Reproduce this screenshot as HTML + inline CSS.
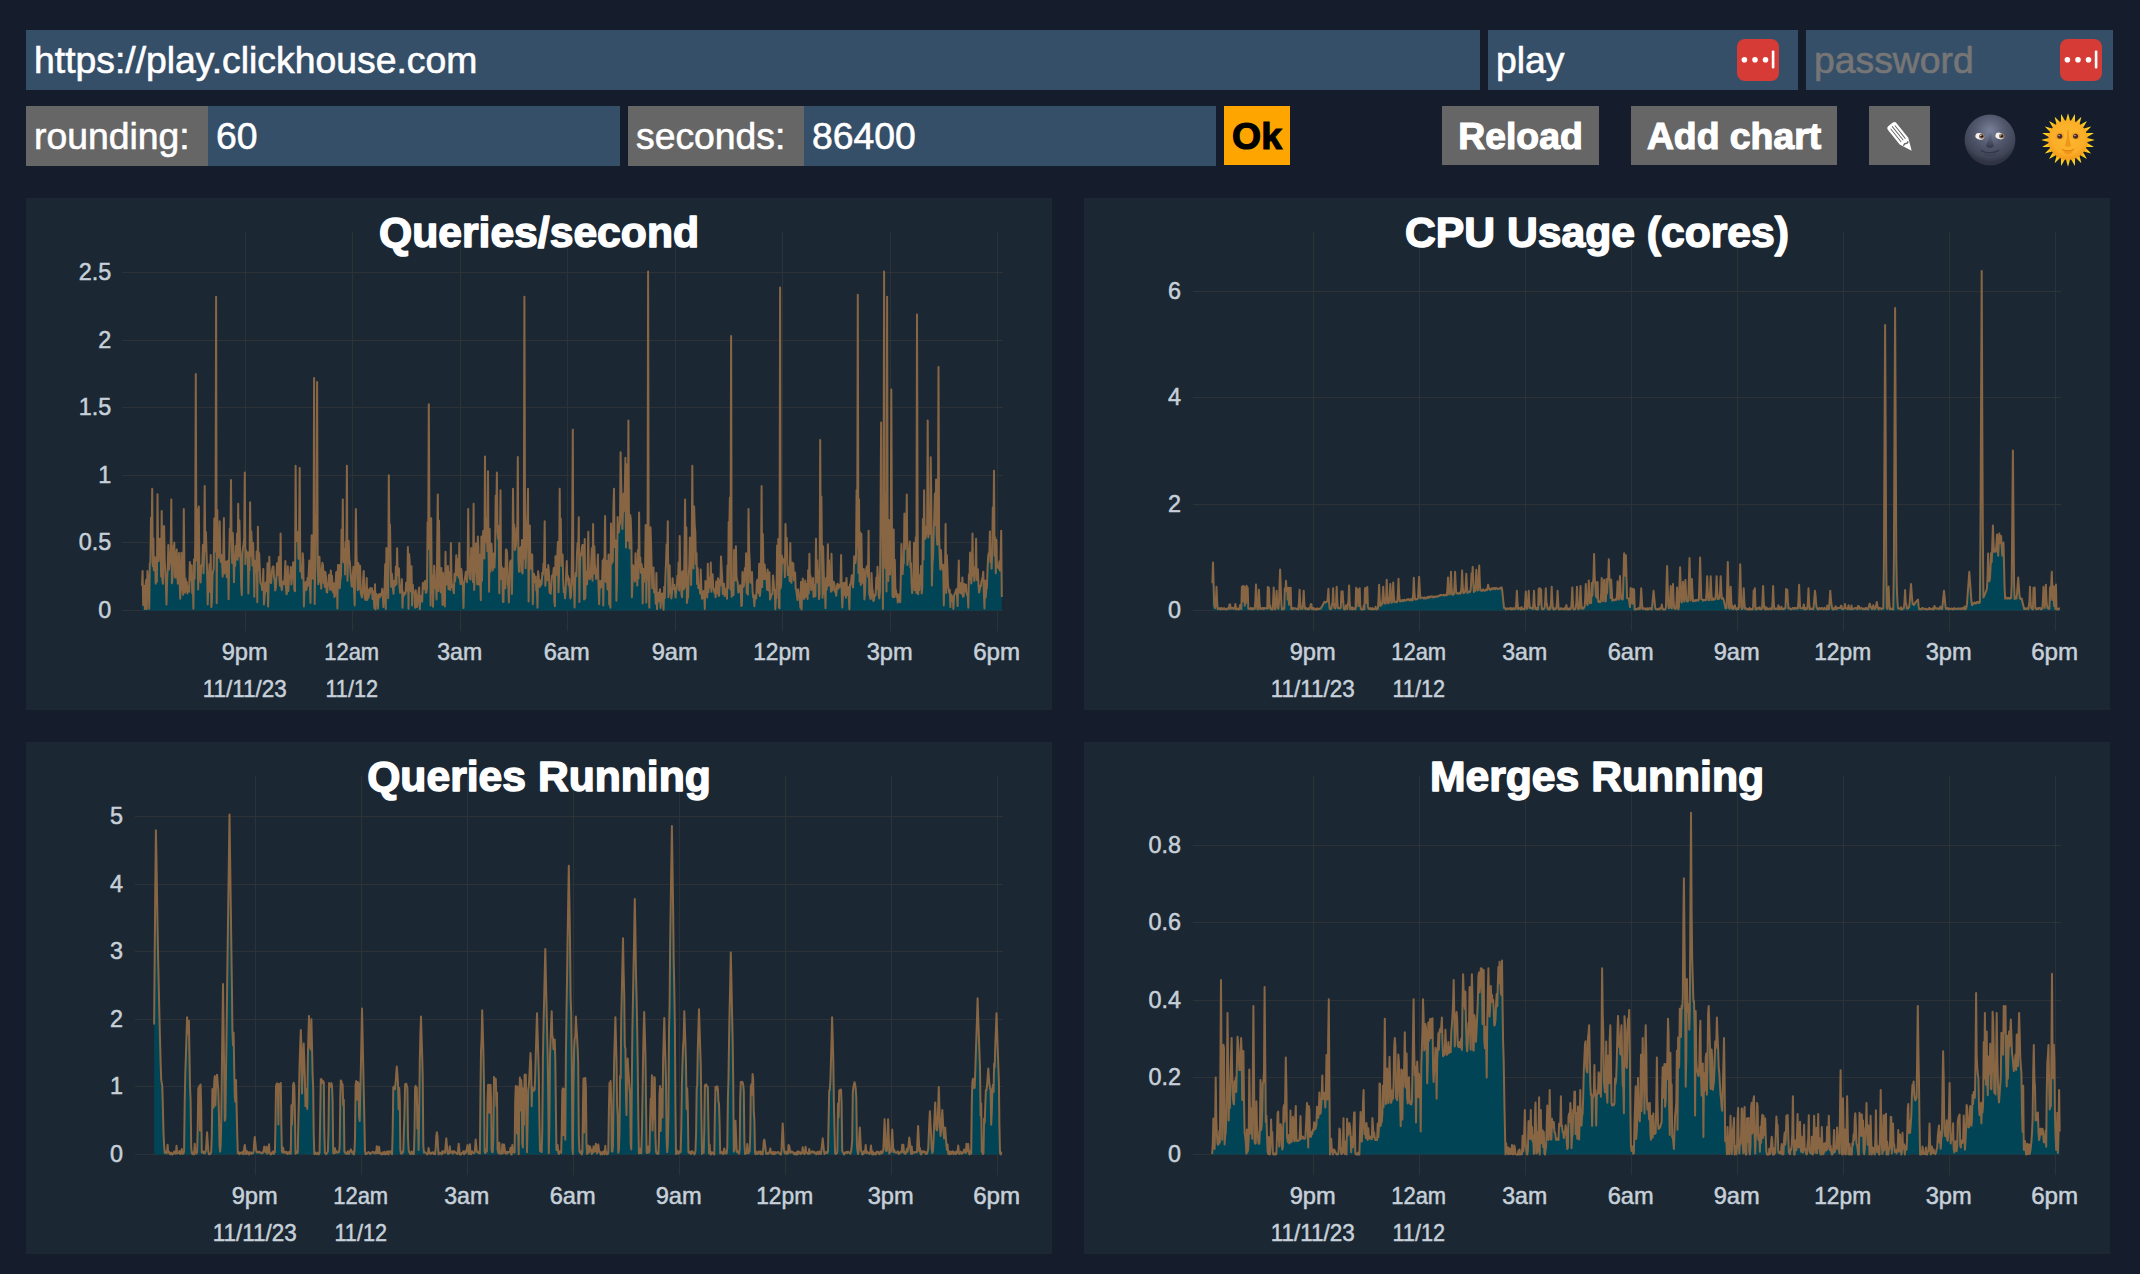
<!DOCTYPE html>
<html lang="en"><head><meta charset="utf-8"><title>ClickHouse Dashboard</title>
<style>
html,body{margin:0;padding:0;}
body{width:2140px;height:1274px;overflow:hidden;background:#151C2C;font-family:"Liberation Sans",sans-serif;color:#fff;position:relative;}
.b{position:absolute;box-sizing:border-box;height:60px;line-height:60px;font-size:37.33px;white-space:nowrap;padding-left:8px;color:#fff;-webkit-text-stroke:0.6px;}
.in{background:#364f69;}
.lb{background:#666666;}
.bt{background:#666666;font-weight:bold;text-align:center;padding:0;height:59px;line-height:61px;-webkit-text-stroke:1.2px;overflow:hidden;}
.ph{color:#767676;}
.ic{position:absolute;}
.panel{position:absolute;width:1026px;height:512px;background:#1b2834;overflow:hidden;}
.panel svg{position:absolute;left:0;top:0;}
.ttl{font:bold 42.67px "Liberation Sans",sans-serif;fill:#fff;text-anchor:middle;stroke:#fff;stroke-width:1.5px;stroke-linejoin:round;}
.ax{font:23.4px "Liberation Sans",sans-serif;fill:#c7d0d9;stroke:#c7d0d9;stroke-width:0.5px;}
.xl{text-anchor:middle;}
.yl{text-anchor:end;}
.g{stroke:#2c3235;stroke-width:1;shape-rendering:crispEdges;}
.f{fill:#004455;stroke:none;}
.s{fill:none;stroke:#886644;stroke-width:2;stroke-linejoin:round;}
</style></head>
<body>
<div class="b in" style="left:26px;top:30px;width:1454px">https://play.clickhouse.com</div>
<div class="b in" style="left:1488px;top:30px;width:310px">play</div>
<div class="b in ph" style="left:1806px;top:30px;width:307px">password</div>
<div class="b lb" style="left:26px;top:106px;width:182px">rounding:</div>
<div class="b in" style="left:208px;top:106px;width:412px">60</div>
<div class="b lb" style="left:628px;top:106px;width:176px">seconds:</div>
<div class="b in" style="left:804px;top:106px;width:412px">86400</div>
<div class="b bt" style="left:1224px;top:106px;width:66px;background:#FFA500;color:#000">Ok</div>
<div class="b bt" style="left:1442px;top:106px;width:157px">Reload</div>
<div class="b bt" style="left:1631px;top:106px;width:206px">Add chart</div>
<div class="b bt" style="left:1869px;top:106px;width:61px"></div>
<svg class="ic" style="left:1737px;top:39px" width="42" height="42" viewBox="0 0 42 42"><rect x="0" y="0" width="42" height="42" rx="8" ry="8" fill="#d73b36"/><circle cx="7.4" cy="20.7" r="2.8" fill="#fff"/><circle cx="18" cy="20.7" r="2.8" fill="#fff"/><circle cx="28.5" cy="20.7" r="2.8" fill="#fff"/><rect x="34.8" y="11.6" width="2.6" height="17.8" rx="1" fill="#fff"/></svg>
<svg class="ic" style="left:2060px;top:39px" width="42" height="42" viewBox="0 0 42 42"><rect x="0" y="0" width="42" height="42" rx="8" ry="8" fill="#d73b36"/><circle cx="7.4" cy="20.7" r="2.8" fill="#fff"/><circle cx="18" cy="20.7" r="2.8" fill="#fff"/><circle cx="28.5" cy="20.7" r="2.8" fill="#fff"/><rect x="34.8" y="11.6" width="2.6" height="17.8" rx="1" fill="#fff"/></svg>
<svg class="ic" style="left:1869px;top:106px" width="61" height="59" viewBox="0 0 61 59"><g transform="translate(22.1,19.1) rotate(51.3)"><path d="M2.2 -5.5H20.6L32.9 0L20.6 5.5H2.2Q-1 5.5 -1 2.6V-2.6Q-1 -5.5 2.2 -5.5Z" fill="#fff"/><path d="M2.6 -2.7H19.5M1.6 0H19.5M2.6 2.7H19.5" stroke="#666" stroke-width="0.95" fill="none"/><path d="M23.6 -2.6Q24.6 -1 23.6 0Q22.8 1.2 23.6 2.7" stroke="#666" stroke-width="1.5" fill="none" stroke-linecap="round"/></g></svg>
<svg class="ic" style="left:1959.5px;top:109.6px" width="60" height="60" viewBox="0 0 60 60"><defs><radialGradient id="mg" cx="0.5" cy="0.32" r="0.62"><stop offset="0" stop-color="#7a829a"/><stop offset="0.45" stop-color="#545a6f"/><stop offset="0.85" stop-color="#3f4456"/><stop offset="1" stop-color="#2f3343"/></radialGradient><linearGradient id="mn" x1="0" y1="0" x2="0" y2="1"><stop offset="0" stop-color="#6f778d" stop-opacity="0"/><stop offset="1" stop-color="#2e3242"/></linearGradient></defs><circle cx="30" cy="30" r="25.4" fill="url(#mg)"/><path d="M29.2 17Q28.6 30 26.4 34.6Q25 37.6 30 38Q35.2 37.6 33.6 34.6Q31.6 30 31 17Z" fill="url(#mn)" opacity="0.85"/><path d="M21.2 40.6Q30 45.4 38.8 40.4" stroke="#2e3242" stroke-width="1.3" fill="none" stroke-linecap="round" opacity="0.8"/><path d="M24.5 44.6Q30 46.6 35.5 44.6" stroke="#30344a" stroke-width="1" fill="none" stroke-linecap="round" opacity="0.5"/><ellipse cx="19.8" cy="26.3" rx="4.5" ry="3.2" fill="#f4f1ec" transform="rotate(14 19.8 26.3)"/><ellipse cx="39.8" cy="26" rx="4.5" ry="3.2" fill="#f4f1ec" transform="rotate(14 39.8 26)"/><circle cx="21.6" cy="26.2" r="2.5" fill="#86644f"/><circle cx="41.6" cy="25.9" r="2.5" fill="#86644f"/><circle cx="21.8" cy="26.2" r="1.25" fill="#1d1a1c"/><circle cx="41.8" cy="25.9" r="1.25" fill="#1d1a1c"/><circle cx="20.9" cy="25.3" r="0.6" fill="#fff"/><circle cx="40.9" cy="25" r="0.6" fill="#fff"/></svg>
<svg class="ic" style="left:2037.6px;top:109.5px" width="60" height="60" viewBox="0 0 60 60"><defs><radialGradient id="sg" cx="0.5" cy="0.42" r="0.6"><stop offset="0" stop-color="#fdb830"/><stop offset="0.7" stop-color="#fbae27"/><stop offset="1" stop-color="#f3971b"/></radialGradient><radialGradient id="sr" cx="0.5" cy="0.5" r="0.5"><stop offset="0.68" stop-color="#f59f1c"/><stop offset="0.86" stop-color="#fcd41c"/><stop offset="1" stop-color="#fde93a"/></radialGradient></defs><path d="M27.69 11.54L30.00 3.20L32.31 11.54ZM32.55 11.58L36.94 4.11L37.01 12.77ZM37.23 12.86L43.40 6.79L41.23 15.17ZM41.42 15.32L48.95 11.05L44.68 18.58ZM44.83 18.77L53.21 16.60L47.14 22.77ZM47.23 22.99L55.89 23.06L48.42 27.45ZM48.46 27.69L56.80 30.00L48.46 32.31ZM48.42 32.55L55.89 36.94L47.23 37.01ZM47.14 37.23L53.21 43.40L44.83 41.23ZM44.68 41.42L48.95 48.95L41.42 44.68ZM41.23 44.83L43.40 53.21L37.23 47.14ZM37.01 47.23L36.94 55.89L32.55 48.42ZM32.31 48.46L30.00 56.80L27.69 48.46ZM27.45 48.42L23.06 55.89L22.99 47.23ZM22.77 47.14L16.60 53.21L18.77 44.83ZM18.58 44.68L11.05 48.95L15.32 41.42ZM15.17 41.23L6.79 43.40L12.86 37.23ZM12.77 37.01L4.11 36.94L11.58 32.55ZM11.54 32.31L3.20 30.00L11.54 27.69ZM11.58 27.45L4.11 23.06L12.77 22.99ZM12.86 22.77L6.79 16.60L15.17 18.77ZM15.32 18.58L11.05 11.05L18.58 15.32ZM18.77 15.17L16.60 6.79L22.77 12.86ZM22.99 12.77L23.06 4.11L27.45 11.58Z" fill="url(#sr)"/><circle cx="30.0" cy="30.0" r="19.7" fill="url(#sg)"/><path d="M29.3 20Q28.8 31 27.2 34.4Q26.4 36.6 30 36.8Q33.6 36.6 32.8 34.4Q31.2 31 30.7 20Z" fill="#e98d14" opacity="0.75"/><ellipse cx="21.8" cy="26" rx="4.4" ry="3.6" fill="#f0951a" opacity="0.55"/><ellipse cx="37.6" cy="26" rx="4.4" ry="3.6" fill="#f0951a" opacity="0.55"/><circle cx="21.8" cy="26.3" r="2.5" fill="#4a2b2e"/><circle cx="37.6" cy="26.3" r="2.5" fill="#4a2b2e"/><circle cx="21.1" cy="25.5" r="0.7" fill="#d9c6c0"/><circle cx="36.9" cy="25.5" r="0.7" fill="#d9c6c0"/><path d="M24.6 39.6Q30 42 35.4 39.4Q33.6 44.2 30 44.4Q26.4 44.2 24.6 39.6Z" fill="#ee9016" opacity="0.8"/><path d="M24.2 39.6Q30 42.4 35.8 39.4" stroke="#dd7f10" stroke-width="0.9" fill="none" stroke-linecap="round"/></svg>
<div class="panel" style="left:26px;top:198px"><svg width="1026" height="512" viewBox="0 0 1026 512">
<path class="g" d="M219.5 34.4V432.5M326.5 34.4V432.5M434.5 34.4V432.5M541.5 34.4V432.5M649.5 34.4V432.5M756.5 34.4V432.5M864.5 34.4V432.5M971.5 34.4V432.5M96.2 412.5H976.8M96.2 344.5H976.8M96.2 277.5H976.8M96.2 209.5H976.8M96.2 142.5H976.8M96.2 74.5H976.8"/>
<path class="f" d="M116 412.5L116 387.8L116.6 372.9L117.2 406.9L117.8 387.8L118.4 390.1L119 411.1L119.6 386.9L120.2 381.7L120.8 411L121.4 373L122 392.2L122.6 378.4L123.2 410.7L123.8 365.4L124.4 364.7L125 319.8L125.6 343.1L126.2 290.8L126.8 368.3L127.4 340.3L127.9 372.3L128.5 366.5L129.1 359.3L129.7 385.7L130.3 381.1L130.9 383.7L131.5 296.2L132.1 351.6L132.7 362.9L133.3 340.9L133.9 351.7L134.5 340.6L135.1 378.4L135.7 313.1L136.3 381.5L136.9 385.7L137.5 330L138.1 327.9L138.7 362.8L139.3 374.5L139.9 386.8L140.5 406.6L141.1 382.5L141.7 370.6L142.3 346.9L142.9 371.6L143.5 365.6L144.1 364.9L144.7 350L145.3 301.6L145.9 385.3L146.5 380.1L147.1 348.1L147.7 354.6L148.3 344.5L148.9 378.8L149.5 379.6L150.1 359.4L150.7 351.5L151.3 376.1L151.8 385.8L152.4 381.8L153 355L153.6 380.5L154.2 400.8L154.8 392L155.4 354.8L156 391.7L156.6 379.6L157.2 396.8L157.8 311.1L158.4 368.5L159 394.4L159.6 380.5L160.2 393L160.8 383.9L161.4 395.5L162 388.6L162.6 392.5L163.2 393.6L163.8 364L164.4 374.9L165 382.2L165.6 367.2L166.2 395.2L166.8 382.2L167.4 410.7L168 361.2L168.6 380.8L169.2 344.4L169.8 175.9L170.4 362.3L171 310.9L171.6 352.8L172.2 391.4L172.8 308.4L173.4 372.5L174 378.5L174.6 384.4L175.2 367.8L175.7 366.7L176.3 367.4L176.9 347.1L177.5 375.3L178.1 357.2L178.7 288.1L179.3 353.3L179.9 334L180.5 354L181.1 372.9L181.7 406.5L182.3 387.1L182.9 378.8L183.5 366.3L184.1 394.1L184.7 357L185.3 409L185.9 404.3L186.5 376.8L187.1 373.1L187.7 370.7L188.3 320.6L188.9 339.9L189.5 353.4L190.1 98.8L190.7 405.2L191.3 311.9L191.9 359.9L192.5 350.9L193.1 358.5L193.7 323.3L194.3 359.8L194.9 364.1L195.5 356.9L196.1 364.6L196.7 378.6L197.3 355.5L197.9 319.9L198.5 375.4L199.1 370.2L199.6 370.5L200.2 363.6L200.8 379.2L201.4 372.8L202 362.8L202.6 401.3L203.2 359.4L203.8 330.5L204.4 340.5L205 282L205.6 346.1L206.2 365L206.8 334.9L207.4 355.4L208 384.2L208.6 357.5L209.2 367.8L209.8 347.8L210.4 361L211 335.6L211.6 361.8L212.2 305.7L212.8 357.9L213.4 322.4L214 349.7L214.6 362.3L215.2 388.1L215.8 397.1L216.4 355.8L217 350.1L217.6 346.3L218.2 339.8L218.8 274.6L219.4 366.3L220 352.1L220.6 358.7L221.2 358.3L221.8 354.3L222.4 395.5L223 367.8L223.5 372.3L224.1 304.3L224.7 357.8L225.3 333.2L225.9 346.8L226.5 367.6L227.1 345.1L227.7 363.8L228.3 398.8L228.9 370.2L229.5 362.7L230.1 374.6L230.7 353.4L231.3 404.2L231.9 328.7L232.5 372.1L233.1 355L233.7 368.6L234.3 384.5L234.9 386.1L235.5 386.4L236.1 392L236.7 386.6L237.3 370.9L237.9 406.4L238.5 399.6L239.1 393.7L239.7 384.4L240.3 393.3L240.9 388.8L241.5 365.3L242.1 408.6L242.7 385.3L243.3 358.8L243.9 383.1L244.5 383.9L245.1 385.2L245.7 375.8L246.3 370.8L246.9 368.4L247.4 368.4L248 379.2L248.6 381.9L249.2 392.4L249.8 390L250.4 380.3L251 365.3L251.6 365.4L252.2 376.8L252.8 359.1L253.4 380.5L254 387.7L254.6 335.4L255.2 388.1L255.8 392.2L256.4 387L257 383.5L257.6 385.1L258.2 386.1L258.8 376.7L259.4 363L260 389.5L260.6 396.3L261.2 393.3L261.8 368.3L262.4 393L263 380.7L263.6 377.8L264.2 378.8L264.8 368.9L265.4 386.4L266 380.5L266.6 377.3L267.2 364.3L267.8 373.6L268.4 392.2L269 393.2L269.6 267.8L270.2 338.1L270.8 343.2L271.3 339.9L271.9 333.9L272.5 360.8L273.1 336.9L273.7 269.9L274.3 373.6L274.9 367.2L275.5 369.4L276.1 380.2L276.7 355.3L277.3 363.4L277.9 408.4L278.5 388.6L279.1 388.5L279.7 384.1L280.3 392.2L280.9 388.5L281.5 380L282.1 387.5L282.7 374.7L283.3 362.6L283.9 387.4L284.5 404.9L285.1 371.7L285.7 337.2L286.3 380.4L286.9 380.6L287.5 366.9L288.1 180L288.7 406L289.3 362.7L289.9 318.1L290.5 336.6L291.1 184L291.7 368.5L292.3 386.3L292.9 358.7L293.5 358.9L294.1 383.7L294.7 380.5L295.2 390.6L295.8 371.4L296.4 364.8L297 367.5L297.6 385.3L298.2 373.5L298.8 388.9L299.4 374.1L300 379.2L300.6 394.1L301.2 394.6L301.8 386.8L302.4 384.9L303 376.7L303.6 385.6L304.2 391.8L304.8 372.4L305.4 391.4L306 377.7L306.6 392.7L307.2 394.5L307.8 385.3L308.4 398.9L309 398L309.6 385.7L310.2 374.4L310.8 373.7L311.4 410.4L312 367.1L312.6 389.5L313.2 367.1L313.8 390.3L314.4 381.3L315 377.5L315.6 331.4L316.2 361.5L316.8 301.6L317.4 364.2L318 361.3L318.6 351.1L319.1 376.5L319.7 343.7L320.3 361.6L320.9 267.8L321.5 382.7L322.1 356.7L322.7 342.7L323.3 361.7L323.9 364.3L324.5 374.6L325.1 382.1L325.7 388.4L326.3 388.6L326.9 375.1L327.5 368.8L328.1 394.1L328.7 407.4L329.3 363.3L329.9 311.1L330.5 356.3L331.1 373.3L331.7 392.2L332.3 365L332.9 390.9L333.5 367.5L334.1 367.9L334.7 394.3L335.3 396.9L335.9 399.4L336.5 395.4L337.1 382.1L337.7 372.9L338.3 391.9L338.9 400.5L339.5 402L340.1 393.3L340.7 380L341.3 401.9L341.9 391.3L342.5 399.8L343 396L343.6 396.5L344.2 390.1L344.8 393.7L345.4 391.6L346 390.2L346.6 401.1L347.2 393.6L347.8 400.6L348.4 410.2L349 386.2L349.6 411.4L350.2 395.7L350.8 399.1L351.4 397.8L352 410.5L352.6 396.2L353.2 398.8L353.8 399.5L354.4 395.7L355 395.8L355.6 397.5L356.2 390.8L356.8 397.9L357.4 409.1L358 399.7L358.6 390.4L359.2 366.2L359.8 411.1L360.4 349.9L361 352.2L361.6 385.5L362.2 400.2L362.8 277.3L363.4 340.6L364 326.5L364.6 364.6L365.2 388.8L365.8 375.4L366.4 381.9L366.9 390.1L367.5 395.8L368.1 383L368.7 385.4L369.3 387.5L369.9 368.4L370.5 386L371.1 350.3L371.7 377.2L372.3 371.5L372.9 370.3L373.5 388.4L374.1 394.8L374.7 390.5L375.3 390.6L375.9 381.2L376.5 409.7L377.1 394.1L377.7 398L378.3 396.2L378.9 394.8L379.5 395.6L380.1 384.7L380.7 390.6L381.3 392.8L381.9 349L382.5 410.7L383.1 356.1L383.7 364.3L384.3 391.6L384.9 393.4L385.5 368.3L386.1 407.4L386.7 386.4L387.3 393.7L387.9 393.9L388.5 394.5L389.1 409.8L389.7 392.2L390.3 400.5L390.8 409.1L391.4 407.3L392 398.7L392.6 393.2L393.2 389.5L393.8 411.1L394.4 398.3L395 400.1L395.6 397.5L396.2 403.6L396.8 384.9L397.4 388.2L398 391L398.6 383.7L399.2 382.8L399.8 394.8L400.4 394.5L401 390.2L401.6 324.3L402.2 351L402.8 206.3L403.4 326.3L404 335.8L404.6 407.4L405.2 320.3L405.8 394.7L406.4 377.3L407 408.7L407.6 387.5L408.2 367.8L408.8 381.8L409.4 390.1L410 387.5L410.6 401.4L411.2 347.7L411.8 296.6L412.4 393L413 322.8L413.6 374.6L414.2 384.5L414.7 394.3L415.3 369.9L415.9 380.8L416.5 407L417.1 375.1L417.7 405.9L418.3 389.3L418.9 408.6L419.5 353.8L420.1 385.4L420.7 386.5L421.3 383.8L421.9 368L422.5 391.3L423.1 374.3L423.7 376.6L424.3 391.9L424.9 344.9L425.5 381.5L426.1 389.4L426.7 386.9L427.3 392.2L427.9 395.3L428.5 375.7L429.1 383.1L429.7 374.4L430.3 357.3L430.9 377L431.5 361.4L432.1 375.8L432.7 379.6L433.3 344.9L433.9 380.5L434.5 386.1L435.1 370.8L435.7 373.7L436.3 385.5L436.9 387.2L437.5 410.1L438.1 385.3L438.6 382.4L439.2 378.6L439.8 373.8L440.4 375.4L441 384.3L441.6 371.5L442.2 311.1L442.8 358L443.4 374.4L444 380.9L444.6 381.5L445.2 349.9L445.8 357.2L446.4 352L447 384.3L447.6 305.7L448.2 391.9L448.8 370.8L449.4 374.6L450 345.3L450.6 362.7L451.2 386.3L451.8 338.6L452.4 349.5L453 386.7L453.6 356.8L454.2 380.2L454.8 402.2L455.4 338.5L456 382.8L456.6 347.4L457.2 332.9L457.8 348.5L458.4 360.5L459 258.4L459.6 334L460.2 344.2L460.8 320.4L461.4 353.2L462 273.2L462.5 345.1L463.1 393.7L463.7 331L464.3 373.8L464.9 363.8L465.5 345.7L466.1 357.5L466.7 372.4L467.3 358L467.9 355.4L468.5 369.6L469.1 352.9L469.7 297.4L470.3 315.3L470.9 274.6L471.5 334.1L472.1 340.7L472.7 328.1L473.3 395.2L473.9 353.8L474.5 292.2L475.1 380.7L475.7 368.8L476.3 371.6L476.9 403.8L477.5 404L478.1 370.6L478.7 387.5L479.3 390.2L479.9 351.4L480.5 351.6L481.1 355.1L481.7 385.8L482.3 388.6L482.9 404.4L483.5 379.3L484.1 364.3L484.7 362.5L485.3 362.7L485.9 396L486.4 366.6L487 290.8L487.6 333.1L488.2 326.6L488.8 352.1L489.4 350.3L490 346.9L490.6 330.1L491.2 341L491.8 259L492.4 361.9L493 373.8L493.6 350.2L494.2 362.1L494.8 348.9L495.4 373.7L496 342L496.6 375.6L497.2 348.2L497.8 360.4L498.4 98.8L499 312.4L499.6 370.3L500.2 352L500.8 335.3L501.4 318.4L502 290.8L502.6 403.6L503.2 354.5L503.8 327.6L504.4 366.2L505 370.8L505.6 356.5L506.2 356.5L506.8 406.3L507.4 387L508 375.7L508.6 384.3L509.2 384.3L509.8 378.6L510.3 392.5L510.9 391.5L511.5 409.8L512.1 373.3L512.7 378.3L513.3 386.6L513.9 389L514.5 382.6L515.1 387L515.7 385.2L516.3 374.7L516.9 376.7L517.5 365.6L518.1 367.1L518.7 323.3L519.3 387.8L519.9 381.2L520.5 371.3L521.1 380.3L521.7 382.1L522.3 367L522.9 373.8L523.5 394L524.1 395.1L524.7 395.8L525.3 386.5L525.9 377.8L526.5 377.1L527.1 378.8L527.7 370L528.3 403L528.9 408.2L529.5 358.2L530.1 368.1L530.7 376.7L531.3 357.6L531.9 343.9L532.5 394.2L533.1 374.8L533.7 290.8L534.2 350.4L534.8 320.5L535.4 367.7L536 362.8L536.6 356.4L537.2 382.9L537.8 394.2L538.4 389.9L539 400.3L539.6 394L540.2 374.5L540.8 363L541.4 382.6L542 378L542.6 387.2L543.2 380.8L543.8 391.7L544.4 400.5L545 398.1L545.6 387L546.2 328.9L546.8 231.7L547.4 383.4L548 388.3L548.6 409.4L549.2 381.3L549.8 374.7L550.4 378L551 355.3L551.6 345L552.2 353.6L552.8 319.2L553.4 404.1L554 362.2L554.6 355.6L555.2 357.4L555.8 350L556.4 346.9L557 346.9L557.6 371.7L558.1 401.4L558.7 340.9L559.3 400.4L559.9 373.4L560.5 378.7L561.1 386.2L561.7 367.6L562.3 333.7L562.9 376.5L563.5 381.2L564.1 380.9L564.7 376.9L565.3 362.4L565.9 350.1L566.5 382.7L567.1 326L567.7 375.8L568.3 347.9L568.9 367.7L569.5 371.2L570.1 380.9L570.7 378.6L571.3 377.2L571.9 356.5L572.5 388.5L573.1 406.2L573.7 385.7L574.3 382.9L574.9 389.5L575.5 383.9L576.1 383.5L576.7 362.4L577.3 407.5L577.9 360.7L578.5 360.9L579.1 317.9L579.7 383.5L580.3 384.3L580.9 362.9L581.5 391.4L582 383.7L582.6 356.4L583.2 406.6L583.8 387.4L584.4 409.7L585 325.5L585.6 365.7L586.2 339.3L586.8 363.8L587.4 311.9L588 290.8L588.6 349.1L589.2 346.3L589.8 342.5L590.4 402.7L591 382.5L591.6 318.9L592.2 333.9L592.8 334.5L593.4 326.6L594 325.9L594.6 254.3L595.2 285.7L595.8 308.1L596.4 331L597 312.1L597.6 295.8L598.2 312.7L598.8 291.8L599.4 259.7L600 349.6L600.6 266.5L601.2 305.4L601.8 342.7L602.4 222.4L603 325.4L603.6 350.6L604.2 316.9L604.8 321.3L605.4 342.6L605.9 399.2L606.5 385.1L607.1 367.2L607.7 375.3L608.3 376.6L608.9 383.5L609.5 355.2L610.1 380.6L610.7 367.4L611.3 387.6L611.9 351.9L612.5 380.5L613.1 314.5L613.7 369.4L614.3 359.4L614.9 374.8L615.5 366L616.1 370.5L616.7 405.6L617.3 370.9L617.9 384L618.5 371.1L619.1 369.7L619.7 327L620.3 404.4L620.9 370L621.5 381.4L622.1 73.6L622.7 369.5L623.3 409.7L623.9 364.1L624.5 329.2L625.1 347.4L625.7 372.1L626.3 390.2L626.9 372.3L627.5 369.4L628.1 394.6L628.7 392.3L629.3 396.3L629.8 405.7L630.4 374.9L631 411.1L631.6 398.5L632.2 394.8L632.8 403.3L633.4 398.5L634 391.3L634.6 410L635.2 396.1L635.8 397.4L636.4 395.4L637 403.6L637.6 411.7L638.2 388.8L638.8 400.3L639.4 378L640 365.6L640.6 346.2L641.2 361.5L641.8 323.3L642.4 399.3L643 394.1L643.6 367.3L644.2 391.5L644.8 390.7L645.4 400.4L646 394.7L646.6 380.3L647.2 387.8L647.8 391L648.4 387.1L649 392.6L649.6 399.6L650.2 392.1L650.8 390.2L651.4 377.8L652 386.2L652.6 364.4L653.2 392.6L653.7 338.1L654.3 378.8L654.9 374.3L655.5 396.6L656.1 399.2L656.7 373.3L657.3 379.4L657.9 391.2L658.5 354.2L659.1 301.6L659.7 388.9L660.3 329.6L660.9 404.9L661.5 400.4L662.1 399.2L662.7 378.5L663.3 367.3L663.9 339.6L664.5 342.1L665.1 387.1L665.7 351.6L666.3 267.8L666.9 348L667.5 370.5L668.1 308.4L668.7 327.5L669.3 333.8L669.9 366L670.5 355.1L671.1 386.1L671.7 370.1L672.3 390L672.9 388.2L673.5 387.2L674.1 395.5L674.7 371.4L675.3 389.6L675.9 400.8L676.5 400.4L677.1 395.7L677.6 393.1L678.2 394.3L678.8 411L679.4 382.9L680 393.2L680.6 386.4L681.2 399.5L681.8 365.7L682.4 394.2L683 379.5L683.6 384.7L684.2 389.4L684.8 364.5L685.4 393.7L686 383L686.6 376.2L687.2 388.9L687.8 391.3L688.4 394.8L689 391.5L689.6 399.3L690.2 383.6L690.8 395.1L691.4 386.9L692 380.2L692.6 397.8L693.2 397.8L693.8 382L694.4 387.4L695 358.4L695.6 369.9L696.2 379.7L696.8 396L697.4 388.8L698 385.8L698.6 398.1L699.2 393.6L699.8 395.8L700.4 390L701 400.7L701.5 367.4L702.1 390.1L702.7 323.9L703.3 332.9L703.9 299.6L704.5 391.6L705.1 138L705.7 398.7L706.3 392L706.9 395.8L707.5 397.2L708.1 351.9L708.7 367.2L709.3 382.6L709.9 348.3L710.5 378.6L711.1 382L711.7 384.5L712.3 394.5L712.9 394L713.5 390.8L714.1 387.3L714.7 387.9L715.3 408.1L715.9 407.6L716.5 373.9L717.1 385.7L717.7 388.7L718.3 384L718.9 370L719.5 381.4L720.1 355.2L720.7 395L721.3 371.3L721.9 396.7L722.5 311.1L723.1 351.9L723.7 362.7L724.3 384.6L724.9 375.1L725.4 384.8L726 374.1L726.6 393.4L727.2 399.4L727.8 399.7L728.4 408.2L729 397.2L729.6 398.8L730.2 400.5L730.8 383.5L731.4 381.7L732 390.1L732.6 395.2L733.2 365.7L733.8 398L734.4 393.8L735 369.2L735.6 288.1L736.2 389.1L736.8 336.1L737.4 366.2L738 381.1L738.6 366.4L739.2 373.9L739.8 381.1L740.4 377.2L741 391.8L741.6 371.6L742.2 392L742.8 392.5L743.4 374.2L744 401.6L744.6 400.2L745.2 397.6L745.8 396L746.4 395.9L747 377.4L747.6 383.4L748.2 391.8L748.8 391.5L749.3 411.3L749.9 398.9L750.5 400.1L751.1 347.4L751.7 385.7L752.3 341L752.9 409.4L753.5 410.3L754.1 89.4L754.7 390.2L755.3 383.6L755.9 357.7L756.5 364.7L757.1 363.5L757.7 361.9L758.3 360.8L758.9 379.1L759.5 326L760.1 356.9L760.7 339.8L761.3 364.3L761.9 377.1L762.5 374.9L763.1 369.1L763.7 382.9L764.3 344.9L764.9 380.3L765.5 384.8L766.1 364.4L766.7 364.9L767.3 365.4L767.9 382.1L768.5 381.7L769.1 374.5L769.7 390.8L770.3 392.1L770.9 397.2L771.5 402.1L772.1 391.3L772.7 395.5L773.2 397.7L773.8 400.4L774.4 409.7L775 384.1L775.6 411.5L776.2 388.7L776.8 380.5L777.4 393.9L778 400.9L778.6 399.8L779.2 382.6L779.8 393.3L780.4 398.7L781 385.8L781.6 401L782.2 372L782.8 395.6L783.4 355.7L784 384.5L784.6 378.1L785.2 392L785.8 388L786.4 384.3L787 380.1L787.6 399.1L788.2 396.1L788.8 387.1L789.4 398.2L790 340.8L790.6 384.6L791.2 362.3L791.8 381.3L792.4 372.3L793 401.1L793.6 395.9L794.2 242.1L794.8 350.9L795.4 298.4L796 361.6L796.6 399.8L797.1 348.5L797.7 371L798.3 395.9L798.9 392.2L799.5 410.2L800.1 380L800.7 391.5L801.3 374.6L801.9 346.3L802.5 387.7L803.1 362.4L803.7 386.8L804.3 371.9L804.9 393.8L805.5 355.7L806.1 382L806.7 392.5L807.3 383.8L807.9 384.2L808.5 387.4L809.1 394L809.7 394.4L810.3 397.7L810.9 388.1L811.5 385.7L812.1 390.8L812.7 386.7L813.3 389.5L813.9 388.4L814.5 388L815.1 357.1L815.7 393.3L816.3 409.4L816.9 396.9L817.5 385L818.1 396.8L818.7 391.6L819.3 384.5L819.9 399.8L820.5 380L821 394.4L821.6 397.1L822.2 389L822.8 399.1L823.4 411.2L824 386.3L824.6 386.9L825.2 382.7L825.8 377.2L826.4 381.6L827 389.4L827.6 381.3L828.2 358.2L828.8 359.5L829.4 365.1L830 359.5L830.6 292.1L831.2 348.2L831.8 96.7L832.4 375L833 301.3L833.6 383.5L834.2 334.2L834.8 387L835.4 335.9L836 374.9L836.6 383.3L837.2 385.4L837.8 371L838.4 401.4L839 395.6L839.6 376.6L840.2 371.3L840.8 368.6L841.4 367.7L842 378.7L842.6 332.7L843.2 395.5L843.8 397.9L844.4 400.8L844.9 400.9L845.5 375.1L846.1 389.5L846.7 393.1L847.3 403L847.9 402.6L848.5 396.7L849.1 397.8L849.7 396.1L850.3 379.4L850.9 390.8L851.5 368.7L852.1 382L852.7 397.3L853.3 400.5L853.9 393.1L854.5 330.9L855.1 224.6L855.7 334.6L856.3 306.6L856.9 411.1L857.5 325.6L858.1 73.6L858.7 338.7L859.3 369.9L859.9 296.1L860.5 393.4L861.1 98.8L861.7 341.5L862.3 383L862.9 321.9L863.5 349.1L864.1 376.6L864.7 350.5L865.3 191.6L865.9 324.7L866.5 398L867.1 399.3L867.7 331.4L868.3 399L868.8 361.7L869.4 392.4L870 392.1L870.6 399.1L871.2 396L871.8 404.6L872.4 401.6L873 398.8L873.6 395.9L874.2 404.2L874.8 379.7L875.4 346L876 363.9L876.6 376.1L877.2 366.9L877.8 364.7L878.4 315.4L879 351.1L879.6 335.3L880.2 340.8L880.8 296.6L881.4 367L882 361.7L882.6 357.9L883.2 351.6L883.8 343.4L884.4 369.5L885 365.3L885.6 386L886.2 395.1L886.8 384.9L887.4 387.4L888 344.7L888.6 392.2L889.2 385.3L889.8 339.2L890.4 395.1L891 116.4L891.6 319.7L892.2 396.2L892.7 385.2L893.3 392L893.9 377.2L894.5 378.9L895.1 367.9L895.7 395.4L896.3 389.5L896.9 320.9L897.5 361.6L898.1 292.2L898.7 334.3L899.3 340.8L899.9 338.1L900.5 328.4L901.1 335.6L901.7 222.4L902.3 339.4L902.9 327.4L903.5 335.9L904.1 321.5L904.7 259.2L905.3 303.9L905.9 387.4L906.5 365.1L907.1 359.2L907.7 333.5L908.3 318.6L908.9 295.6L909.5 326.9L910.1 281.4L910.7 337L911.3 346.7L911.9 335.1L912.5 169.1L913.1 337.2L913.7 358.4L914.3 371.4L914.9 352L915.5 364.4L916.1 367.4L916.6 371.9L917.2 367L917.8 407.4L918.4 376.8L919 374L919.6 326L920.2 395L920.8 357.1L921.4 370.5L922 387.3L922.6 390.7L923.2 394.7L923.8 391.9L924.4 409.3L925 396.4L925.6 397.2L926.2 403.1L926.8 399.1L927.4 410.9L928 397.8L928.6 396L929.2 395.1L929.8 392.8L930.4 391.1L931 397.4L931.6 408.1L932.2 385.7L932.8 362.5L933.4 394.5L934 387.4L934.6 395L935.2 385.1L935.8 395.9L936.4 379.4L937 398.7L937.6 398.4L938.2 385.9L938.8 393.2L939.4 390.7L940 386.4L940.5 394.8L941.1 396.9L941.7 396.2L942.3 409.8L942.9 376.4L943.5 381L944.1 354.5L944.7 376.6L945.3 385.5L945.9 373.9L946.5 335.4L947.1 377.6L947.7 369.6L948.3 382.9L948.9 368.9L949.5 369.9L950.1 340.8L950.7 381.9L951.3 376.4L951.9 371.2L952.5 387.3L953.1 394.6L953.7 391.9L954.3 387.6L954.9 388.3L955.5 382.9L956.1 381.4L956.7 378.4L957.3 373.7L957.9 395.7L958.5 410.5L959.1 382.5L959.7 399.5L960.3 390.9L960.9 390.3L961.5 372.6L962.1 359L962.7 355.3L963.3 357.4L963.9 333.4L964.4 363.9L965 351.2L965.6 370.6L966.2 354.7L966.8 309.6L967.4 331.6L968 272.7L968.6 357.8L969.2 339.3L969.8 375.2L970.4 342L971 369.1L971.6 369.3L972.2 368.2L972.8 370.8L973.4 363.4L974 372.6L974.6 360.3L975.2 332.7L975.8 399L975.8 412.5Z"/>
<path class="s" d="M116 387.8L116.6 372.9L117.2 406.9L117.8 387.8L118.4 390.1L119 411.1L119.6 386.9L120.2 381.7L120.8 411L121.4 373L122 392.2L122.6 378.4L123.2 410.7L123.8 365.4L124.4 364.7L125 319.8L125.6 343.1L126.2 290.8L126.8 368.3L127.4 340.3L127.9 372.3L128.5 366.5L129.1 359.3L129.7 385.7L130.3 381.1L130.9 383.7L131.5 296.2L132.1 351.6L132.7 362.9L133.3 340.9L133.9 351.7L134.5 340.6L135.1 378.4L135.7 313.1L136.3 381.5L136.9 385.7L137.5 330L138.1 327.9L138.7 362.8L139.3 374.5L139.9 386.8L140.5 406.6L141.1 382.5L141.7 370.6L142.3 346.9L142.9 371.6L143.5 365.6L144.1 364.9L144.7 350L145.3 301.6L145.9 385.3L146.5 380.1L147.1 348.1L147.7 354.6L148.3 344.5L148.9 378.8L149.5 379.6L150.1 359.4L150.7 351.5L151.3 376.1L151.8 385.8L152.4 381.8L153 355L153.6 380.5L154.2 400.8L154.8 392L155.4 354.8L156 391.7L156.6 379.6L157.2 396.8L157.8 311.1L158.4 368.5L159 394.4L159.6 380.5L160.2 393L160.8 383.9L161.4 395.5L162 388.6L162.6 392.5L163.2 393.6L163.8 364L164.4 374.9L165 382.2L165.6 367.2L166.2 395.2L166.8 382.2L167.4 410.7L168 361.2L168.6 380.8L169.2 344.4L169.8 175.9L170.4 362.3L171 310.9L171.6 352.8L172.2 391.4L172.8 308.4L173.4 372.5L174 378.5L174.6 384.4L175.2 367.8L175.7 366.7L176.3 367.4L176.9 347.1L177.5 375.3L178.1 357.2L178.7 288.1L179.3 353.3L179.9 334L180.5 354L181.1 372.9L181.7 406.5L182.3 387.1L182.9 378.8L183.5 366.3L184.1 394.1L184.7 357L185.3 409L185.9 404.3L186.5 376.8L187.1 373.1L187.7 370.7L188.3 320.6L188.9 339.9L189.5 353.4L190.1 98.8L190.7 405.2L191.3 311.9L191.9 359.9L192.5 350.9L193.1 358.5L193.7 323.3L194.3 359.8L194.9 364.1L195.5 356.9L196.1 364.6L196.7 378.6L197.3 355.5L197.9 319.9L198.5 375.4L199.1 370.2L199.6 370.5L200.2 363.6L200.8 379.2L201.4 372.8L202 362.8L202.6 401.3L203.2 359.4L203.8 330.5L204.4 340.5L205 282L205.6 346.1L206.2 365L206.8 334.9L207.4 355.4L208 384.2L208.6 357.5L209.2 367.8L209.8 347.8L210.4 361L211 335.6L211.6 361.8L212.2 305.7L212.8 357.9L213.4 322.4L214 349.7L214.6 362.3L215.2 388.1L215.8 397.1L216.4 355.8L217 350.1L217.6 346.3L218.2 339.8L218.8 274.6L219.4 366.3L220 352.1L220.6 358.7L221.2 358.3L221.8 354.3L222.4 395.5L223 367.8L223.5 372.3L224.1 304.3L224.7 357.8L225.3 333.2L225.9 346.8L226.5 367.6L227.1 345.1L227.7 363.8L228.3 398.8L228.9 370.2L229.5 362.7L230.1 374.6L230.7 353.4L231.3 404.2L231.9 328.7L232.5 372.1L233.1 355L233.7 368.6L234.3 384.5L234.9 386.1L235.5 386.4L236.1 392L236.7 386.6L237.3 370.9L237.9 406.4L238.5 399.6L239.1 393.7L239.7 384.4L240.3 393.3L240.9 388.8L241.5 365.3L242.1 408.6L242.7 385.3L243.3 358.8L243.9 383.1L244.5 383.9L245.1 385.2L245.7 375.8L246.3 370.8L246.9 368.4L247.4 368.4L248 379.2L248.6 381.9L249.2 392.4L249.8 390L250.4 380.3L251 365.3L251.6 365.4L252.2 376.8L252.8 359.1L253.4 380.5L254 387.7L254.6 335.4L255.2 388.1L255.8 392.2L256.4 387L257 383.5L257.6 385.1L258.2 386.1L258.8 376.7L259.4 363L260 389.5L260.6 396.3L261.2 393.3L261.8 368.3L262.4 393L263 380.7L263.6 377.8L264.2 378.8L264.8 368.9L265.4 386.4L266 380.5L266.6 377.3L267.2 364.3L267.8 373.6L268.4 392.2L269 393.2L269.6 267.8L270.2 338.1L270.8 343.2L271.3 339.9L271.9 333.9L272.5 360.8L273.1 336.9L273.7 269.9L274.3 373.6L274.9 367.2L275.5 369.4L276.1 380.2L276.7 355.3L277.3 363.4L277.9 408.4L278.5 388.6L279.1 388.5L279.7 384.1L280.3 392.2L280.9 388.5L281.5 380L282.1 387.5L282.7 374.7L283.3 362.6L283.9 387.4L284.5 404.9L285.1 371.7L285.7 337.2L286.3 380.4L286.9 380.6L287.5 366.9L288.1 180L288.7 406L289.3 362.7L289.9 318.1L290.5 336.6L291.1 184L291.7 368.5L292.3 386.3L292.9 358.7L293.5 358.9L294.1 383.7L294.7 380.5L295.2 390.6L295.8 371.4L296.4 364.8L297 367.5L297.6 385.3L298.2 373.5L298.8 388.9L299.4 374.1L300 379.2L300.6 394.1L301.2 394.6L301.8 386.8L302.4 384.9L303 376.7L303.6 385.6L304.2 391.8L304.8 372.4L305.4 391.4L306 377.7L306.6 392.7L307.2 394.5L307.8 385.3L308.4 398.9L309 398L309.6 385.7L310.2 374.4L310.8 373.7L311.4 410.4L312 367.1L312.6 389.5L313.2 367.1L313.8 390.3L314.4 381.3L315 377.5L315.6 331.4L316.2 361.5L316.8 301.6L317.4 364.2L318 361.3L318.6 351.1L319.1 376.5L319.7 343.7L320.3 361.6L320.9 267.8L321.5 382.7L322.1 356.7L322.7 342.7L323.3 361.7L323.9 364.3L324.5 374.6L325.1 382.1L325.7 388.4L326.3 388.6L326.9 375.1L327.5 368.8L328.1 394.1L328.7 407.4L329.3 363.3L329.9 311.1L330.5 356.3L331.1 373.3L331.7 392.2L332.3 365L332.9 390.9L333.5 367.5L334.1 367.9L334.7 394.3L335.3 396.9L335.9 399.4L336.5 395.4L337.1 382.1L337.7 372.9L338.3 391.9L338.9 400.5L339.5 402L340.1 393.3L340.7 380L341.3 401.9L341.9 391.3L342.5 399.8L343 396L343.6 396.5L344.2 390.1L344.8 393.7L345.4 391.6L346 390.2L346.6 401.1L347.2 393.6L347.8 400.6L348.4 410.2L349 386.2L349.6 411.4L350.2 395.7L350.8 399.1L351.4 397.8L352 410.5L352.6 396.2L353.2 398.8L353.8 399.5L354.4 395.7L355 395.8L355.6 397.5L356.2 390.8L356.8 397.9L357.4 409.1L358 399.7L358.6 390.4L359.2 366.2L359.8 411.1L360.4 349.9L361 352.2L361.6 385.5L362.2 400.2L362.8 277.3L363.4 340.6L364 326.5L364.6 364.6L365.2 388.8L365.8 375.4L366.4 381.9L366.9 390.1L367.5 395.8L368.1 383L368.7 385.4L369.3 387.5L369.9 368.4L370.5 386L371.1 350.3L371.7 377.2L372.3 371.5L372.9 370.3L373.5 388.4L374.1 394.8L374.7 390.5L375.3 390.6L375.9 381.2L376.5 409.7L377.1 394.1L377.7 398L378.3 396.2L378.9 394.8L379.5 395.6L380.1 384.7L380.7 390.6L381.3 392.8L381.9 349L382.5 410.7L383.1 356.1L383.7 364.3L384.3 391.6L384.9 393.4L385.5 368.3L386.1 407.4L386.7 386.4L387.3 393.7L387.9 393.9L388.5 394.5L389.1 409.8L389.7 392.2L390.3 400.5L390.8 409.1L391.4 407.3L392 398.7L392.6 393.2L393.2 389.5L393.8 411.1L394.4 398.3L395 400.1L395.6 397.5L396.2 403.6L396.8 384.9L397.4 388.2L398 391L398.6 383.7L399.2 382.8L399.8 394.8L400.4 394.5L401 390.2L401.6 324.3L402.2 351L402.8 206.3L403.4 326.3L404 335.8L404.6 407.4L405.2 320.3L405.8 394.7L406.4 377.3L407 408.7L407.6 387.5L408.2 367.8L408.8 381.8L409.4 390.1L410 387.5L410.6 401.4L411.2 347.7L411.8 296.6L412.4 393L413 322.8L413.6 374.6L414.2 384.5L414.7 394.3L415.3 369.9L415.9 380.8L416.5 407L417.1 375.1L417.7 405.9L418.3 389.3L418.9 408.6L419.5 353.8L420.1 385.4L420.7 386.5L421.3 383.8L421.9 368L422.5 391.3L423.1 374.3L423.7 376.6L424.3 391.9L424.9 344.9L425.5 381.5L426.1 389.4L426.7 386.9L427.3 392.2L427.9 395.3L428.5 375.7L429.1 383.1L429.7 374.4L430.3 357.3L430.9 377L431.5 361.4L432.1 375.8L432.7 379.6L433.3 344.9L433.9 380.5L434.5 386.1L435.1 370.8L435.7 373.7L436.3 385.5L436.9 387.2L437.5 410.1L438.1 385.3L438.6 382.4L439.2 378.6L439.8 373.8L440.4 375.4L441 384.3L441.6 371.5L442.2 311.1L442.8 358L443.4 374.4L444 380.9L444.6 381.5L445.2 349.9L445.8 357.2L446.4 352L447 384.3L447.6 305.7L448.2 391.9L448.8 370.8L449.4 374.6L450 345.3L450.6 362.7L451.2 386.3L451.8 338.6L452.4 349.5L453 386.7L453.6 356.8L454.2 380.2L454.8 402.2L455.4 338.5L456 382.8L456.6 347.4L457.2 332.9L457.8 348.5L458.4 360.5L459 258.4L459.6 334L460.2 344.2L460.8 320.4L461.4 353.2L462 273.2L462.5 345.1L463.1 393.7L463.7 331L464.3 373.8L464.9 363.8L465.5 345.7L466.1 357.5L466.7 372.4L467.3 358L467.9 355.4L468.5 369.6L469.1 352.9L469.7 297.4L470.3 315.3L470.9 274.6L471.5 334.1L472.1 340.7L472.7 328.1L473.3 395.2L473.9 353.8L474.5 292.2L475.1 380.7L475.7 368.8L476.3 371.6L476.9 403.8L477.5 404L478.1 370.6L478.7 387.5L479.3 390.2L479.9 351.4L480.5 351.6L481.1 355.1L481.7 385.8L482.3 388.6L482.9 404.4L483.5 379.3L484.1 364.3L484.7 362.5L485.3 362.7L485.9 396L486.4 366.6L487 290.8L487.6 333.1L488.2 326.6L488.8 352.1L489.4 350.3L490 346.9L490.6 330.1L491.2 341L491.8 259L492.4 361.9L493 373.8L493.6 350.2L494.2 362.1L494.8 348.9L495.4 373.7L496 342L496.6 375.6L497.2 348.2L497.8 360.4L498.4 98.8L499 312.4L499.6 370.3L500.2 352L500.8 335.3L501.4 318.4L502 290.8L502.6 403.6L503.2 354.5L503.8 327.6L504.4 366.2L505 370.8L505.6 356.5L506.2 356.5L506.8 406.3L507.4 387L508 375.7L508.6 384.3L509.2 384.3L509.8 378.6L510.3 392.5L510.9 391.5L511.5 409.8L512.1 373.3L512.7 378.3L513.3 386.6L513.9 389L514.5 382.6L515.1 387L515.7 385.2L516.3 374.7L516.9 376.7L517.5 365.6L518.1 367.1L518.7 323.3L519.3 387.8L519.9 381.2L520.5 371.3L521.1 380.3L521.7 382.1L522.3 367L522.9 373.8L523.5 394L524.1 395.1L524.7 395.8L525.3 386.5L525.9 377.8L526.5 377.1L527.1 378.8L527.7 370L528.3 403L528.9 408.2L529.5 358.2L530.1 368.1L530.7 376.7L531.3 357.6L531.9 343.9L532.5 394.2L533.1 374.8L533.7 290.8L534.2 350.4L534.8 320.5L535.4 367.7L536 362.8L536.6 356.4L537.2 382.9L537.8 394.2L538.4 389.9L539 400.3L539.6 394L540.2 374.5L540.8 363L541.4 382.6L542 378L542.6 387.2L543.2 380.8L543.8 391.7L544.4 400.5L545 398.1L545.6 387L546.2 328.9L546.8 231.7L547.4 383.4L548 388.3L548.6 409.4L549.2 381.3L549.8 374.7L550.4 378L551 355.3L551.6 345L552.2 353.6L552.8 319.2L553.4 404.1L554 362.2L554.6 355.6L555.2 357.4L555.8 350L556.4 346.9L557 346.9L557.6 371.7L558.1 401.4L558.7 340.9L559.3 400.4L559.9 373.4L560.5 378.7L561.1 386.2L561.7 367.6L562.3 333.7L562.9 376.5L563.5 381.2L564.1 380.9L564.7 376.9L565.3 362.4L565.9 350.1L566.5 382.7L567.1 326L567.7 375.8L568.3 347.9L568.9 367.7L569.5 371.2L570.1 380.9L570.7 378.6L571.3 377.2L571.9 356.5L572.5 388.5L573.1 406.2L573.7 385.7L574.3 382.9L574.9 389.5L575.5 383.9L576.1 383.5L576.7 362.4L577.3 407.5L577.9 360.7L578.5 360.9L579.1 317.9L579.7 383.5L580.3 384.3L580.9 362.9L581.5 391.4L582 383.7L582.6 356.4L583.2 406.6L583.8 387.4L584.4 409.7L585 325.5L585.6 365.7L586.2 339.3L586.8 363.8L587.4 311.9L588 290.8L588.6 349.1L589.2 346.3L589.8 342.5L590.4 402.7L591 382.5L591.6 318.9L592.2 333.9L592.8 334.5L593.4 326.6L594 325.9L594.6 254.3L595.2 285.7L595.8 308.1L596.4 331L597 312.1L597.6 295.8L598.2 312.7L598.8 291.8L599.4 259.7L600 349.6L600.6 266.5L601.2 305.4L601.8 342.7L602.4 222.4L603 325.4L603.6 350.6L604.2 316.9L604.8 321.3L605.4 342.6L605.9 399.2L606.5 385.1L607.1 367.2L607.7 375.3L608.3 376.6L608.9 383.5L609.5 355.2L610.1 380.6L610.7 367.4L611.3 387.6L611.9 351.9L612.5 380.5L613.1 314.5L613.7 369.4L614.3 359.4L614.9 374.8L615.5 366L616.1 370.5L616.7 405.6L617.3 370.9L617.9 384L618.5 371.1L619.1 369.7L619.7 327L620.3 404.4L620.9 370L621.5 381.4L622.1 73.6L622.7 369.5L623.3 409.7L623.9 364.1L624.5 329.2L625.1 347.4L625.7 372.1L626.3 390.2L626.9 372.3L627.5 369.4L628.1 394.6L628.7 392.3L629.3 396.3L629.8 405.7L630.4 374.9L631 411.1L631.6 398.5L632.2 394.8L632.8 403.3L633.4 398.5L634 391.3L634.6 410L635.2 396.1L635.8 397.4L636.4 395.4L637 403.6L637.6 411.7L638.2 388.8L638.8 400.3L639.4 378L640 365.6L640.6 346.2L641.2 361.5L641.8 323.3L642.4 399.3L643 394.1L643.6 367.3L644.2 391.5L644.8 390.7L645.4 400.4L646 394.7L646.6 380.3L647.2 387.8L647.8 391L648.4 387.1L649 392.6L649.6 399.6L650.2 392.1L650.8 390.2L651.4 377.8L652 386.2L652.6 364.4L653.2 392.6L653.7 338.1L654.3 378.8L654.9 374.3L655.5 396.6L656.1 399.2L656.7 373.3L657.3 379.4L657.9 391.2L658.5 354.2L659.1 301.6L659.7 388.9L660.3 329.6L660.9 404.9L661.5 400.4L662.1 399.2L662.7 378.5L663.3 367.3L663.9 339.6L664.5 342.1L665.1 387.1L665.7 351.6L666.3 267.8L666.9 348L667.5 370.5L668.1 308.4L668.7 327.5L669.3 333.8L669.9 366L670.5 355.1L671.1 386.1L671.7 370.1L672.3 390L672.9 388.2L673.5 387.2L674.1 395.5L674.7 371.4L675.3 389.6L675.9 400.8L676.5 400.4L677.1 395.7L677.6 393.1L678.2 394.3L678.8 411L679.4 382.9L680 393.2L680.6 386.4L681.2 399.5L681.8 365.7L682.4 394.2L683 379.5L683.6 384.7L684.2 389.4L684.8 364.5L685.4 393.7L686 383L686.6 376.2L687.2 388.9L687.8 391.3L688.4 394.8L689 391.5L689.6 399.3L690.2 383.6L690.8 395.1L691.4 386.9L692 380.2L692.6 397.8L693.2 397.8L693.8 382L694.4 387.4L695 358.4L695.6 369.9L696.2 379.7L696.8 396L697.4 388.8L698 385.8L698.6 398.1L699.2 393.6L699.8 395.8L700.4 390L701 400.7L701.5 367.4L702.1 390.1L702.7 323.9L703.3 332.9L703.9 299.6L704.5 391.6L705.1 138L705.7 398.7L706.3 392L706.9 395.8L707.5 397.2L708.1 351.9L708.7 367.2L709.3 382.6L709.9 348.3L710.5 378.6L711.1 382L711.7 384.5L712.3 394.5L712.9 394L713.5 390.8L714.1 387.3L714.7 387.9L715.3 408.1L715.9 407.6L716.5 373.9L717.1 385.7L717.7 388.7L718.3 384L718.9 370L719.5 381.4L720.1 355.2L720.7 395L721.3 371.3L721.9 396.7L722.5 311.1L723.1 351.9L723.7 362.7L724.3 384.6L724.9 375.1L725.4 384.8L726 374.1L726.6 393.4L727.2 399.4L727.8 399.7L728.4 408.2L729 397.2L729.6 398.8L730.2 400.5L730.8 383.5L731.4 381.7L732 390.1L732.6 395.2L733.2 365.7L733.8 398L734.4 393.8L735 369.2L735.6 288.1L736.2 389.1L736.8 336.1L737.4 366.2L738 381.1L738.6 366.4L739.2 373.9L739.8 381.1L740.4 377.2L741 391.8L741.6 371.6L742.2 392L742.8 392.5L743.4 374.2L744 401.6L744.6 400.2L745.2 397.6L745.8 396L746.4 395.9L747 377.4L747.6 383.4L748.2 391.8L748.8 391.5L749.3 411.3L749.9 398.9L750.5 400.1L751.1 347.4L751.7 385.7L752.3 341L752.9 409.4L753.5 410.3L754.1 89.4L754.7 390.2L755.3 383.6L755.9 357.7L756.5 364.7L757.1 363.5L757.7 361.9L758.3 360.8L758.9 379.1L759.5 326L760.1 356.9L760.7 339.8L761.3 364.3L761.9 377.1L762.5 374.9L763.1 369.1L763.7 382.9L764.3 344.9L764.9 380.3L765.5 384.8L766.1 364.4L766.7 364.9L767.3 365.4L767.9 382.1L768.5 381.7L769.1 374.5L769.7 390.8L770.3 392.1L770.9 397.2L771.5 402.1L772.1 391.3L772.7 395.5L773.2 397.7L773.8 400.4L774.4 409.7L775 384.1L775.6 411.5L776.2 388.7L776.8 380.5L777.4 393.9L778 400.9L778.6 399.8L779.2 382.6L779.8 393.3L780.4 398.7L781 385.8L781.6 401L782.2 372L782.8 395.6L783.4 355.7L784 384.5L784.6 378.1L785.2 392L785.8 388L786.4 384.3L787 380.1L787.6 399.1L788.2 396.1L788.8 387.1L789.4 398.2L790 340.8L790.6 384.6L791.2 362.3L791.8 381.3L792.4 372.3L793 401.1L793.6 395.9L794.2 242.1L794.8 350.9L795.4 298.4L796 361.6L796.6 399.8L797.1 348.5L797.7 371L798.3 395.9L798.9 392.2L799.5 410.2L800.1 380L800.7 391.5L801.3 374.6L801.9 346.3L802.5 387.7L803.1 362.4L803.7 386.8L804.3 371.9L804.9 393.8L805.5 355.7L806.1 382L806.7 392.5L807.3 383.8L807.9 384.2L808.5 387.4L809.1 394L809.7 394.4L810.3 397.7L810.9 388.1L811.5 385.7L812.1 390.8L812.7 386.7L813.3 389.5L813.9 388.4L814.5 388L815.1 357.1L815.7 393.3L816.3 409.4L816.9 396.9L817.5 385L818.1 396.8L818.7 391.6L819.3 384.5L819.9 399.8L820.5 380L821 394.4L821.6 397.1L822.2 389L822.8 399.1L823.4 411.2L824 386.3L824.6 386.9L825.2 382.7L825.8 377.2L826.4 381.6L827 389.4L827.6 381.3L828.2 358.2L828.8 359.5L829.4 365.1L830 359.5L830.6 292.1L831.2 348.2L831.8 96.7L832.4 375L833 301.3L833.6 383.5L834.2 334.2L834.8 387L835.4 335.9L836 374.9L836.6 383.3L837.2 385.4L837.8 371L838.4 401.4L839 395.6L839.6 376.6L840.2 371.3L840.8 368.6L841.4 367.7L842 378.7L842.6 332.7L843.2 395.5L843.8 397.9L844.4 400.8L844.9 400.9L845.5 375.1L846.1 389.5L846.7 393.1L847.3 403L847.9 402.6L848.5 396.7L849.1 397.8L849.7 396.1L850.3 379.4L850.9 390.8L851.5 368.7L852.1 382L852.7 397.3L853.3 400.5L853.9 393.1L854.5 330.9L855.1 224.6L855.7 334.6L856.3 306.6L856.9 411.1L857.5 325.6L858.1 73.6L858.7 338.7L859.3 369.9L859.9 296.1L860.5 393.4L861.1 98.8L861.7 341.5L862.3 383L862.9 321.9L863.5 349.1L864.1 376.6L864.7 350.5L865.3 191.6L865.9 324.7L866.5 398L867.1 399.3L867.7 331.4L868.3 399L868.8 361.7L869.4 392.4L870 392.1L870.6 399.1L871.2 396L871.8 404.6L872.4 401.6L873 398.8L873.6 395.9L874.2 404.2L874.8 379.7L875.4 346L876 363.9L876.6 376.1L877.2 366.9L877.8 364.7L878.4 315.4L879 351.1L879.6 335.3L880.2 340.8L880.8 296.6L881.4 367L882 361.7L882.6 357.9L883.2 351.6L883.8 343.4L884.4 369.5L885 365.3L885.6 386L886.2 395.1L886.8 384.9L887.4 387.4L888 344.7L888.6 392.2L889.2 385.3L889.8 339.2L890.4 395.1L891 116.4L891.6 319.7L892.2 396.2L892.7 385.2L893.3 392L893.9 377.2L894.5 378.9L895.1 367.9L895.7 395.4L896.3 389.5L896.9 320.9L897.5 361.6L898.1 292.2L898.7 334.3L899.3 340.8L899.9 338.1L900.5 328.4L901.1 335.6L901.7 222.4L902.3 339.4L902.9 327.4L903.5 335.9L904.1 321.5L904.7 259.2L905.3 303.9L905.9 387.4L906.5 365.1L907.1 359.2L907.7 333.5L908.3 318.6L908.9 295.6L909.5 326.9L910.1 281.4L910.7 337L911.3 346.7L911.9 335.1L912.5 169.1L913.1 337.2L913.7 358.4L914.3 371.4L914.9 352L915.5 364.4L916.1 367.4L916.6 371.9L917.2 367L917.8 407.4L918.4 376.8L919 374L919.6 326L920.2 395L920.8 357.1L921.4 370.5L922 387.3L922.6 390.7L923.2 394.7L923.8 391.9L924.4 409.3L925 396.4L925.6 397.2L926.2 403.1L926.8 399.1L927.4 410.9L928 397.8L928.6 396L929.2 395.1L929.8 392.8L930.4 391.1L931 397.4L931.6 408.1L932.2 385.7L932.8 362.5L933.4 394.5L934 387.4L934.6 395L935.2 385.1L935.8 395.9L936.4 379.4L937 398.7L937.6 398.4L938.2 385.9L938.8 393.2L939.4 390.7L940 386.4L940.5 394.8L941.1 396.9L941.7 396.2L942.3 409.8L942.9 376.4L943.5 381L944.1 354.5L944.7 376.6L945.3 385.5L945.9 373.9L946.5 335.4L947.1 377.6L947.7 369.6L948.3 382.9L948.9 368.9L949.5 369.9L950.1 340.8L950.7 381.9L951.3 376.4L951.9 371.2L952.5 387.3L953.1 394.6L953.7 391.9L954.3 387.6L954.9 388.3L955.5 382.9L956.1 381.4L956.7 378.4L957.3 373.7L957.9 395.7L958.5 410.5L959.1 382.5L959.7 399.5L960.3 390.9L960.9 390.3L961.5 372.6L962.1 359L962.7 355.3L963.3 357.4L963.9 333.4L964.4 363.9L965 351.2L965.6 370.6L966.2 354.7L966.8 309.6L967.4 331.6L968 272.7L968.6 357.8L969.2 339.3L969.8 375.2L970.4 342L971 369.1L971.6 369.3L972.2 368.2L972.8 370.8L973.4 363.4L974 372.6L974.6 360.3L975.2 332.7L975.8 399"/>
<text class="ttl" x="513" y="49.1">Queries/second</text>
<text class="ax yl" x="85.3" y="419.9">0</text>
<text class="ax yl" x="85.3" y="352.3">0.5</text>
<text class="ax yl" x="85.3" y="284.7">1</text>
<text class="ax yl" x="85.3" y="217.1">1.5</text>
<text class="ax yl" x="85.3" y="149.5">2</text>
<text class="ax yl" x="85.3" y="81.9">2.5</text>
<text class="ax xl" x="218.7" y="462.1" textLength="46" lengthAdjust="spacingAndGlyphs">9pm</text>
<text class="ax xl" x="325.7" y="462.1" textLength="55" lengthAdjust="spacingAndGlyphs">12am</text>
<text class="ax xl" x="433.7" y="462.1" textLength="45" lengthAdjust="spacingAndGlyphs">3am</text>
<text class="ax xl" x="540.7" y="462.1" textLength="46" lengthAdjust="spacingAndGlyphs">6am</text>
<text class="ax xl" x="648.7" y="462.1" textLength="46" lengthAdjust="spacingAndGlyphs">9am</text>
<text class="ax xl" x="755.7" y="462.1" textLength="57" lengthAdjust="spacingAndGlyphs">12pm</text>
<text class="ax xl" x="863.7" y="462.1" textLength="46" lengthAdjust="spacingAndGlyphs">3pm</text>
<text class="ax xl" x="970.7" y="462.1" textLength="47" lengthAdjust="spacingAndGlyphs">6pm</text>
<text class="ax xl" x="218.7" y="498.6" textLength="84" lengthAdjust="spacingAndGlyphs">11/11/23</text>
<text class="ax xl" x="325.7" y="498.6" textLength="52.5" lengthAdjust="spacingAndGlyphs">11/12</text>
</svg></div>
<div class="panel" style="left:1084px;top:198px"><svg width="1026" height="512" viewBox="0 0 1026 512">
<path class="g" d="M229.5 34.4V432.5M335.5 34.4V432.5M441.5 34.4V432.5M547.5 34.4V432.5M653.5 34.4V432.5M759.5 34.4V432.5M865.5 34.4V432.5M971.5 34.4V432.5M108.5 412.5H976.5M108.5 306.5H976.5M108.5 199.5H976.5M108.5 93.5H976.5"/>
<path class="f" d="M128.4 412.5L128.4 385.3L129 364.4L129.6 385.2L130.2 407.1L130.8 409.9L131.3 410L131.9 403.2L132.5 388.8L133.1 403.7L133.7 411.1L134.3 410.2L134.9 410.2L135.5 410.5L136.1 411.5L136.6 411.2L137.2 409.9L137.8 411.1L138.4 410.6L139 411.2L139.6 410.4L140.2 410L140.8 410.9L141.4 411.3L141.9 411L142.5 411.5L143.1 411L143.7 410.2L144.3 411L144.9 410.3L145.5 406.4L146.1 406.5L146.7 410.9L147.2 409.9L147.8 409.9L148.4 410.3L149 409.9L149.6 410.9L150.2 410.2L150.8 410.3L151.4 406L152 411.4L152.5 410.5L153.1 411L153.7 410.6L154.3 411L154.9 411.4L155.5 410.4L156.1 407.1L156.7 410.6L157.3 411.1L157.9 388.7L158.4 400.8L159 388L159.6 403.6L160.2 388.5L160.8 407.6L161.4 389.8L162 405L162.6 387.7L163.2 400.2L163.7 389.8L164.3 410.7L164.9 410.7L165.5 410.9L166.1 410.9L166.7 409.9L167.3 410.7L167.9 411.4L168.5 410.2L169 410.9L169.6 410.2L170.2 410.4L170.8 410.9L171.4 402.6L172 386.5L172.6 402.5L173.2 410.4L173.8 411.5L174.3 404.4L174.9 391.8L175.5 404L176.1 411L176.7 410.3L177.3 410.9L177.9 410.1L178.5 409.9L179.1 410.7L179.6 411.3L180.2 409.9L180.8 410.4L181.4 410.3L182 410.2L182.6 410.4L183.2 410.5L183.8 388.9L184.4 410.3L184.9 389.7L185.5 406.3L186.1 407.9L186.7 411.2L187.3 411.3L187.9 411.2L188.5 411.5L189.1 403.6L189.7 389.6L190.2 401.4L190.8 411.1L191.4 411.3L192 402.7L192.6 392.8L193.2 404.7L193.8 409.9L194.4 410.8L195 404.3L195.5 388.3L196.1 371.6L196.7 387.7L197.3 404.7L197.9 411.5L198.5 410.6L199.1 411.3L199.7 410L200.3 410.8L200.8 390.4L201.4 393L202 382.7L202.6 393.2L203.2 390L203.8 401.6L204.4 389.8L205 406.7L205.6 390L206.2 406.2L206.7 389.8L207.3 411L207.9 410.2L208.5 411.1L209.1 409.9L209.7 410.5L210.3 410.4L210.9 410.3L211.5 410.3L212 410.6L212.6 411L213.2 410.8L213.8 410.3L214.4 411.5L215 404.2L215.6 391.8L216.2 404.7L216.8 410.8L217.3 410.3L217.9 410.7L218.5 410.9L219.1 404.1L219.7 392.8L220.3 405L220.9 410.4L221.5 411.1L222.1 410L222.6 410.7L223.2 410.7L223.8 411.3L224.4 410.2L225 411.2L225.6 410.2L226.2 409.6L226.8 406.1L227.4 406.4L227.9 411.2L228.5 409.9L229.1 411.3L229.7 410L230.3 410.5L230.9 411.3L231.5 411.5L232.1 410.9L232.7 411.4L233.2 410.3L233.8 411.3L234.4 411L235 410.7L235.6 410.9L236.2 410.4L236.8 410.5L237.4 409.2L238 408.5L238.5 407.8L239.1 406.1L239.7 405.3L240.3 403.8L240.9 404L241.5 404.5L242.1 404.2L242.7 403.8L243.3 403L243.8 399.3L244.4 390.7L245 403.6L245.6 410.4L246.2 411.3L246.8 411.1L247.4 410.7L248 406.8L248.6 404.1L249.1 390.2L249.7 403.9L250.3 409.9L250.9 410.1L251.5 410.5L252.1 403.4L252.7 388.8L253.3 403.3L253.9 410.1L254.5 410.2L255 410.1L255.6 410.5L256.2 410.3L256.8 409.7L257.4 393.5L258 403.9L258.6 393.3L259.2 402.7L259.8 410.8L260.3 411.4L260.9 411.3L261.5 409.6L262.1 407.2L262.7 409.7L263.3 411.1L263.9 406.7L264.5 402.8L265.1 387.5L265.6 402.7L266.2 411.3L266.8 411L267.4 410.3L268 409.4L268.6 411.4L269.2 409.9L269.8 411L270.4 411.1L270.9 410.3L271.5 411.1L272.1 389.7L272.7 408.4L273.3 391.3L273.9 403.8L274.5 391.5L275.1 408L275.7 390.2L276.2 406.6L276.8 410.7L277.4 411.5L278 411.5L278.6 411.4L279.2 410.9L279.8 407.3L280.4 411.2L281 390.3L281.5 404.3L282.1 390L282.7 405.1L283.3 389.1L283.9 408.7L284.5 410.7L285.1 410.9L285.7 410.3L286.3 411L286.8 410.1L287.4 411.3L288 411.4L288.6 410.1L289.2 411.3L289.8 411.1L290.4 410.8L291 411.1L291.6 408.7L292.1 411.1L292.7 411.4L293.3 411L293.9 410.6L294.5 401.9L295.1 386.7L295.7 401.4L296.3 407.9L296.9 407.6L297.4 406.5L298 406.3L298.6 399.9L299.2 388.8L299.8 399.2L300.4 405.3L301 405.6L301.6 405.6L302.2 397.3L302.7 381.8L303.3 396.6L303.9 405L304.5 405.3L305.1 404L305.7 397.9L306.3 385.9L306.9 398.4L307.5 404.8L308.1 404.3L308.6 396.9L309.2 384.6L309.8 397.1L310.4 404.2L311 403.8L311.6 403.8L312.2 403.8L312.8 404.3L313.4 403.2L313.9 395.2L314.5 380.8L315.1 395.9L315.7 403L316.3 403.5L316.9 402.6L317.5 402.9L318.1 402L318.7 402.2L319.2 403.3L319.8 402.8L320.4 401.7L321 402.4L321.6 402.4L322.2 402.3L322.8 401.7L323.4 401.3L324 401.9L324.5 401.1L325.1 401.7L325.7 402.4L326.3 401.2L326.9 401.7L327.5 402.3L328.1 400.6L328.7 402.2L329.3 393.8L329.8 379.7L330.4 393.3L331 401.3L331.6 401.5L332.2 401.3L332.8 401.3L333.4 400.7L334 400.5L334.6 389.2L335.1 378.7L335.7 389.5L336.3 400.4L336.9 399.5L337.5 399.6L338.1 399.6L338.7 399.9L339.3 400.2L339.9 400.5L340.4 399.3L341 399.8L341.6 400.5L342.2 400.2L342.8 400.2L343.4 399.1L344 398.7L344.6 399.8L345.2 398.7L345.7 399.5L346.3 398.8L346.9 398.4L347.5 398.7L348.1 398.3L348.7 399L349.3 399.5L349.9 398.6L350.5 398.4L351 399L351.6 398.6L352.2 398.6L352.8 399L353.4 398.5L354 398.3L354.6 398L355.2 397.6L355.8 398L356.4 397L356.9 397.2L357.5 396.9L358.1 397.2L358.7 397.2L359.3 397.3L359.9 396.8L360.5 397.5L361.1 397L361.7 396.8L362.2 397L362.8 397.3L363.4 391.3L364 379.5L364.6 390.9L365.2 396.5L365.8 396.1L366.4 388.4L367 373.8L367.5 388.1L368.1 396.6L368.7 395.8L369.3 396.8L369.9 395.6L370.5 388.1L371.1 373.8L371.7 387.7L372.3 395.4L372.8 395L373.4 395.1L374 395.3L374.6 395.9L375.2 395.3L375.8 394.6L376.4 395.6L377 394.3L377.6 387.2L378.1 372.6L378.7 387.7L379.3 395L379.9 395.2L380.5 394.4L381.1 393.9L381.7 387.6L382.3 375.8L382.9 388.1L383.4 394.9L384 393.8L384.6 394L385.2 393.6L385.8 394.1L386.4 393.2L387 387.7L387.6 375.3L388.2 381.1L388.7 368.9L389.3 384.5L389.9 394L390.5 393.1L391.1 392.8L391.7 386.1L392.3 371.7L392.9 385.6L393.5 392.4L394 392.2L394.6 383.8L395.2 367.5L395.8 384L396.4 392.5L397 391.8L397.6 392.7L398.2 392.7L398.8 392.1L399.3 391.4L399.9 392.6L400.5 392.8L401.1 392.6L401.7 391.8L402.3 391.6L402.9 392.2L403.5 390.3L404.1 386.7L404.7 389.7L405.2 391.1L405.8 390.9L406.4 392L407 391.2L407.6 390.5L408.2 390.2L408.8 391.2L409.4 390.3L410 390.5L410.5 390L411.1 391.1L411.7 390.2L412.3 389.9L412.9 390.4L413.5 391L414.1 390.8L414.7 390.8L415.3 390.8L415.8 390.6L416.4 389.7L417 390.5L417.6 389.4L418.2 392.3L418.8 398.1L419.4 404L420 410L420.6 409.9L421.1 409.9L421.7 411.4L422.3 411.2L422.9 410.8L423.5 410.3L424.1 410.9L424.7 410.9L425.3 410.5L425.9 410.4L426.4 409.9L427 411.4L427.6 410.3L428.2 411.3L428.8 410.9L429.4 410L430 411L430.6 410.4L431.2 410.6L431.7 411L432.3 404.5L432.9 392.8L433.5 404.3L434.1 411.1L434.7 410.7L435.3 410.6L435.9 410L436.5 410.9L437 411.5L437.6 409.1L438.2 410.8L438.8 410.7L439.4 411.2L440 410.8L440.6 411.4L441.2 404.2L441.8 393.4L442.3 404.8L442.9 410.8L443.5 410L444.1 403.6L444.7 392.8L445.3 404.1L445.9 410L446.5 409.8L447.1 410L447.6 410.2L448.2 409.9L448.8 411.2L449.4 404.8L450 392.8L450.6 404.9L451.2 410.8L451.8 410.9L452.4 410L453 411.5L453.5 409.9L454.1 411.3L454.7 390.7L455.3 406.8L455.9 390.3L456.5 401.6L457.1 391.5L457.7 410.7L458.3 410.3L458.8 411.4L459.4 410.9L460 410.7L460.6 409.9L461.2 403.5L461.8 390.2L462.4 404L463 406.8L463.6 410.8L464.1 410.5L464.7 411.4L465.3 411.5L465.9 408.9L466.5 410.8L467.1 402.7L467.7 388.8L468.3 402.7L468.9 409.9L469.4 411.3L470 411.4L470.6 410.3L471.2 410.9L471.8 411L472.4 410.1L473 404.7L473.6 392.8L474.2 404.6L474.7 411.4L475.3 411.3L475.9 411.1L476.5 410.2L477.1 411.1L477.7 410.5L478.3 410.5L478.9 411.1L479.5 410.8L480 411.2L480.6 411.5L481.2 409.4L481.8 410.1L482.4 407.1L483 411.3L483.6 410.5L484.2 411.2L484.8 411.4L485.3 410.4L485.9 411.4L486.5 410.4L487.1 410.3L487.7 403.3L488.3 389.6L488.9 403.7L489.5 411.5L490.1 410.7L490.6 410.8L491.2 411.2L491.8 409.9L492.4 403.6L493 388.8L493.6 403L494.2 411.2L494.8 410.7L495.4 410.8L495.9 402.4L496.5 388.1L497.1 402.8L497.7 410.6L498.3 410.8L498.9 409.8L499.5 410.5L500.1 409.6L500.7 408.2L501.2 400.8L501.8 385.9L502.4 399.7L503 406L503.6 406.9L504.2 397.5L504.8 382.4L505.4 398L506 405.2L506.6 404.7L507.1 405L507.7 385.1L508.3 397.7L508.9 385.5L509.5 379.7L510.1 355.9L510.7 379.9L511.3 386.2L511.9 398.4L512.4 384.5L513 399.9L513.6 383.9L514.2 403.8L514.8 402.9L515.4 404.2L516 403.7L516.6 403.9L517.2 394.8L517.7 380.1L518.3 394.7L518.9 403.1L519.5 396.1L520.1 381.7L520.7 395.9L521.3 403.6L521.9 402.7L522.5 381.1L523 395.5L523.6 383.7L524.2 380.9L524.8 361.2L525.4 381.4L526 381.1L526.6 400L527.2 381.8L527.8 393.3L528.3 402.8L528.9 401.2L529.5 401.9L530.1 402L530.7 402.2L531.3 401.7L531.9 400.9L532.5 401.8L533.1 395.6L533.6 383.3L534.2 394.7L534.8 401.6L535.4 393.1L536 378L536.6 393.4L537.2 400.6L537.8 401L538.4 401.6L538.9 400.9L539.5 377.3L540.1 355.3L540.7 377.3L541.3 377.8L541.9 357.2L542.5 378.5L543.1 400.1L543.7 400L544.2 400.8L544.8 400.7L545.4 404.5L546 409.1L546.6 390L547.2 404.7L547.8 391.3L548.4 405.6L549 390.8L549.5 405.6L550.1 391.6L550.7 411.4L551.3 411.1L551.9 411.5L552.5 411.3L553.1 411L553.7 410.5L554.3 410.1L554.9 411.1L555.4 410.1L556 410.8L556.6 403.1L557.2 390.2L557.8 400.7L558.4 411L559 410.4L559.6 410.1L560.2 411L560.7 410.7L561.3 410.5L561.9 411.3L562.5 411.5L563.1 410.2L563.7 411.5L564.3 410.7L564.9 411.2L565.5 410.1L566 410.1L566.6 410.9L567.2 411.2L567.8 411.5L568.4 405.9L569 399.4L569.6 392.8L570.2 399.5L570.8 405.7L571.3 410.4L571.9 411.1L572.5 411.3L573.1 411.5L573.7 411.4L574.3 410.8L574.9 410.7L575.5 411.5L576.1 410.2L576.6 410.1L577.2 410.3L577.8 406.6L578.4 409.9L579 411.4L579.6 411.4L580.2 411.4L580.8 411.5L581.4 411L581.9 410.1L582.5 388.6L583.1 368.1L583.7 389.1L584.3 407.6L584.9 410.2L585.5 410.1L586.1 402.6L586.7 388.1L587.2 403L587.8 410.4L588.4 401.9L589 385.9L589.6 402.4L590.2 410.2L590.8 410.6L591.4 410.9L592 410.5L592.5 403.7L593.1 389.4L593.7 403.4L594.3 411.5L594.9 409.2L595.5 386.9L596.1 369.2L596.7 386.5L597.3 403.6L597.8 404.4L598.4 397.2L599 383.8L599.6 396.4L600.2 403.5L600.8 395.6L601.4 381.9L602 395.4L602.6 403.1L603.2 403.1L603.7 403.7L604.3 402.4L604.9 381.3L605.5 360.1L606.1 381.4L606.7 402.5L607.3 395L607.9 381.1L608.5 395.3L609 403.2L609.6 402.4L610.2 402.5L610.8 403.3L611.4 402.1L612 402.6L612.6 402.7L613.2 401.8L613.8 401.9L614.3 402.6L614.9 401.2L615.5 380.7L616.1 359.4L616.7 380.7L617.3 401.1L617.9 401.3L618.5 401.7L619.1 402.7L619.6 401.9L620.2 401.9L620.8 401.9L621.4 402.3L622 402.1L622.6 393.6L623.2 378.2L623.8 393.3L624.4 402L624.9 401.8L625.5 402.1L626.1 393.6L626.7 378.2L627.3 393.5L627.9 401.9L628.5 401.5L629.1 400.4L629.7 401.8L630.2 401.3L630.8 401.5L631.4 400.6L632 393.1L632.6 378.2L633.2 392.6L633.8 401.1L634.4 400.4L635 400.8L635.5 400L636.1 393.3L636.7 378.2L637.3 393L637.9 400.8L638.5 399.9L639.1 400.3L639.7 401.9L640.3 404.6L640.8 406.9L641.4 410.3L642 410.4L642.6 410L643.2 387.3L643.8 364.1L644.4 387.1L645 409.7L645.6 410.8L646.1 403.7L646.7 388.8L647.3 403.6L647.9 410.5L648.5 407.9L649.1 411.3L649.7 410.4L650.3 409.1L650.9 407.2L651.4 409.8L652 411L652.6 411.4L653.2 410.9L653.8 409.9L654.4 410.9L655 409L655.6 387.9L656.2 366.3L656.8 388.3L657.3 409.2L657.9 411.1L658.5 410.8L659.1 403.7L659.7 390.2L660.3 403.4L660.9 410.7L661.5 410.7L662.1 410.2L662.6 411L663.2 411.3L663.8 411.5L664.4 411.1L665 411.5L665.6 409.9L666.2 411.2L666.8 411.5L667.4 411.2L667.9 411L668.5 411.4L669.1 409.9L669.7 392.4L670.3 407.2L670.9 390.3L671.5 411.2L672.1 410.3L672.7 411.5L673.2 410.1L673.8 410.3L674.4 410L675 410.9L675.6 409.2L676.2 410.8L676.8 411.4L677.4 410.9L678 410.7L678.5 402.6L679.1 388.1L679.7 403.1L680.3 410.1L680.9 411L681.5 411.5L682.1 409.1L682.7 411.2L683.3 410.4L683.8 411.1L684.4 411.2L685 411.3L685.6 410.3L686.2 410.7L686.8 410.5L687.4 411.4L688 410.8L688.6 403.3L689.1 388.1L689.7 402.8L690.3 411L690.9 410.5L691.5 411L692.1 410.7L692.7 410.4L693.3 410.8L693.9 411.2L694.4 407.3L695 409.1L695.6 411.3L696.2 410L696.8 410.9L697.4 408.7L698 411.1L698.6 410.8L699.2 410.7L699.7 411.3L700.3 410.3L700.9 410.6L701.5 409.9L702.1 391.1L702.7 403.3L703.3 391.7L703.9 403.9L704.5 410.4L705.1 410.3L705.6 410.3L706.2 410.5L706.8 411.4L707.4 411.2L708 410.7L708.6 410.2L709.2 409.9L709.8 410.6L710.4 411L710.9 409.9L711.5 410.2L712.1 410.6L712.7 410.1L713.3 410.7L713.9 410.4L714.5 402.1L715.1 386.7L715.7 402L716.2 410.3L716.8 410.2L717.4 410.4L718 410.1L718.6 409.9L719.2 410.7L719.8 406.5L720.4 411L721 411.5L721.5 410L722.1 411L722.7 411.1L723.3 410.6L723.9 403.6L724.5 390.2L725.1 404.2L725.7 411.3L726.3 410.2L726.8 410.9L727.4 411L728 410.7L728.6 410.7L729.2 411.3L729.8 407.4L730.4 399.7L731 392.8L731.6 398L732.1 405.5L732.7 409.9L733.3 410.3L733.9 411.5L734.5 410.8L735.1 410L735.7 409.9L736.3 411L736.9 410.8L737.4 410.8L738 409.9L738.6 411L739.2 411.1L739.8 411.4L740.4 409.8L741 410.7L741.6 410.4L742.2 410.9L742.7 411.5L743.3 407.6L743.9 411L744.5 411L745.1 410.9L745.7 401.6L746.3 392.8L746.9 401.5L747.5 406.2L748 410L748.6 411.5L749.2 410.1L749.8 411.2L750.4 411.4L751 410.2L751.6 408.2L752.2 409.9L752.8 411.3L753.4 410.1L753.9 410L754.5 409.9L755.1 410L755.7 410L756.3 410.1L756.9 407.7L757.5 408L758.1 411L758.7 411.2L759.2 410.9L759.8 410.8L760.4 409.7L761 406.1L761.6 410.3L762.2 410.3L762.8 410.5L763.4 410.3L764 411.2L764.5 407.3L765.1 409.9L765.7 410.8L766.3 410.2L766.9 411.3L767.5 407.4L768.1 411.2L768.7 410.9L769.3 411L769.8 410.7L770.4 410.4L771 409.9L771.6 410.2L772.2 410.5L772.8 410.2L773.4 411.2L774 408L774.6 409.3L775.1 408.3L775.7 410.9L776.3 410.4L776.9 410.4L777.5 409.9L778.1 410.6L778.7 411.1L779.3 410.5L779.9 411.3L780.4 411.1L781 410.3L781.6 411.1L782.2 409.9L782.8 410.7L783.4 410.4L784 411.4L784.6 409.5L785.2 407.3L785.7 405.6L786.3 407.6L786.9 409.6L787.5 410.3L788.1 411.3L788.7 409.5L789.3 407.2L789.9 409.4L790.5 411.3L791 410.9L791.6 410L792.2 407.1L792.8 404L793.4 407.5L794 410.2L794.6 411.5L795.2 410.2L795.8 409.9L796.3 410.3L796.9 410.6L797.5 411.2L798.1 410.5L798.7 410.5L799.3 410.4L799.9 365.9L800.5 246.3L801.1 127.1L801.7 246.5L802.2 365.5L802.8 410.2L803.4 410.9L804 402.9L804.6 388.6L805.2 402.7L805.8 411.2L806.4 410.6L807 411L807.5 410.5L808.1 411L808.7 411.3L809.3 411.4L809.9 363.5L810.5 236.2L811.1 110.1L811.7 236.7L812.3 362.3L812.8 389.1L813.4 403L814 410.3L814.6 410.5L815.2 410.5L815.8 410.5L816.4 411.2L817 409.2L817.6 411.1L818.1 411.4L818.7 410.4L819.3 410.6L819.9 410.2L820.5 404.1L821.1 392L821.7 404.7L822.3 406.2L822.9 410.5L823.4 410L824 410.6L824.6 409.3L825.2 409.3L825.8 403.1L826.4 394.3L827 385.9L827.6 394L828.2 402.1L828.7 406.2L829.3 405.9L829.9 406.9L830.5 406.5L831.1 404.8L831.7 404.6L832.3 403.6L832.9 402.4L833.5 402.3L834 401.5L834.6 408.4L835.2 411.2L835.8 410.8L836.4 411.3L837 411.1L837.6 411.4L838.2 409.9L838.8 410.1L839.3 410.4L839.9 410.8L840.5 411.1L841.1 411.3L841.7 410.7L842.3 411.1L842.9 411.3L843.5 411.4L844.1 411.1L844.6 411.1L845.2 409.9L845.8 411.2L846.4 410.7L847 410.8L847.6 411.1L848.2 410.9L848.8 410.3L849.4 411.5L849.9 410.8L850.5 408L851.1 410L851.7 410.4L852.3 410.5L852.9 410.2L853.5 410.7L854.1 410.6L854.7 411L855.3 410.7L855.8 409.8L856.4 408.6L857 411L857.6 410.6L858.2 411L858.8 404.9L859.4 398.5L860 392.8L860.6 398.9L861.1 404.4L861.7 410L862.3 411.1L862.9 410.9L863.5 410L864.1 410.2L864.7 411.4L865.3 410.6L865.9 411.1L866.4 410.9L867 410.8L867.6 410.5L868.2 411L868.8 411.3L869.4 411.4L870 410.1L870.6 410.5L871.2 410.6L871.7 411.2L872.3 410.7L872.9 410.8L873.5 410.5L874.1 411.1L874.7 410.6L875.3 410.7L875.9 410.5L876.5 410.9L877 410.6L877.6 411.1L878.2 410L878.8 410.4L879.4 410.7L880 411.1L880.6 408.4L881.2 410.3L881.8 411.2L882.3 409.9L882.9 406.9L883.5 398.3L884.1 390.2L884.7 382.2L885.3 373.7L885.9 382.2L886.5 390.1L887.1 398.9L887.6 404.8L888.2 407.3L888.8 406.3L889.4 405.6L890 405.1L890.6 404.4L891.2 405.1L891.8 405.7L892.4 405.4L892.9 404L893.5 404.3L894.1 403.8L894.7 405L895.3 404.9L895.9 403.9L896.5 333.1L897.1 202.9L897.7 72.9L898.2 202.3L898.8 330.5L899.4 399.4L900 398.4L900.6 396.8L901.2 395.4L901.8 393.8L902.4 392.4L903 390.4L903.6 376.7L904.1 355.6L904.7 375.4L905.3 383.2L905.9 381.2L906.5 370.8L907.1 355.1L907.7 364.2L908.3 347.1L908.9 327.5L909.4 342.8L910 354L910.6 351.3L911.2 352.1L911.8 353.7L912.4 347.1L913 336.5L913.6 348.7L914.2 357.8L914.7 346.6L915.3 335.4L915.9 341.8L916.5 345.2L917.1 338.1L917.7 349L918.3 357.7L918.9 354.8L919.5 344.5L920 365.5L920.6 389.8L921.2 400.7L921.8 400.3L922.4 399.5L923 400L923.6 400.7L924.2 400L924.8 400.1L925.3 400.6L925.9 400L926.5 400.5L927.1 399.9L927.7 386.6L928.3 319.2L928.9 252.5L929.5 319.7L930.1 386.7L930.6 401L931.2 399.7L931.8 399.5L932.4 400.5L933 396.2L933.6 387.5L934.2 379.5L934.8 387.9L935.4 396.1L935.9 400.3L936.5 401L937.1 400.8L937.7 400.5L938.3 403.3L938.9 406.1L939.5 408.1L940.1 411L940.7 409.9L941.2 411.1L941.8 411L942.4 410.8L943 410.3L943.6 410.3L944.2 411.3L944.8 408L945.4 403.4L946 388.8L946.5 402.2L947.1 410.3L947.7 410.4L948.3 410.9L948.9 411.5L949.5 389.8L950.1 404.8L950.7 389.5L951.3 410.3L951.9 410.1L952.4 411.3L953 410.2L953.6 410.9L954.2 411L954.8 409.9L955.4 409.9L956 409.8L956.6 411.2L957.2 411.3L957.7 410.6L958.3 410.7L958.9 402.6L959.5 388.8L960.1 403L960.7 409.9L961.3 402.3L961.9 386.7L962.5 402.6L963 407.5L963.6 409.9L964.2 410.7L964.8 410.5L965.4 410.7L966 389.2L966.6 402L967.2 387.1L967.8 373.7L968.3 388.8L968.9 402L969.5 388.3L970.1 407.9L970.7 389L971.3 410.9L971.9 386.6L972.5 409.7L973.1 411.5L973.6 410.9L974.2 411.4L974.8 410.4L975.4 410.4L976 410.5L976 412.5Z"/>
<path class="s" d="M128.4 385.3L129 364.4L129.6 385.2L130.2 407.1L130.8 409.9L131.3 410L131.9 403.2L132.5 388.8L133.1 403.7L133.7 411.1L134.3 410.2L134.9 410.2L135.5 410.5L136.1 411.5L136.6 411.2L137.2 409.9L137.8 411.1L138.4 410.6L139 411.2L139.6 410.4L140.2 410L140.8 410.9L141.4 411.3L141.9 411L142.5 411.5L143.1 411L143.7 410.2L144.3 411L144.9 410.3L145.5 406.4L146.1 406.5L146.7 410.9L147.2 409.9L147.8 409.9L148.4 410.3L149 409.9L149.6 410.9L150.2 410.2L150.8 410.3L151.4 406L152 411.4L152.5 410.5L153.1 411L153.7 410.6L154.3 411L154.9 411.4L155.5 410.4L156.1 407.1L156.7 410.6L157.3 411.1L157.9 388.7L158.4 400.8L159 388L159.6 403.6L160.2 388.5L160.8 407.6L161.4 389.8L162 405L162.6 387.7L163.2 400.2L163.7 389.8L164.3 410.7L164.9 410.7L165.5 410.9L166.1 410.9L166.7 409.9L167.3 410.7L167.9 411.4L168.5 410.2L169 410.9L169.6 410.2L170.2 410.4L170.8 410.9L171.4 402.6L172 386.5L172.6 402.5L173.2 410.4L173.8 411.5L174.3 404.4L174.9 391.8L175.5 404L176.1 411L176.7 410.3L177.3 410.9L177.9 410.1L178.5 409.9L179.1 410.7L179.6 411.3L180.2 409.9L180.8 410.4L181.4 410.3L182 410.2L182.6 410.4L183.2 410.5L183.8 388.9L184.4 410.3L184.9 389.7L185.5 406.3L186.1 407.9L186.7 411.2L187.3 411.3L187.9 411.2L188.5 411.5L189.1 403.6L189.7 389.6L190.2 401.4L190.8 411.1L191.4 411.3L192 402.7L192.6 392.8L193.2 404.7L193.8 409.9L194.4 410.8L195 404.3L195.5 388.3L196.1 371.6L196.7 387.7L197.3 404.7L197.9 411.5L198.5 410.6L199.1 411.3L199.7 410L200.3 410.8L200.8 390.4L201.4 393L202 382.7L202.6 393.2L203.2 390L203.8 401.6L204.4 389.8L205 406.7L205.6 390L206.2 406.2L206.7 389.8L207.3 411L207.9 410.2L208.5 411.1L209.1 409.9L209.7 410.5L210.3 410.4L210.9 410.3L211.5 410.3L212 410.6L212.6 411L213.2 410.8L213.8 410.3L214.4 411.5L215 404.2L215.6 391.8L216.2 404.7L216.8 410.8L217.3 410.3L217.9 410.7L218.5 410.9L219.1 404.1L219.7 392.8L220.3 405L220.9 410.4L221.5 411.1L222.1 410L222.6 410.7L223.2 410.7L223.8 411.3L224.4 410.2L225 411.2L225.6 410.2L226.2 409.6L226.8 406.1L227.4 406.4L227.9 411.2L228.5 409.9L229.1 411.3L229.7 410L230.3 410.5L230.9 411.3L231.5 411.5L232.1 410.9L232.7 411.4L233.2 410.3L233.8 411.3L234.4 411L235 410.7L235.6 410.9L236.2 410.4L236.8 410.5L237.4 409.2L238 408.5L238.5 407.8L239.1 406.1L239.7 405.3L240.3 403.8L240.9 404L241.5 404.5L242.1 404.2L242.7 403.8L243.3 403L243.8 399.3L244.4 390.7L245 403.6L245.6 410.4L246.2 411.3L246.8 411.1L247.4 410.7L248 406.8L248.6 404.1L249.1 390.2L249.7 403.9L250.3 409.9L250.9 410.1L251.5 410.5L252.1 403.4L252.7 388.8L253.3 403.3L253.9 410.1L254.5 410.2L255 410.1L255.6 410.5L256.2 410.3L256.8 409.7L257.4 393.5L258 403.9L258.6 393.3L259.2 402.7L259.8 410.8L260.3 411.4L260.9 411.3L261.5 409.6L262.1 407.2L262.7 409.7L263.3 411.1L263.9 406.7L264.5 402.8L265.1 387.5L265.6 402.7L266.2 411.3L266.8 411L267.4 410.3L268 409.4L268.6 411.4L269.2 409.9L269.8 411L270.4 411.1L270.9 410.3L271.5 411.1L272.1 389.7L272.7 408.4L273.3 391.3L273.9 403.8L274.5 391.5L275.1 408L275.7 390.2L276.2 406.6L276.8 410.7L277.4 411.5L278 411.5L278.6 411.4L279.2 410.9L279.8 407.3L280.4 411.2L281 390.3L281.5 404.3L282.1 390L282.7 405.1L283.3 389.1L283.9 408.7L284.5 410.7L285.1 410.9L285.7 410.3L286.3 411L286.8 410.1L287.4 411.3L288 411.4L288.6 410.1L289.2 411.3L289.8 411.1L290.4 410.8L291 411.1L291.6 408.7L292.1 411.1L292.7 411.4L293.3 411L293.9 410.6L294.5 401.9L295.1 386.7L295.7 401.4L296.3 407.9L296.9 407.6L297.4 406.5L298 406.3L298.6 399.9L299.2 388.8L299.8 399.2L300.4 405.3L301 405.6L301.6 405.6L302.2 397.3L302.7 381.8L303.3 396.6L303.9 405L304.5 405.3L305.1 404L305.7 397.9L306.3 385.9L306.9 398.4L307.5 404.8L308.1 404.3L308.6 396.9L309.2 384.6L309.8 397.1L310.4 404.2L311 403.8L311.6 403.8L312.2 403.8L312.8 404.3L313.4 403.2L313.9 395.2L314.5 380.8L315.1 395.9L315.7 403L316.3 403.5L316.9 402.6L317.5 402.9L318.1 402L318.7 402.2L319.2 403.3L319.8 402.8L320.4 401.7L321 402.4L321.6 402.4L322.2 402.3L322.8 401.7L323.4 401.3L324 401.9L324.5 401.1L325.1 401.7L325.7 402.4L326.3 401.2L326.9 401.7L327.5 402.3L328.1 400.6L328.7 402.2L329.3 393.8L329.8 379.7L330.4 393.3L331 401.3L331.6 401.5L332.2 401.3L332.8 401.3L333.4 400.7L334 400.5L334.6 389.2L335.1 378.7L335.7 389.5L336.3 400.4L336.9 399.5L337.5 399.6L338.1 399.6L338.7 399.9L339.3 400.2L339.9 400.5L340.4 399.3L341 399.8L341.6 400.5L342.2 400.2L342.8 400.2L343.4 399.1L344 398.7L344.6 399.8L345.2 398.7L345.7 399.5L346.3 398.8L346.9 398.4L347.5 398.7L348.1 398.3L348.7 399L349.3 399.5L349.9 398.6L350.5 398.4L351 399L351.6 398.6L352.2 398.6L352.8 399L353.4 398.5L354 398.3L354.6 398L355.2 397.6L355.8 398L356.4 397L356.9 397.2L357.5 396.9L358.1 397.2L358.7 397.2L359.3 397.3L359.9 396.8L360.5 397.5L361.1 397L361.7 396.8L362.2 397L362.8 397.3L363.4 391.3L364 379.5L364.6 390.9L365.2 396.5L365.8 396.1L366.4 388.4L367 373.8L367.5 388.1L368.1 396.6L368.7 395.8L369.3 396.8L369.9 395.6L370.5 388.1L371.1 373.8L371.7 387.7L372.3 395.4L372.8 395L373.4 395.1L374 395.3L374.6 395.9L375.2 395.3L375.8 394.6L376.4 395.6L377 394.3L377.6 387.2L378.1 372.6L378.7 387.7L379.3 395L379.9 395.2L380.5 394.4L381.1 393.9L381.7 387.6L382.3 375.8L382.9 388.1L383.4 394.9L384 393.8L384.6 394L385.2 393.6L385.8 394.1L386.4 393.2L387 387.7L387.6 375.3L388.2 381.1L388.7 368.9L389.3 384.5L389.9 394L390.5 393.1L391.1 392.8L391.7 386.1L392.3 371.7L392.9 385.6L393.5 392.4L394 392.2L394.6 383.8L395.2 367.5L395.8 384L396.4 392.5L397 391.8L397.6 392.7L398.2 392.7L398.8 392.1L399.3 391.4L399.9 392.6L400.5 392.8L401.1 392.6L401.7 391.8L402.3 391.6L402.9 392.2L403.5 390.3L404.1 386.7L404.7 389.7L405.2 391.1L405.8 390.9L406.4 392L407 391.2L407.6 390.5L408.2 390.2L408.8 391.2L409.4 390.3L410 390.5L410.5 390L411.1 391.1L411.7 390.2L412.3 389.9L412.9 390.4L413.5 391L414.1 390.8L414.7 390.8L415.3 390.8L415.8 390.6L416.4 389.7L417 390.5L417.6 389.4L418.2 392.3L418.8 398.1L419.4 404L420 410L420.6 409.9L421.1 409.9L421.7 411.4L422.3 411.2L422.9 410.8L423.5 410.3L424.1 410.9L424.7 410.9L425.3 410.5L425.9 410.4L426.4 409.9L427 411.4L427.6 410.3L428.2 411.3L428.8 410.9L429.4 410L430 411L430.6 410.4L431.2 410.6L431.7 411L432.3 404.5L432.9 392.8L433.5 404.3L434.1 411.1L434.7 410.7L435.3 410.6L435.9 410L436.5 410.9L437 411.5L437.6 409.1L438.2 410.8L438.8 410.7L439.4 411.2L440 410.8L440.6 411.4L441.2 404.2L441.8 393.4L442.3 404.8L442.9 410.8L443.5 410L444.1 403.6L444.7 392.8L445.3 404.1L445.9 410L446.5 409.8L447.1 410L447.6 410.2L448.2 409.9L448.8 411.2L449.4 404.8L450 392.8L450.6 404.9L451.2 410.8L451.8 410.9L452.4 410L453 411.5L453.5 409.9L454.1 411.3L454.7 390.7L455.3 406.8L455.9 390.3L456.5 401.6L457.1 391.5L457.7 410.7L458.3 410.3L458.8 411.4L459.4 410.9L460 410.7L460.6 409.9L461.2 403.5L461.8 390.2L462.4 404L463 406.8L463.6 410.8L464.1 410.5L464.7 411.4L465.3 411.5L465.9 408.9L466.5 410.8L467.1 402.7L467.7 388.8L468.3 402.7L468.9 409.9L469.4 411.3L470 411.4L470.6 410.3L471.2 410.9L471.8 411L472.4 410.1L473 404.7L473.6 392.8L474.2 404.6L474.7 411.4L475.3 411.3L475.9 411.1L476.5 410.2L477.1 411.1L477.7 410.5L478.3 410.5L478.9 411.1L479.5 410.8L480 411.2L480.6 411.5L481.2 409.4L481.8 410.1L482.4 407.1L483 411.3L483.6 410.5L484.2 411.2L484.8 411.4L485.3 410.4L485.9 411.4L486.5 410.4L487.1 410.3L487.7 403.3L488.3 389.6L488.9 403.7L489.5 411.5L490.1 410.7L490.6 410.8L491.2 411.2L491.8 409.9L492.4 403.6L493 388.8L493.6 403L494.2 411.2L494.8 410.7L495.4 410.8L495.9 402.4L496.5 388.1L497.1 402.8L497.7 410.6L498.3 410.8L498.9 409.8L499.5 410.5L500.1 409.6L500.7 408.2L501.2 400.8L501.8 385.9L502.4 399.7L503 406L503.6 406.9L504.2 397.5L504.8 382.4L505.4 398L506 405.2L506.6 404.7L507.1 405L507.7 385.1L508.3 397.7L508.9 385.5L509.5 379.7L510.1 355.9L510.7 379.9L511.3 386.2L511.9 398.4L512.4 384.5L513 399.9L513.6 383.9L514.2 403.8L514.8 402.9L515.4 404.2L516 403.7L516.6 403.9L517.2 394.8L517.7 380.1L518.3 394.7L518.9 403.1L519.5 396.1L520.1 381.7L520.7 395.9L521.3 403.6L521.9 402.7L522.5 381.1L523 395.5L523.6 383.7L524.2 380.9L524.8 361.2L525.4 381.4L526 381.1L526.6 400L527.2 381.8L527.8 393.3L528.3 402.8L528.9 401.2L529.5 401.9L530.1 402L530.7 402.2L531.3 401.7L531.9 400.9L532.5 401.8L533.1 395.6L533.6 383.3L534.2 394.7L534.8 401.6L535.4 393.1L536 378L536.6 393.4L537.2 400.6L537.8 401L538.4 401.6L538.9 400.9L539.5 377.3L540.1 355.3L540.7 377.3L541.3 377.8L541.9 357.2L542.5 378.5L543.1 400.1L543.7 400L544.2 400.8L544.8 400.7L545.4 404.5L546 409.1L546.6 390L547.2 404.7L547.8 391.3L548.4 405.6L549 390.8L549.5 405.6L550.1 391.6L550.7 411.4L551.3 411.1L551.9 411.5L552.5 411.3L553.1 411L553.7 410.5L554.3 410.1L554.9 411.1L555.4 410.1L556 410.8L556.6 403.1L557.2 390.2L557.8 400.7L558.4 411L559 410.4L559.6 410.1L560.2 411L560.7 410.7L561.3 410.5L561.9 411.3L562.5 411.5L563.1 410.2L563.7 411.5L564.3 410.7L564.9 411.2L565.5 410.1L566 410.1L566.6 410.9L567.2 411.2L567.8 411.5L568.4 405.9L569 399.4L569.6 392.8L570.2 399.5L570.8 405.7L571.3 410.4L571.9 411.1L572.5 411.3L573.1 411.5L573.7 411.4L574.3 410.8L574.9 410.7L575.5 411.5L576.1 410.2L576.6 410.1L577.2 410.3L577.8 406.6L578.4 409.9L579 411.4L579.6 411.4L580.2 411.4L580.8 411.5L581.4 411L581.9 410.1L582.5 388.6L583.1 368.1L583.7 389.1L584.3 407.6L584.9 410.2L585.5 410.1L586.1 402.6L586.7 388.1L587.2 403L587.8 410.4L588.4 401.9L589 385.9L589.6 402.4L590.2 410.2L590.8 410.6L591.4 410.9L592 410.5L592.5 403.7L593.1 389.4L593.7 403.4L594.3 411.5L594.9 409.2L595.5 386.9L596.1 369.2L596.7 386.5L597.3 403.6L597.8 404.4L598.4 397.2L599 383.8L599.6 396.4L600.2 403.5L600.8 395.6L601.4 381.9L602 395.4L602.6 403.1L603.2 403.1L603.7 403.7L604.3 402.4L604.9 381.3L605.5 360.1L606.1 381.4L606.7 402.5L607.3 395L607.9 381.1L608.5 395.3L609 403.2L609.6 402.4L610.2 402.5L610.8 403.3L611.4 402.1L612 402.6L612.6 402.7L613.2 401.8L613.8 401.9L614.3 402.6L614.9 401.2L615.5 380.7L616.1 359.4L616.7 380.7L617.3 401.1L617.9 401.3L618.5 401.7L619.1 402.7L619.6 401.9L620.2 401.9L620.8 401.9L621.4 402.3L622 402.1L622.6 393.6L623.2 378.2L623.8 393.3L624.4 402L624.9 401.8L625.5 402.1L626.1 393.6L626.7 378.2L627.3 393.5L627.9 401.9L628.5 401.5L629.1 400.4L629.7 401.8L630.2 401.3L630.8 401.5L631.4 400.6L632 393.1L632.6 378.2L633.2 392.6L633.8 401.1L634.4 400.4L635 400.8L635.5 400L636.1 393.3L636.7 378.2L637.3 393L637.9 400.8L638.5 399.9L639.1 400.3L639.7 401.9L640.3 404.6L640.8 406.9L641.4 410.3L642 410.4L642.6 410L643.2 387.3L643.8 364.1L644.4 387.1L645 409.7L645.6 410.8L646.1 403.7L646.7 388.8L647.3 403.6L647.9 410.5L648.5 407.9L649.1 411.3L649.7 410.4L650.3 409.1L650.9 407.2L651.4 409.8L652 411L652.6 411.4L653.2 410.9L653.8 409.9L654.4 410.9L655 409L655.6 387.9L656.2 366.3L656.8 388.3L657.3 409.2L657.9 411.1L658.5 410.8L659.1 403.7L659.7 390.2L660.3 403.4L660.9 410.7L661.5 410.7L662.1 410.2L662.6 411L663.2 411.3L663.8 411.5L664.4 411.1L665 411.5L665.6 409.9L666.2 411.2L666.8 411.5L667.4 411.2L667.9 411L668.5 411.4L669.1 409.9L669.7 392.4L670.3 407.2L670.9 390.3L671.5 411.2L672.1 410.3L672.7 411.5L673.2 410.1L673.8 410.3L674.4 410L675 410.9L675.6 409.2L676.2 410.8L676.8 411.4L677.4 410.9L678 410.7L678.5 402.6L679.1 388.1L679.7 403.1L680.3 410.1L680.9 411L681.5 411.5L682.1 409.1L682.7 411.2L683.3 410.4L683.8 411.1L684.4 411.2L685 411.3L685.6 410.3L686.2 410.7L686.8 410.5L687.4 411.4L688 410.8L688.6 403.3L689.1 388.1L689.7 402.8L690.3 411L690.9 410.5L691.5 411L692.1 410.7L692.7 410.4L693.3 410.8L693.9 411.2L694.4 407.3L695 409.1L695.6 411.3L696.2 410L696.8 410.9L697.4 408.7L698 411.1L698.6 410.8L699.2 410.7L699.7 411.3L700.3 410.3L700.9 410.6L701.5 409.9L702.1 391.1L702.7 403.3L703.3 391.7L703.9 403.9L704.5 410.4L705.1 410.3L705.6 410.3L706.2 410.5L706.8 411.4L707.4 411.2L708 410.7L708.6 410.2L709.2 409.9L709.8 410.6L710.4 411L710.9 409.9L711.5 410.2L712.1 410.6L712.7 410.1L713.3 410.7L713.9 410.4L714.5 402.1L715.1 386.7L715.7 402L716.2 410.3L716.8 410.2L717.4 410.4L718 410.1L718.6 409.9L719.2 410.7L719.8 406.5L720.4 411L721 411.5L721.5 410L722.1 411L722.7 411.1L723.3 410.6L723.9 403.6L724.5 390.2L725.1 404.2L725.7 411.3L726.3 410.2L726.8 410.9L727.4 411L728 410.7L728.6 410.7L729.2 411.3L729.8 407.4L730.4 399.7L731 392.8L731.6 398L732.1 405.5L732.7 409.9L733.3 410.3L733.9 411.5L734.5 410.8L735.1 410L735.7 409.9L736.3 411L736.9 410.8L737.4 410.8L738 409.9L738.6 411L739.2 411.1L739.8 411.4L740.4 409.8L741 410.7L741.6 410.4L742.2 410.9L742.7 411.5L743.3 407.6L743.9 411L744.5 411L745.1 410.9L745.7 401.6L746.3 392.8L746.9 401.5L747.5 406.2L748 410L748.6 411.5L749.2 410.1L749.8 411.2L750.4 411.4L751 410.2L751.6 408.2L752.2 409.9L752.8 411.3L753.4 410.1L753.9 410L754.5 409.9L755.1 410L755.7 410L756.3 410.1L756.9 407.7L757.5 408L758.1 411L758.7 411.2L759.2 410.9L759.8 410.8L760.4 409.7L761 406.1L761.6 410.3L762.2 410.3L762.8 410.5L763.4 410.3L764 411.2L764.5 407.3L765.1 409.9L765.7 410.8L766.3 410.2L766.9 411.3L767.5 407.4L768.1 411.2L768.7 410.9L769.3 411L769.8 410.7L770.4 410.4L771 409.9L771.6 410.2L772.2 410.5L772.8 410.2L773.4 411.2L774 408L774.6 409.3L775.1 408.3L775.7 410.9L776.3 410.4L776.9 410.4L777.5 409.9L778.1 410.6L778.7 411.1L779.3 410.5L779.9 411.3L780.4 411.1L781 410.3L781.6 411.1L782.2 409.9L782.8 410.7L783.4 410.4L784 411.4L784.6 409.5L785.2 407.3L785.7 405.6L786.3 407.6L786.9 409.6L787.5 410.3L788.1 411.3L788.7 409.5L789.3 407.2L789.9 409.4L790.5 411.3L791 410.9L791.6 410L792.2 407.1L792.8 404L793.4 407.5L794 410.2L794.6 411.5L795.2 410.2L795.8 409.9L796.3 410.3L796.9 410.6L797.5 411.2L798.1 410.5L798.7 410.5L799.3 410.4L799.9 365.9L800.5 246.3L801.1 127.1L801.7 246.5L802.2 365.5L802.8 410.2L803.4 410.9L804 402.9L804.6 388.6L805.2 402.7L805.8 411.2L806.4 410.6L807 411L807.5 410.5L808.1 411L808.7 411.3L809.3 411.4L809.9 363.5L810.5 236.2L811.1 110.1L811.7 236.7L812.3 362.3L812.8 389.1L813.4 403L814 410.3L814.6 410.5L815.2 410.5L815.8 410.5L816.4 411.2L817 409.2L817.6 411.1L818.1 411.4L818.7 410.4L819.3 410.6L819.9 410.2L820.5 404.1L821.1 392L821.7 404.7L822.3 406.2L822.9 410.5L823.4 410L824 410.6L824.6 409.3L825.2 409.3L825.8 403.1L826.4 394.3L827 385.9L827.6 394L828.2 402.1L828.7 406.2L829.3 405.9L829.9 406.9L830.5 406.5L831.1 404.8L831.7 404.6L832.3 403.6L832.9 402.4L833.5 402.3L834 401.5L834.6 408.4L835.2 411.2L835.8 410.8L836.4 411.3L837 411.1L837.6 411.4L838.2 409.9L838.8 410.1L839.3 410.4L839.9 410.8L840.5 411.1L841.1 411.3L841.7 410.7L842.3 411.1L842.9 411.3L843.5 411.4L844.1 411.1L844.6 411.1L845.2 409.9L845.8 411.2L846.4 410.7L847 410.8L847.6 411.1L848.2 410.9L848.8 410.3L849.4 411.5L849.9 410.8L850.5 408L851.1 410L851.7 410.4L852.3 410.5L852.9 410.2L853.5 410.7L854.1 410.6L854.7 411L855.3 410.7L855.8 409.8L856.4 408.6L857 411L857.6 410.6L858.2 411L858.8 404.9L859.4 398.5L860 392.8L860.6 398.9L861.1 404.4L861.7 410L862.3 411.1L862.9 410.9L863.5 410L864.1 410.2L864.7 411.4L865.3 410.6L865.9 411.1L866.4 410.9L867 410.8L867.6 410.5L868.2 411L868.8 411.3L869.4 411.4L870 410.1L870.6 410.5L871.2 410.6L871.7 411.2L872.3 410.7L872.9 410.8L873.5 410.5L874.1 411.1L874.7 410.6L875.3 410.7L875.9 410.5L876.5 410.9L877 410.6L877.6 411.1L878.2 410L878.8 410.4L879.4 410.7L880 411.1L880.6 408.4L881.2 410.3L881.8 411.2L882.3 409.9L882.9 406.9L883.5 398.3L884.1 390.2L884.7 382.2L885.3 373.7L885.9 382.2L886.5 390.1L887.1 398.9L887.6 404.8L888.2 407.3L888.8 406.3L889.4 405.6L890 405.1L890.6 404.4L891.2 405.1L891.8 405.7L892.4 405.4L892.9 404L893.5 404.3L894.1 403.8L894.7 405L895.3 404.9L895.9 403.9L896.5 333.1L897.1 202.9L897.7 72.9L898.2 202.3L898.8 330.5L899.4 399.4L900 398.4L900.6 396.8L901.2 395.4L901.8 393.8L902.4 392.4L903 390.4L903.6 376.7L904.1 355.6L904.7 375.4L905.3 383.2L905.9 381.2L906.5 370.8L907.1 355.1L907.7 364.2L908.3 347.1L908.9 327.5L909.4 342.8L910 354L910.6 351.3L911.2 352.1L911.8 353.7L912.4 347.1L913 336.5L913.6 348.7L914.2 357.8L914.7 346.6L915.3 335.4L915.9 341.8L916.5 345.2L917.1 338.1L917.7 349L918.3 357.7L918.9 354.8L919.5 344.5L920 365.5L920.6 389.8L921.2 400.7L921.8 400.3L922.4 399.5L923 400L923.6 400.7L924.2 400L924.8 400.1L925.3 400.6L925.9 400L926.5 400.5L927.1 399.9L927.7 386.6L928.3 319.2L928.9 252.5L929.5 319.7L930.1 386.7L930.6 401L931.2 399.7L931.8 399.5L932.4 400.5L933 396.2L933.6 387.5L934.2 379.5L934.8 387.9L935.4 396.1L935.9 400.3L936.5 401L937.1 400.8L937.7 400.5L938.3 403.3L938.9 406.1L939.5 408.1L940.1 411L940.7 409.9L941.2 411.1L941.8 411L942.4 410.8L943 410.3L943.6 410.3L944.2 411.3L944.8 408L945.4 403.4L946 388.8L946.5 402.2L947.1 410.3L947.7 410.4L948.3 410.9L948.9 411.5L949.5 389.8L950.1 404.8L950.7 389.5L951.3 410.3L951.9 410.1L952.4 411.3L953 410.2L953.6 410.9L954.2 411L954.8 409.9L955.4 409.9L956 409.8L956.6 411.2L957.2 411.3L957.7 410.6L958.3 410.7L958.9 402.6L959.5 388.8L960.1 403L960.7 409.9L961.3 402.3L961.9 386.7L962.5 402.6L963 407.5L963.6 409.9L964.2 410.7L964.8 410.5L965.4 410.7L966 389.2L966.6 402L967.2 387.1L967.8 373.7L968.3 388.8L968.9 402L969.5 388.3L970.1 407.9L970.7 389L971.3 410.9L971.9 386.6L972.5 409.7L973.1 411.5L973.6 410.9L974.2 411.4L974.8 410.4L975.4 410.4L976 410.5"/>
<text class="ttl" x="513" y="49.1">CPU Usage (cores)</text>
<text class="ax yl" x="97.1" y="419.9">0</text>
<text class="ax yl" x="97.1" y="313.6">2</text>
<text class="ax yl" x="97.1" y="207.3">4</text>
<text class="ax yl" x="97.1" y="101">6</text>
<text class="ax xl" x="228.7" y="462.1" textLength="46" lengthAdjust="spacingAndGlyphs">9pm</text>
<text class="ax xl" x="334.7" y="462.1" textLength="55" lengthAdjust="spacingAndGlyphs">12am</text>
<text class="ax xl" x="440.7" y="462.1" textLength="45" lengthAdjust="spacingAndGlyphs">3am</text>
<text class="ax xl" x="546.7" y="462.1" textLength="46" lengthAdjust="spacingAndGlyphs">6am</text>
<text class="ax xl" x="652.7" y="462.1" textLength="46" lengthAdjust="spacingAndGlyphs">9am</text>
<text class="ax xl" x="758.7" y="462.1" textLength="57" lengthAdjust="spacingAndGlyphs">12pm</text>
<text class="ax xl" x="864.7" y="462.1" textLength="46" lengthAdjust="spacingAndGlyphs">3pm</text>
<text class="ax xl" x="970.7" y="462.1" textLength="47" lengthAdjust="spacingAndGlyphs">6pm</text>
<text class="ax xl" x="228.7" y="498.6" textLength="84" lengthAdjust="spacingAndGlyphs">11/11/23</text>
<text class="ax xl" x="334.7" y="498.6" textLength="52.5" lengthAdjust="spacingAndGlyphs">11/12</text>
</svg></div>
<div class="panel" style="left:26px;top:742px"><svg width="1026" height="512" viewBox="0 0 1026 512">
<path class="g" d="M229.5 34.4V432.5M335.5 34.4V432.5M441.5 34.4V432.5M547.5 34.4V432.5M653.5 34.4V432.5M759.5 34.4V432.5M865.5 34.4V432.5M971.5 34.4V432.5M108.5 412.5H976.8M108.5 344.5H976.8M108.5 277.5H976.8M108.5 209.5H976.8M108.5 142.5H976.8M108.5 74.5H976.8"/>
<path class="f" d="M128.1 412.5L128.1 282.6L128.7 214L129.3 145.4L129.9 88.2L130.5 119.8L131 151.6L131.6 187.5L132.2 219.8L132.8 246.3L133.4 272.9L134 296.8L134.6 320.1L135.2 337.8L135.8 341.2L136.3 344.6L136.9 366.4L137.5 390.1L138.1 403L138.7 410.8L139.3 409.3L139.9 410L140.5 411.5L141.1 409.5L141.6 402.8L142.2 410.1L142.8 409.6L143.4 411.8L144 410.7L144.6 412.3L145.2 410.8L145.8 411.8L146.4 412.5L147 411.6L147.5 411.2L148.1 409.5L148.7 411.2L149.3 410.3L149.9 411.8L150.5 403.8L151.1 411.3L151.7 411L152.3 411.1L152.8 411.1L153.4 408.9L154 412.1L154.6 411.3L155.2 410.8L155.8 407L156.4 412L157 410.6L157.6 411.3L158.1 409L158.7 360.6L159.3 331.6L159.9 314.1L160.5 294.8L161.1 275.3L161.7 290.3L162.3 291.7L162.9 278.7L163.4 310.2L164 344.1L164.6 358.4L165.2 405.3L165.8 411.3L166.4 411.8L167 412.1L167.6 410.1L168.2 412.4L168.7 401.8L169.3 409.9L169.9 410.1L170.5 411.7L171.1 410L171.7 387.6L172.3 346.3L172.9 345.5L173.5 343.7L174 388.5L174.6 342.5L175.2 365.2L175.8 410.4L176.4 409.9L177 409.6L177.6 411.2L178.2 409.6L178.8 411.5L179.4 409.7L179.9 409L180.5 399.8L181.1 390.2L181.7 400.3L182.3 409.3L182.9 412.3L183.5 411.6L184.1 412.1L184.7 411.6L185.2 409.8L185.8 394L186.4 346.9L187 348.3L187.6 365.8L188.2 340.7L188.8 334.1L189.4 363.4L190 345.4L190.5 339.4L191.1 332.7L191.7 340.6L192.3 348L192.9 371.2L193.5 402.8L194.1 409.6L194.7 402.6L195.3 376.7L195.8 332.7L196.4 287L197 242.1L197.6 287.5L198.2 332.8L198.8 378.7L199.4 376.2L200 333.1L200.6 289.3L201.1 246.5L201.7 202.7L202.3 158.9L202.9 116L203.5 72.5L204.1 115.8L204.7 158.8L205.3 202.5L205.9 245L206.4 288.2L207 303.2L207.6 290.8L208.2 326.6L208.8 355.2L209.4 359.8L210 338.1L210.6 364.4L211.2 390.4L211.8 411.3L212.3 410.7L212.9 410.2L213.5 412.1L214.1 410.8L214.7 410.7L215.3 411.5L215.9 410.7L216.5 409.7L217.1 412.1L217.6 412.2L218.2 406.1L218.8 403L219.4 407.4L220 412.1L220.6 410.5L221.2 409.2L221.8 410.4L222.4 412.1L222.9 412.4L223.5 410.3L224.1 411.3L224.7 410.3L225.3 411.9L225.9 411.3L226.5 411.2L227.1 411.2L227.7 408.6L228.2 400.9L228.8 394.9L229.4 401.3L230 407.2L230.6 410.3L231.2 409.9L231.8 410.5L232.4 409.7L233 409.6L233.5 410.4L234.1 410.3L234.7 410.5L235.3 411.3L235.9 411L236.5 411.2L237.1 410L237.7 408.1L238.3 404.4L238.8 407.1L239.4 410.2L240 409.5L240.6 404.7L241.2 411.8L241.8 409.2L242.4 410L243 402.3L243.6 411.4L244.2 411.1L244.7 412.5L245.3 412.2L245.9 410.9L246.5 410.1L247.1 409.4L247.7 412L248.3 410.1L248.9 410.3L249.5 381.2L250 344.4L250.6 342.1L251.2 341.4L251.8 343.2L252.4 382.6L253 342L253.6 345.1L254.2 344.4L254.8 340.9L255.3 380.7L255.9 409.9L256.5 410.1L257.1 405.7L257.7 410.8L258.3 410.2L258.9 409.6L259.5 410.4L260.1 410.9L260.6 409.8L261.2 412L261.8 411.8L262.4 410.5L263 410.2L263.6 411.6L264.2 409.1L264.8 411.7L265.4 363.3L265.9 382.7L266.5 371.1L267.1 342.8L267.7 340.8L268.3 343.6L268.9 368.9L269.5 411.8L270.1 409.3L270.7 410.8L271.2 410.9L271.8 410.4L272.4 377.6L273 352.8L273.6 321.9L274.2 305L274.8 288.1L275.4 305.1L276 351.4L276.6 331.5L277.1 319.8L277.7 301.6L278.3 319.8L278.9 337L279.5 364.2L280.1 348.3L280.7 347.1L281.3 366.9L281.9 313.2L282.4 293.5L283 273.9L283.6 293.6L284.2 305.4L284.8 307.5L285.4 277.3L286 304.6L286.6 332.1L287.2 346.3L287.7 391.2L288.3 411.9L288.9 410.3L289.5 411.5L290.1 412.2L290.7 411.9L291.3 410.6L291.9 411L292.5 412.4L293 412.1L293.6 410.6L294.2 373.9L294.8 337.3L295.4 337.1L296 340.9L296.6 338.7L297.2 339.2L297.8 340.4L298.3 389L298.9 410.9L299.5 411.1L300.1 412.2L300.7 411L301.3 410.6L301.9 409.4L302.5 389.1L303.1 340.9L303.6 344.7L304.2 344.9L304.8 344.1L305.4 341.1L306 343.7L306.6 358.7L307.2 411L307.8 411.5L308.4 411.2L309 406.2L309.5 410.8L310.1 410L310.7 409.2L311.3 410.5L311.9 410.6L312.5 410.3L313.1 410L313.7 403.4L314.3 355.5L314.8 338.4L315.4 339.3L316 342.4L316.6 342.3L317.2 363L317.8 357.7L318.4 409.6L319 410.8L319.6 410.4L320.1 411.9L320.7 411.1L321.3 411.6L321.9 409.3L322.5 410.8L323.1 411.9L323.7 409.2L324.3 409.2L324.9 407.4L325.4 409.7L326 410.4L326.6 411.5L327.2 409.5L327.8 412.4L328.4 410.1L329 396.4L329.6 343.4L330.2 339.1L330.7 341.3L331.3 357.8L331.9 340.1L332.5 341.4L333.1 374.7L333.7 379L334.3 350.6L334.9 323.8L335.5 294.6L336 266.5L336.6 294.7L337.2 322.6L337.8 351.1L338.4 378.9L339 409.4L339.6 412.3L340.2 411.4L340.8 411.8L341.4 410.6L341.9 411L342.5 410.1L343.1 410.5L343.7 410.8L344.3 412.2L344.9 411.4L345.5 410.8L346.1 410.2L346.7 409.7L347.2 410.2L347.8 410.6L348.4 411.4L349 411.4L349.6 409.6L350.2 411.2L350.8 404.2L351.4 409.6L352 411.3L352.5 410L353.1 404.8L353.7 411.2L354.3 410.6L354.9 412.1L355.5 412.4L356.1 412.2L356.7 410.4L357.3 411.6L357.8 412.1L358.4 409.7L359 412.3L359.6 411.5L360.2 412L360.8 409.5L361.4 409.5L362 412L362.6 412.4L363.1 409.2L363.7 410.3L364.3 410.2L364.9 409.4L365.5 411.6L366.1 412.2L366.7 388.7L367.3 345.3L367.9 346.9L368.4 344.3L369 347.3L369.6 341.2L370.2 332.4L370.8 324.6L371.4 331.9L372 341.3L372.6 367.3L373.2 345.9L373.8 359.5L374.3 407.5L374.9 411.5L375.5 411L376.1 411.6L376.7 409.4L377.3 410.1L377.9 388.5L378.5 371.8L379.1 342.2L379.6 343.8L380.2 341.8L380.8 343.8L381.4 346L382 395.5L382.6 407.7L383.2 410.4L383.8 410.8L384.4 412.2L384.9 411.4L385.5 409.6L386.1 409.7L386.7 411.9L387.3 411.5L387.9 412.1L388.5 389.6L389.1 345.3L389.7 343.9L390.2 345.8L390.8 345.8L391.4 386.4L392 363.6L392.6 408L393.2 370.3L393.8 318.7L394.4 291.9L395 274.6L395.5 292.3L396.1 311.1L396.7 334.6L397.3 403L397.9 410.6L398.5 410.4L399.1 410.3L399.7 410.9L400.3 411.2L400.8 411.4L401.4 412.4L402 411.2L402.6 405.9L403.2 410.5L403.8 411L404.4 412L405 410.6L405.6 411.5L406.2 410.8L406.7 410.2L407.3 410.8L407.9 412L408.5 410.4L409.1 412.2L409.7 405.6L410.3 394.2L410.9 390.2L411.5 394.7L412 404.9L412.6 412.4L413.2 410.7L413.8 411.1L414.4 411.2L415 411L415.6 412.4L416.2 409.2L416.8 411.4L417.3 410.2L417.9 409.3L418.5 409.4L419.1 410.9L419.7 402.9L420.3 396.3L420.9 403.4L421.5 410.6L422.1 412L422.6 411.3L423.2 411.3L423.8 404.3L424.4 410.8L425 410L425.6 410.1L426.2 409.4L426.8 411.7L427.4 409.1L427.9 410.5L428.5 409.4L429.1 410.3L429.7 410.6L430.3 411.1L430.9 411.8L431.5 412L432.1 407.8L432.7 401.7L433.2 406.2L433.8 412.4L434.4 412.1L435 412.5L435.6 411L436.2 411.1L436.8 410.9L437.4 409.2L438 412.3L438.6 410.9L439.1 409.2L439.7 411.1L440.3 409.5L440.9 406.8L441.5 403L442.1 407.6L442.7 412L443.3 410.7L443.9 402.3L444.4 410.7L445 412.3L445.6 409.8L446.2 409.3L446.8 410.8L447.4 411.3L448 411.2L448.6 410.5L449.2 404.8L449.7 397.6L450.3 404.8L450.9 410L451.5 410L452.1 410.4L452.7 411L453.3 409.2L453.9 411.6L454.5 348.1L455 309.4L455.6 297.3L456.2 268.2L456.8 288.8L457.4 310.7L458 342.7L458.6 409.6L459.2 411L459.8 410.7L460.3 406.9L460.9 409.4L461.5 359.2L462.1 342.7L462.7 343L463.3 370.7L463.9 344.4L464.5 342.9L465.1 356.1L465.6 408.1L466.2 410.3L466.8 410L467.4 392.4L468 335.1L468.6 336.8L469.2 336.9L469.8 336.9L470.4 363.9L471 350.4L471.5 406.8L472.1 410.2L472.7 411.1L473.3 400.8L473.9 411.7L474.5 411.1L475.1 409.9L475.7 411.6L476.3 402.3L476.8 411.4L477.4 405.7L478 402.4L478.6 406.2L479.2 411.2L479.8 409.6L480.4 411.8L481 411.5L481.6 409.7L482.1 410.8L482.7 410.2L483.3 410.1L483.9 409.6L484.5 405.7L485.1 412.3L485.7 412.4L486.3 403L486.9 410.3L487.4 409.2L488 409.5L488.6 410.6L489.2 359.8L489.8 343.9L490.4 345L491 391.6L491.6 344.6L492.2 391.8L492.7 412.2L493.3 360.6L493.9 335.5L494.5 368.4L495.1 337.9L495.7 345.3L496.3 401.5L496.9 405.4L497.5 346.3L498 382.8L498.6 332.8L499.2 332.6L499.8 332.8L500.4 373.4L501 410.2L501.6 382.1L502.2 347.6L502.8 344.4L503.4 333.8L503.9 322.2L504.5 311.1L505.1 322.2L505.7 364.2L506.3 344.8L506.9 348.7L507.5 348.3L508.1 348.6L508.7 347.4L509.2 333.3L509.8 312.2L510.4 291.9L511 271.2L511.6 291.5L512.2 311.7L512.8 332.2L513.4 376.5L514 409.1L514.5 409.3L515.1 409.7L515.7 410L516.3 387.6L516.9 317.4L517.5 285.1L518.1 258.8L518.7 233.1L519.3 207L519.8 232.7L520.4 258.4L521 285.1L521.6 311.1L522.2 352.2L522.8 411.3L523.4 382.1L524 314.6L524.6 297.4L525.1 283.6L525.7 269.2L526.3 292.9L526.9 296.1L527.5 307.3L528.1 306.6L528.7 297.6L529.3 317.6L529.9 367.5L530.4 408.1L531 406.2L531.6 403L532.2 410.1L532.8 412L533.4 409.9L534 409.3L534.6 409.7L535.2 410.9L535.8 383.9L536.3 348.2L536.9 346.4L537.5 393.2L538.1 347.1L538.7 353.2L539.3 397.8L539.9 314.1L540.5 271L541.1 232.8L541.6 197.4L542.2 160.1L542.8 123.8L543.4 160.4L544 197.2L544.6 256.2L545.2 270.8L545.8 324.2L546.4 406.4L546.9 411.9L547.5 347.3L548.1 306.6L548.7 296.7L549.3 294.7L549.9 274.6L550.5 286.1L551.1 296.1L551.7 307.4L552.2 321.8L552.8 394.3L553.4 409.2L554 410.6L554.6 411.1L555.2 409.3L555.8 412.5L556.4 410L557 361.1L557.5 336.6L558.1 390.6L558.7 336.9L559.3 335.8L559.9 345.9L560.5 402.1L561.1 412L561.7 409.2L562.3 403.4L562.8 410.8L563.4 408L564 404.4L564.6 407.3L565.2 409.5L565.8 412L566.4 407.5L567 410.6L567.6 404.3L568.1 409.5L568.7 409.6L569.3 409.4L569.9 401.7L570.5 406L571.1 411.4L571.7 406.5L572.3 402.4L572.9 407.3L573.5 410.3L574 409.7L574.6 412.4L575.2 410.4L575.8 410.5L576.4 412.2L577 409.8L577.6 409.4L578.2 410.6L578.8 412.3L579.3 403.8L579.9 410.7L580.5 410.2L581.1 412.3L581.7 411.9L582.3 410.8L582.9 368L583.5 341L584.1 358.9L584.6 339.1L585.2 359.7L585.8 409.4L586.4 409.6L587 403.7L587.6 353.2L588.2 316.8L588.8 296L589.4 275.3L589.9 296.1L590.5 317.8L591.1 363.6L591.7 373.2L592.3 410.8L592.9 407.6L593.5 389.7L594.1 333.8L594.7 336.3L595.2 278.7L595.8 251.2L596.4 224L597 196.2L597.6 228.8L598.2 251.7L598.8 304.5L599.4 306.4L600 355.8L600.5 373.1L601.1 327.2L601.7 316.5L602.3 328.3L602.9 337.4L603.5 346.2L604.1 352.5L604.7 401.9L605.3 407.4L605.9 333.3L606.4 288.3L607 255.2L607.6 222.6L608.2 192.4L608.8 157L609.4 189.7L610 232.9L610.6 256.2L611.2 287.5L611.7 321.6L612.3 374.1L612.9 411.2L613.5 411.3L614.1 409.4L614.7 406.6L615.3 411.3L615.9 390.4L616.5 354.4L617 320.6L617.6 290.5L618.2 269.9L618.8 290.2L619.4 312.1L620 357.7L620.6 410.3L621.2 411L621.8 407.2L622.3 404.6L622.9 410.6L623.5 409.4L624.1 380.4L624.7 356.8L625.3 365.9L625.9 333.3L626.5 388.6L627.1 372.3L627.6 376.8L628.2 334.9L628.8 336.2L629.4 393.9L630 409.7L630.6 411.4L631.2 411.7L631.8 410.3L632.4 411.9L632.9 399.7L633.5 352.3L634.1 343.9L634.7 388.9L635.3 347.1L635.9 352.5L636.5 375.5L637.1 317.8L637.7 296.5L638.3 275.9L638.8 297.4L639.4 317.3L640 338.5L640.6 397L641.2 410.1L641.8 401.8L642.4 376L643 290.1L643.6 264L644.1 206.8L644.7 165.3L645.3 124.5L645.9 84L646.5 124.9L647.1 164.9L647.7 218.9L648.3 247.8L648.9 286.4L649.4 362.9L650 412L650.6 408L651.2 410L651.8 410.6L652.4 411.7L653 409.3L653.6 410.9L654.2 410L654.7 409.9L655.3 385.3L655.9 341.4L656.5 320.9L657.1 303.6L657.7 296.7L658.3 269.2L658.9 287L659.5 304.1L660 322.5L660.6 367.1L661.2 346.3L661.8 363.6L662.4 410.2L663 410.9L663.6 409.7L664.2 410L664.8 411.9L665.3 411.7L665.9 409.2L666.5 409.5L667.1 410.6L667.7 411.1L668.3 412.4L668.9 411.6L669.5 408.3L670.1 391.1L670.7 345.8L671.2 344.1L671.8 307.3L672.4 286.6L673 267.2L673.6 287.1L674.2 306L674.8 324.8L675.4 375.6L676 411.9L676.5 409.4L677.1 405.3L677.7 410.7L678.3 386.8L678.9 343.2L679.5 343.9L680.1 342.4L680.7 344.2L681.3 344.2L681.8 345.4L682.4 381L683 411.3L683.6 402.4L684.2 411.5L684.8 412.4L685.4 411.9L686 410.1L686.6 411.2L687.1 411.1L687.7 411.1L688.3 412.5L688.9 370.3L689.5 344.7L690.1 346.3L690.7 347.6L691.3 344.2L691.9 346.9L692.4 359.6L693 361.6L693.6 381.7L694.2 411.4L694.8 409.4L695.4 410.5L696 411.1L696.6 410.3L697.2 412.3L697.7 409.2L698.3 406.5L698.9 409.6L699.5 411.4L700.1 411L700.7 411.5L701.3 405.7L701.9 356.4L702.5 337.3L703.1 295.7L703.6 268.3L704.2 242.7L704.8 210.4L705.4 238.7L706 268.6L706.6 295.8L707.2 336.8L707.8 409.7L708.4 407.5L708.9 395.1L709.5 378.7L710.1 394.7L710.7 409.6L711.3 410.3L711.9 409.2L712.5 409.3L713.1 411.8L713.7 407.5L714.2 356.7L714.8 340.1L715.4 341.4L716 339.7L716.6 340.4L717.2 342.8L717.8 348.9L718.4 400.7L719 412L719.5 410.3L720.1 409.5L720.7 411.5L721.3 402.1L721.9 409.6L722.5 411.3L723.1 409.9L723.7 409.4L724.3 390.7L724.8 344.7L725.4 342.2L726 352.7L726.6 332.1L727.2 337.3L727.8 370.2L728.4 377.9L729 411L729.6 412.2L730.1 409.5L730.7 411.3L731.3 411.7L731.9 411.9L732.5 409.4L733.1 411.4L733.7 410.7L734.3 409.4L734.9 412.3L735.5 409.9L736 411.3L736.6 412.3L737.2 408L737.8 399L738.4 397.6L739 402.3L739.6 407.1L740.2 411.8L740.8 412L741.3 411.7L741.9 410.8L742.5 411.7L743.1 410.4L743.7 409.2L744.3 406.5L744.9 411.2L745.5 410.1L746.1 411.9L746.6 411.5L747.2 409.9L747.8 412.2L748.4 411.6L749 410L749.6 411.7L750.2 411L750.8 410.7L751.4 410.1L751.9 409.9L752.5 410.1L753.1 411.4L753.7 411.8L754.3 411.3L754.9 412.5L755.5 408.4L756.1 394.9L756.7 381.4L757.2 391L757.8 406.7L758.4 410.4L759 411.4L759.6 409.7L760.2 410L760.8 412.1L761.4 409.5L762 411.6L762.5 403.1L763.1 403.7L763.7 407L764.3 410.8L764.9 409.4L765.5 409.5L766.1 410.3L766.7 409.7L767.3 410.6L767.9 412.1L768.4 412.3L769 410.9L769.6 412.2L770.2 412.4L770.8 410L771.4 412.4L772 409.2L772.6 409.4L773.2 411.5L773.7 410.2L774.3 410.5L774.9 412.1L775.5 411L776.1 410.8L776.7 405.2L777.3 411.1L777.9 409.3L778.5 412.2L779 409.5L779.6 404.8L780.2 410.2L780.8 411L781.4 410.7L782 411.9L782.6 411.7L783.2 407.1L783.8 411.7L784.3 409.7L784.9 410.5L785.5 410.3L786.1 409.3L786.7 409.3L787.3 410.6L787.9 409.7L788.5 410.8L789.1 411.2L789.6 410.6L790.2 412.4L790.8 411.2L791.4 409.8L792 410.1L792.6 412.1L793.2 409.4L793.8 411.6L794.4 411.5L794.9 412L795.5 407.3L796.1 403L796.7 396.3L797.3 402.5L797.9 408.3L798.5 412L799.1 410.8L799.7 411L800.3 409.8L800.8 410.6L801.4 411L802 409.4L802.6 379.4L803.2 348.5L803.8 348.3L804.4 338.4L805 318.2L805.6 296.5L806.1 275.3L806.7 296.1L807.3 318.6L807.9 360.8L808.5 387.6L809.1 410.9L809.7 411.9L810.3 410.8L810.9 411.1L811.4 408.9L812 361.4L812.6 375.4L813.2 348.6L813.8 348.5L814.4 347.6L815 347.8L815.6 361.4L816.2 408.9L816.7 410L817.3 410.5L817.9 412.5L818.5 411.8L819.1 410.6L819.7 410.5L820.3 409.9L820.9 411.2L821.5 410.3L822 409.7L822.6 410.1L823.2 410.9L823.8 410.7L824.4 411.8L825 409.8L825.6 405.5L826.2 398.3L826.8 351.1L827.3 345.4L827.9 342.8L828.5 340.2L829.1 342.4L829.7 346.3L830.3 356L830.9 403L831.5 409.2L832.1 412L832.7 408.7L833.2 396.3L833.8 385.5L834.4 397.1L835 408.8L835.6 409.2L836.2 412.4L836.8 410.4L837.4 412L838 409.2L838.5 410.7L839.1 409.9L839.7 403.1L840.3 411.3L840.9 409.3L841.5 410.6L842.1 410.8L842.7 410.6L843.3 412L843.8 411.2L844.4 409.2L845 403.4L845.6 410L846.2 412.4L846.8 409.6L847.4 412.5L848 412.1L848.6 411.5L849.1 410.9L849.7 412.5L850.3 410.6L850.9 409.6L851.5 409.9L852.1 410.9L852.7 409.9L853.3 412.2L853.9 411.9L854.4 411L855 409.2L855.6 411.3L856.2 411L856.8 410.1L857.4 406.3L858 392.1L858.6 377.3L859.2 392L859.7 407.8L860.3 409.2L860.9 408.6L861.5 393.2L862.1 377.3L862.7 394.4L863.3 411.6L863.9 410.5L864.5 410.2L865.1 408.8L865.6 398.3L866.2 387.5L866.8 398.8L867.4 410.1L868 407.4L868.6 409.1L869.2 410.4L869.8 410.7L870.4 410.6L870.9 410.7L871.5 409.3L872.1 409.7L872.7 412L873.3 411.6L873.9 410.8L874.5 409.8L875.1 410.4L875.7 410L876.2 402.7L876.8 409.7L877.4 402.8L878 411L878.6 409.6L879.2 411.9L879.8 411.3L880.4 409.7L881 406.7L881.5 409.7L882.1 406.5L882.7 401.5L883.3 395.6L883.9 400.4L884.5 407.7L885.1 411.8L885.7 404.5L886.3 411.8L886.8 409.7L887.4 410.8L888 410.2L888.6 410.3L889.2 410.5L889.8 410.2L890.4 409.5L891 410.1L891.6 394.2L892.1 384.1L892.7 395.5L893.3 409.3L893.9 405.9L894.5 411.6L895.1 412.4L895.7 411.5L896.3 409.1L896.9 409.8L897.5 410.2L898 409.2L898.6 410.4L899.2 409.9L899.8 411.9L900.4 410.7L901 411.7L901.6 409.4L902.2 407.1L902.8 392.9L903.3 381.3L903.9 369.2L904.5 381.9L905.1 392.8L905.7 406.6L906.3 410.9L906.9 409.2L907.5 399.8L908.1 383.1L908.6 374L909.2 360.4L909.8 374.3L910.4 387.7L911 388.4L911.6 384.4L912.2 364.1L912.8 344.9L913.4 364.6L913.9 382.5L914.5 394L915.1 388.9L915.7 378.4L916.3 367.9L916.9 378.3L917.5 389.7L918.1 396.4L918.7 394.7L919.2 385.5L919.8 394.3L920.4 403.5L921 407.8L921.6 402.6L922.2 411.8L922.8 409.7L923.4 412.2L924 409.4L924.5 410L925.1 412L925.7 409.9L926.3 409.7L926.9 409.3L927.5 412.2L928.1 410.2L928.7 410.5L929.3 410.5L929.9 412.2L930.4 409.5L931 411L931.6 410.6L932.2 403.5L932.8 409.2L933.4 412L934 410.2L934.6 409.6L935.2 410.4L935.7 411.8L936.3 410.5L936.9 410.9L937.5 410.4L938.1 407.5L938.7 410.3L939.3 409.3L939.9 411L940.5 401.8L941 405.8L941.6 409.3L942.2 402L942.8 409.6L943.4 412.4L944 409.3L944.6 409.5L945.2 411.7L945.8 361.8L946.3 340.8L946.9 336.8L947.5 341.2L948.1 346.1L948.7 345.7L949.3 328.9L949.9 309.5L950.5 291.6L951.1 273.8L951.6 256.3L952.2 276.9L952.8 292L953.4 309.8L954 326L954.6 373.7L955.2 361.6L955.8 410.1L956.4 406.2L956.9 412.1L957.5 411.3L958.1 376.6L958.7 380.8L959.3 363.3L959.9 347.9L960.5 348.1L961.1 342.7L961.7 334.4L962.3 326.6L962.8 334.1L963.4 342L964 346L964.6 347.8L965.2 382.8L965.8 369.4L966.4 346.7L967 342.7L967.6 350L968.1 321.5L968.7 325.4L969.3 303.2L969.9 288.7L970.5 271.2L971.1 288.6L971.7 305.7L972.3 323L972.9 340.3L973.4 383.5L974 410.3L974.6 412.4L975.2 410.6L975.8 411.1L975.8 412.5Z"/>
<path class="s" d="M128.1 282.6L128.7 214L129.3 145.4L129.9 88.2L130.5 119.8L131 151.6L131.6 187.5L132.2 219.8L132.8 246.3L133.4 272.9L134 296.8L134.6 320.1L135.2 337.8L135.8 341.2L136.3 344.6L136.9 366.4L137.5 390.1L138.1 403L138.7 410.8L139.3 409.3L139.9 410L140.5 411.5L141.1 409.5L141.6 402.8L142.2 410.1L142.8 409.6L143.4 411.8L144 410.7L144.6 412.3L145.2 410.8L145.8 411.8L146.4 412.5L147 411.6L147.5 411.2L148.1 409.5L148.7 411.2L149.3 410.3L149.9 411.8L150.5 403.8L151.1 411.3L151.7 411L152.3 411.1L152.8 411.1L153.4 408.9L154 412.1L154.6 411.3L155.2 410.8L155.8 407L156.4 412L157 410.6L157.6 411.3L158.1 409L158.7 360.6L159.3 331.6L159.9 314.1L160.5 294.8L161.1 275.3L161.7 290.3L162.3 291.7L162.9 278.7L163.4 310.2L164 344.1L164.6 358.4L165.2 405.3L165.8 411.3L166.4 411.8L167 412.1L167.6 410.1L168.2 412.4L168.7 401.8L169.3 409.9L169.9 410.1L170.5 411.7L171.1 410L171.7 387.6L172.3 346.3L172.9 345.5L173.5 343.7L174 388.5L174.6 342.5L175.2 365.2L175.8 410.4L176.4 409.9L177 409.6L177.6 411.2L178.2 409.6L178.8 411.5L179.4 409.7L179.9 409L180.5 399.8L181.1 390.2L181.7 400.3L182.3 409.3L182.9 412.3L183.5 411.6L184.1 412.1L184.7 411.6L185.2 409.8L185.8 394L186.4 346.9L187 348.3L187.6 365.8L188.2 340.7L188.8 334.1L189.4 363.4L190 345.4L190.5 339.4L191.1 332.7L191.7 340.6L192.3 348L192.9 371.2L193.5 402.8L194.1 409.6L194.7 402.6L195.3 376.7L195.8 332.7L196.4 287L197 242.1L197.6 287.5L198.2 332.8L198.8 378.7L199.4 376.2L200 333.1L200.6 289.3L201.1 246.5L201.7 202.7L202.3 158.9L202.9 116L203.5 72.5L204.1 115.8L204.7 158.8L205.3 202.5L205.9 245L206.4 288.2L207 303.2L207.6 290.8L208.2 326.6L208.8 355.2L209.4 359.8L210 338.1L210.6 364.4L211.2 390.4L211.8 411.3L212.3 410.7L212.9 410.2L213.5 412.1L214.1 410.8L214.7 410.7L215.3 411.5L215.9 410.7L216.5 409.7L217.1 412.1L217.6 412.2L218.2 406.1L218.8 403L219.4 407.4L220 412.1L220.6 410.5L221.2 409.2L221.8 410.4L222.4 412.1L222.9 412.4L223.5 410.3L224.1 411.3L224.7 410.3L225.3 411.9L225.9 411.3L226.5 411.2L227.1 411.2L227.7 408.6L228.2 400.9L228.8 394.9L229.4 401.3L230 407.2L230.6 410.3L231.2 409.9L231.8 410.5L232.4 409.7L233 409.6L233.5 410.4L234.1 410.3L234.7 410.5L235.3 411.3L235.9 411L236.5 411.2L237.1 410L237.7 408.1L238.3 404.4L238.8 407.1L239.4 410.2L240 409.5L240.6 404.7L241.2 411.8L241.8 409.2L242.4 410L243 402.3L243.6 411.4L244.2 411.1L244.7 412.5L245.3 412.2L245.9 410.9L246.5 410.1L247.1 409.4L247.7 412L248.3 410.1L248.9 410.3L249.5 381.2L250 344.4L250.6 342.1L251.2 341.4L251.8 343.2L252.4 382.6L253 342L253.6 345.1L254.2 344.4L254.8 340.9L255.3 380.7L255.9 409.9L256.5 410.1L257.1 405.7L257.7 410.8L258.3 410.2L258.9 409.6L259.5 410.4L260.1 410.9L260.6 409.8L261.2 412L261.8 411.8L262.4 410.5L263 410.2L263.6 411.6L264.2 409.1L264.8 411.7L265.4 363.3L265.9 382.7L266.5 371.1L267.1 342.8L267.7 340.8L268.3 343.6L268.9 368.9L269.5 411.8L270.1 409.3L270.7 410.8L271.2 410.9L271.8 410.4L272.4 377.6L273 352.8L273.6 321.9L274.2 305L274.8 288.1L275.4 305.1L276 351.4L276.6 331.5L277.1 319.8L277.7 301.6L278.3 319.8L278.9 337L279.5 364.2L280.1 348.3L280.7 347.1L281.3 366.9L281.9 313.2L282.4 293.5L283 273.9L283.6 293.6L284.2 305.4L284.8 307.5L285.4 277.3L286 304.6L286.6 332.1L287.2 346.3L287.7 391.2L288.3 411.9L288.9 410.3L289.5 411.5L290.1 412.2L290.7 411.9L291.3 410.6L291.9 411L292.5 412.4L293 412.1L293.6 410.6L294.2 373.9L294.8 337.3L295.4 337.1L296 340.9L296.6 338.7L297.2 339.2L297.8 340.4L298.3 389L298.9 410.9L299.5 411.1L300.1 412.2L300.7 411L301.3 410.6L301.9 409.4L302.5 389.1L303.1 340.9L303.6 344.7L304.2 344.9L304.8 344.1L305.4 341.1L306 343.7L306.6 358.7L307.2 411L307.8 411.5L308.4 411.2L309 406.2L309.5 410.8L310.1 410L310.7 409.2L311.3 410.5L311.9 410.6L312.5 410.3L313.1 410L313.7 403.4L314.3 355.5L314.8 338.4L315.4 339.3L316 342.4L316.6 342.3L317.2 363L317.8 357.7L318.4 409.6L319 410.8L319.6 410.4L320.1 411.9L320.7 411.1L321.3 411.6L321.9 409.3L322.5 410.8L323.1 411.9L323.7 409.2L324.3 409.2L324.9 407.4L325.4 409.7L326 410.4L326.6 411.5L327.2 409.5L327.8 412.4L328.4 410.1L329 396.4L329.6 343.4L330.2 339.1L330.7 341.3L331.3 357.8L331.9 340.1L332.5 341.4L333.1 374.7L333.7 379L334.3 350.6L334.9 323.8L335.5 294.6L336 266.5L336.6 294.7L337.2 322.6L337.8 351.1L338.4 378.9L339 409.4L339.6 412.3L340.2 411.4L340.8 411.8L341.4 410.6L341.9 411L342.5 410.1L343.1 410.5L343.7 410.8L344.3 412.2L344.9 411.4L345.5 410.8L346.1 410.2L346.7 409.7L347.2 410.2L347.8 410.6L348.4 411.4L349 411.4L349.6 409.6L350.2 411.2L350.8 404.2L351.4 409.6L352 411.3L352.5 410L353.1 404.8L353.7 411.2L354.3 410.6L354.9 412.1L355.5 412.4L356.1 412.2L356.7 410.4L357.3 411.6L357.8 412.1L358.4 409.7L359 412.3L359.6 411.5L360.2 412L360.8 409.5L361.4 409.5L362 412L362.6 412.4L363.1 409.2L363.7 410.3L364.3 410.2L364.9 409.4L365.5 411.6L366.1 412.2L366.7 388.7L367.3 345.3L367.9 346.9L368.4 344.3L369 347.3L369.6 341.2L370.2 332.4L370.8 324.6L371.4 331.9L372 341.3L372.6 367.3L373.2 345.9L373.8 359.5L374.3 407.5L374.9 411.5L375.5 411L376.1 411.6L376.7 409.4L377.3 410.1L377.9 388.5L378.5 371.8L379.1 342.2L379.6 343.8L380.2 341.8L380.8 343.8L381.4 346L382 395.5L382.6 407.7L383.2 410.4L383.8 410.8L384.4 412.2L384.9 411.4L385.5 409.6L386.1 409.7L386.7 411.9L387.3 411.5L387.9 412.1L388.5 389.6L389.1 345.3L389.7 343.9L390.2 345.8L390.8 345.8L391.4 386.4L392 363.6L392.6 408L393.2 370.3L393.8 318.7L394.4 291.9L395 274.6L395.5 292.3L396.1 311.1L396.7 334.6L397.3 403L397.9 410.6L398.5 410.4L399.1 410.3L399.7 410.9L400.3 411.2L400.8 411.4L401.4 412.4L402 411.2L402.6 405.9L403.2 410.5L403.8 411L404.4 412L405 410.6L405.6 411.5L406.2 410.8L406.7 410.2L407.3 410.8L407.9 412L408.5 410.4L409.1 412.2L409.7 405.6L410.3 394.2L410.9 390.2L411.5 394.7L412 404.9L412.6 412.4L413.2 410.7L413.8 411.1L414.4 411.2L415 411L415.6 412.4L416.2 409.2L416.8 411.4L417.3 410.2L417.9 409.3L418.5 409.4L419.1 410.9L419.7 402.9L420.3 396.3L420.9 403.4L421.5 410.6L422.1 412L422.6 411.3L423.2 411.3L423.8 404.3L424.4 410.8L425 410L425.6 410.1L426.2 409.4L426.8 411.7L427.4 409.1L427.9 410.5L428.5 409.4L429.1 410.3L429.7 410.6L430.3 411.1L430.9 411.8L431.5 412L432.1 407.8L432.7 401.7L433.2 406.2L433.8 412.4L434.4 412.1L435 412.5L435.6 411L436.2 411.1L436.8 410.9L437.4 409.2L438 412.3L438.6 410.9L439.1 409.2L439.7 411.1L440.3 409.5L440.9 406.8L441.5 403L442.1 407.6L442.7 412L443.3 410.7L443.9 402.3L444.4 410.7L445 412.3L445.6 409.8L446.2 409.3L446.8 410.8L447.4 411.3L448 411.2L448.6 410.5L449.2 404.8L449.7 397.6L450.3 404.8L450.9 410L451.5 410L452.1 410.4L452.7 411L453.3 409.2L453.9 411.6L454.5 348.1L455 309.4L455.6 297.3L456.2 268.2L456.8 288.8L457.4 310.7L458 342.7L458.6 409.6L459.2 411L459.8 410.7L460.3 406.9L460.9 409.4L461.5 359.2L462.1 342.7L462.7 343L463.3 370.7L463.9 344.4L464.5 342.9L465.1 356.1L465.6 408.1L466.2 410.3L466.8 410L467.4 392.4L468 335.1L468.6 336.8L469.2 336.9L469.8 336.9L470.4 363.9L471 350.4L471.5 406.8L472.1 410.2L472.7 411.1L473.3 400.8L473.9 411.7L474.5 411.1L475.1 409.9L475.7 411.6L476.3 402.3L476.8 411.4L477.4 405.7L478 402.4L478.6 406.2L479.2 411.2L479.8 409.6L480.4 411.8L481 411.5L481.6 409.7L482.1 410.8L482.7 410.2L483.3 410.1L483.9 409.6L484.5 405.7L485.1 412.3L485.7 412.4L486.3 403L486.9 410.3L487.4 409.2L488 409.5L488.6 410.6L489.2 359.8L489.8 343.9L490.4 345L491 391.6L491.6 344.6L492.2 391.8L492.7 412.2L493.3 360.6L493.9 335.5L494.5 368.4L495.1 337.9L495.7 345.3L496.3 401.5L496.9 405.4L497.5 346.3L498 382.8L498.6 332.8L499.2 332.6L499.8 332.8L500.4 373.4L501 410.2L501.6 382.1L502.2 347.6L502.8 344.4L503.4 333.8L503.9 322.2L504.5 311.1L505.1 322.2L505.7 364.2L506.3 344.8L506.9 348.7L507.5 348.3L508.1 348.6L508.7 347.4L509.2 333.3L509.8 312.2L510.4 291.9L511 271.2L511.6 291.5L512.2 311.7L512.8 332.2L513.4 376.5L514 409.1L514.5 409.3L515.1 409.7L515.7 410L516.3 387.6L516.9 317.4L517.5 285.1L518.1 258.8L518.7 233.1L519.3 207L519.8 232.7L520.4 258.4L521 285.1L521.6 311.1L522.2 352.2L522.8 411.3L523.4 382.1L524 314.6L524.6 297.4L525.1 283.6L525.7 269.2L526.3 292.9L526.9 296.1L527.5 307.3L528.1 306.6L528.7 297.6L529.3 317.6L529.9 367.5L530.4 408.1L531 406.2L531.6 403L532.2 410.1L532.8 412L533.4 409.9L534 409.3L534.6 409.7L535.2 410.9L535.8 383.9L536.3 348.2L536.9 346.4L537.5 393.2L538.1 347.1L538.7 353.2L539.3 397.8L539.9 314.1L540.5 271L541.1 232.8L541.6 197.4L542.2 160.1L542.8 123.8L543.4 160.4L544 197.2L544.6 256.2L545.2 270.8L545.8 324.2L546.4 406.4L546.9 411.9L547.5 347.3L548.1 306.6L548.7 296.7L549.3 294.7L549.9 274.6L550.5 286.1L551.1 296.1L551.7 307.4L552.2 321.8L552.8 394.3L553.4 409.2L554 410.6L554.6 411.1L555.2 409.3L555.8 412.5L556.4 410L557 361.1L557.5 336.6L558.1 390.6L558.7 336.9L559.3 335.8L559.9 345.9L560.5 402.1L561.1 412L561.7 409.2L562.3 403.4L562.8 410.8L563.4 408L564 404.4L564.6 407.3L565.2 409.5L565.8 412L566.4 407.5L567 410.6L567.6 404.3L568.1 409.5L568.7 409.6L569.3 409.4L569.9 401.7L570.5 406L571.1 411.4L571.7 406.5L572.3 402.4L572.9 407.3L573.5 410.3L574 409.7L574.6 412.4L575.2 410.4L575.8 410.5L576.4 412.2L577 409.8L577.6 409.4L578.2 410.6L578.8 412.3L579.3 403.8L579.9 410.7L580.5 410.2L581.1 412.3L581.7 411.9L582.3 410.8L582.9 368L583.5 341L584.1 358.9L584.6 339.1L585.2 359.7L585.8 409.4L586.4 409.6L587 403.7L587.6 353.2L588.2 316.8L588.8 296L589.4 275.3L589.9 296.1L590.5 317.8L591.1 363.6L591.7 373.2L592.3 410.8L592.9 407.6L593.5 389.7L594.1 333.8L594.7 336.3L595.2 278.7L595.8 251.2L596.4 224L597 196.2L597.6 228.8L598.2 251.7L598.8 304.5L599.4 306.4L600 355.8L600.5 373.1L601.1 327.2L601.7 316.5L602.3 328.3L602.9 337.4L603.5 346.2L604.1 352.5L604.7 401.9L605.3 407.4L605.9 333.3L606.4 288.3L607 255.2L607.6 222.6L608.2 192.4L608.8 157L609.4 189.7L610 232.9L610.6 256.2L611.2 287.5L611.7 321.6L612.3 374.1L612.9 411.2L613.5 411.3L614.1 409.4L614.7 406.6L615.3 411.3L615.9 390.4L616.5 354.4L617 320.6L617.6 290.5L618.2 269.9L618.8 290.2L619.4 312.1L620 357.7L620.6 410.3L621.2 411L621.8 407.2L622.3 404.6L622.9 410.6L623.5 409.4L624.1 380.4L624.7 356.8L625.3 365.9L625.9 333.3L626.5 388.6L627.1 372.3L627.6 376.8L628.2 334.9L628.8 336.2L629.4 393.9L630 409.7L630.6 411.4L631.2 411.7L631.8 410.3L632.4 411.9L632.9 399.7L633.5 352.3L634.1 343.9L634.7 388.9L635.3 347.1L635.9 352.5L636.5 375.5L637.1 317.8L637.7 296.5L638.3 275.9L638.8 297.4L639.4 317.3L640 338.5L640.6 397L641.2 410.1L641.8 401.8L642.4 376L643 290.1L643.6 264L644.1 206.8L644.7 165.3L645.3 124.5L645.9 84L646.5 124.9L647.1 164.9L647.7 218.9L648.3 247.8L648.9 286.4L649.4 362.9L650 412L650.6 408L651.2 410L651.8 410.6L652.4 411.7L653 409.3L653.6 410.9L654.2 410L654.7 409.9L655.3 385.3L655.9 341.4L656.5 320.9L657.1 303.6L657.7 296.7L658.3 269.2L658.9 287L659.5 304.1L660 322.5L660.6 367.1L661.2 346.3L661.8 363.6L662.4 410.2L663 410.9L663.6 409.7L664.2 410L664.8 411.9L665.3 411.7L665.9 409.2L666.5 409.5L667.1 410.6L667.7 411.1L668.3 412.4L668.9 411.6L669.5 408.3L670.1 391.1L670.7 345.8L671.2 344.1L671.8 307.3L672.4 286.6L673 267.2L673.6 287.1L674.2 306L674.8 324.8L675.4 375.6L676 411.9L676.5 409.4L677.1 405.3L677.7 410.7L678.3 386.8L678.9 343.2L679.5 343.9L680.1 342.4L680.7 344.2L681.3 344.2L681.8 345.4L682.4 381L683 411.3L683.6 402.4L684.2 411.5L684.8 412.4L685.4 411.9L686 410.1L686.6 411.2L687.1 411.1L687.7 411.1L688.3 412.5L688.9 370.3L689.5 344.7L690.1 346.3L690.7 347.6L691.3 344.2L691.9 346.9L692.4 359.6L693 361.6L693.6 381.7L694.2 411.4L694.8 409.4L695.4 410.5L696 411.1L696.6 410.3L697.2 412.3L697.7 409.2L698.3 406.5L698.9 409.6L699.5 411.4L700.1 411L700.7 411.5L701.3 405.7L701.9 356.4L702.5 337.3L703.1 295.7L703.6 268.3L704.2 242.7L704.8 210.4L705.4 238.7L706 268.6L706.6 295.8L707.2 336.8L707.8 409.7L708.4 407.5L708.9 395.1L709.5 378.7L710.1 394.7L710.7 409.6L711.3 410.3L711.9 409.2L712.5 409.3L713.1 411.8L713.7 407.5L714.2 356.7L714.8 340.1L715.4 341.4L716 339.7L716.6 340.4L717.2 342.8L717.8 348.9L718.4 400.7L719 412L719.5 410.3L720.1 409.5L720.7 411.5L721.3 402.1L721.9 409.6L722.5 411.3L723.1 409.9L723.7 409.4L724.3 390.7L724.8 344.7L725.4 342.2L726 352.7L726.6 332.1L727.2 337.3L727.8 370.2L728.4 377.9L729 411L729.6 412.2L730.1 409.5L730.7 411.3L731.3 411.7L731.9 411.9L732.5 409.4L733.1 411.4L733.7 410.7L734.3 409.4L734.9 412.3L735.5 409.9L736 411.3L736.6 412.3L737.2 408L737.8 399L738.4 397.6L739 402.3L739.6 407.1L740.2 411.8L740.8 412L741.3 411.7L741.9 410.8L742.5 411.7L743.1 410.4L743.7 409.2L744.3 406.5L744.9 411.2L745.5 410.1L746.1 411.9L746.6 411.5L747.2 409.9L747.8 412.2L748.4 411.6L749 410L749.6 411.7L750.2 411L750.8 410.7L751.4 410.1L751.9 409.9L752.5 410.1L753.1 411.4L753.7 411.8L754.3 411.3L754.9 412.5L755.5 408.4L756.1 394.9L756.7 381.4L757.2 391L757.8 406.7L758.4 410.4L759 411.4L759.6 409.7L760.2 410L760.8 412.1L761.4 409.5L762 411.6L762.5 403.1L763.1 403.7L763.7 407L764.3 410.8L764.9 409.4L765.5 409.5L766.1 410.3L766.7 409.7L767.3 410.6L767.9 412.1L768.4 412.3L769 410.9L769.6 412.2L770.2 412.4L770.8 410L771.4 412.4L772 409.2L772.6 409.4L773.2 411.5L773.7 410.2L774.3 410.5L774.9 412.1L775.5 411L776.1 410.8L776.7 405.2L777.3 411.1L777.9 409.3L778.5 412.2L779 409.5L779.6 404.8L780.2 410.2L780.8 411L781.4 410.7L782 411.9L782.6 411.7L783.2 407.1L783.8 411.7L784.3 409.7L784.9 410.5L785.5 410.3L786.1 409.3L786.7 409.3L787.3 410.6L787.9 409.7L788.5 410.8L789.1 411.2L789.6 410.6L790.2 412.4L790.8 411.2L791.4 409.8L792 410.1L792.6 412.1L793.2 409.4L793.8 411.6L794.4 411.5L794.9 412L795.5 407.3L796.1 403L796.7 396.3L797.3 402.5L797.9 408.3L798.5 412L799.1 410.8L799.7 411L800.3 409.8L800.8 410.6L801.4 411L802 409.4L802.6 379.4L803.2 348.5L803.8 348.3L804.4 338.4L805 318.2L805.6 296.5L806.1 275.3L806.7 296.1L807.3 318.6L807.9 360.8L808.5 387.6L809.1 410.9L809.7 411.9L810.3 410.8L810.9 411.1L811.4 408.9L812 361.4L812.6 375.4L813.2 348.6L813.8 348.5L814.4 347.6L815 347.8L815.6 361.4L816.2 408.9L816.7 410L817.3 410.5L817.9 412.5L818.5 411.8L819.1 410.6L819.7 410.5L820.3 409.9L820.9 411.2L821.5 410.3L822 409.7L822.6 410.1L823.2 410.9L823.8 410.7L824.4 411.8L825 409.8L825.6 405.5L826.2 398.3L826.8 351.1L827.3 345.4L827.9 342.8L828.5 340.2L829.1 342.4L829.7 346.3L830.3 356L830.9 403L831.5 409.2L832.1 412L832.7 408.7L833.2 396.3L833.8 385.5L834.4 397.1L835 408.8L835.6 409.2L836.2 412.4L836.8 410.4L837.4 412L838 409.2L838.5 410.7L839.1 409.9L839.7 403.1L840.3 411.3L840.9 409.3L841.5 410.6L842.1 410.8L842.7 410.6L843.3 412L843.8 411.2L844.4 409.2L845 403.4L845.6 410L846.2 412.4L846.8 409.6L847.4 412.5L848 412.1L848.6 411.5L849.1 410.9L849.7 412.5L850.3 410.6L850.9 409.6L851.5 409.9L852.1 410.9L852.7 409.9L853.3 412.2L853.9 411.9L854.4 411L855 409.2L855.6 411.3L856.2 411L856.8 410.1L857.4 406.3L858 392.1L858.6 377.3L859.2 392L859.7 407.8L860.3 409.2L860.9 408.6L861.5 393.2L862.1 377.3L862.7 394.4L863.3 411.6L863.9 410.5L864.5 410.2L865.1 408.8L865.6 398.3L866.2 387.5L866.8 398.8L867.4 410.1L868 407.4L868.6 409.1L869.2 410.4L869.8 410.7L870.4 410.6L870.9 410.7L871.5 409.3L872.1 409.7L872.7 412L873.3 411.6L873.9 410.8L874.5 409.8L875.1 410.4L875.7 410L876.2 402.7L876.8 409.7L877.4 402.8L878 411L878.6 409.6L879.2 411.9L879.8 411.3L880.4 409.7L881 406.7L881.5 409.7L882.1 406.5L882.7 401.5L883.3 395.6L883.9 400.4L884.5 407.7L885.1 411.8L885.7 404.5L886.3 411.8L886.8 409.7L887.4 410.8L888 410.2L888.6 410.3L889.2 410.5L889.8 410.2L890.4 409.5L891 410.1L891.6 394.2L892.1 384.1L892.7 395.5L893.3 409.3L893.9 405.9L894.5 411.6L895.1 412.4L895.7 411.5L896.3 409.1L896.9 409.8L897.5 410.2L898 409.2L898.6 410.4L899.2 409.9L899.8 411.9L900.4 410.7L901 411.7L901.6 409.4L902.2 407.1L902.8 392.9L903.3 381.3L903.9 369.2L904.5 381.9L905.1 392.8L905.7 406.6L906.3 410.9L906.9 409.2L907.5 399.8L908.1 383.1L908.6 374L909.2 360.4L909.8 374.3L910.4 387.7L911 388.4L911.6 384.4L912.2 364.1L912.8 344.9L913.4 364.6L913.9 382.5L914.5 394L915.1 388.9L915.7 378.4L916.3 367.9L916.9 378.3L917.5 389.7L918.1 396.4L918.7 394.7L919.2 385.5L919.8 394.3L920.4 403.5L921 407.8L921.6 402.6L922.2 411.8L922.8 409.7L923.4 412.2L924 409.4L924.5 410L925.1 412L925.7 409.9L926.3 409.7L926.9 409.3L927.5 412.2L928.1 410.2L928.7 410.5L929.3 410.5L929.9 412.2L930.4 409.5L931 411L931.6 410.6L932.2 403.5L932.8 409.2L933.4 412L934 410.2L934.6 409.6L935.2 410.4L935.7 411.8L936.3 410.5L936.9 410.9L937.5 410.4L938.1 407.5L938.7 410.3L939.3 409.3L939.9 411L940.5 401.8L941 405.8L941.6 409.3L942.2 402L942.8 409.6L943.4 412.4L944 409.3L944.6 409.5L945.2 411.7L945.8 361.8L946.3 340.8L946.9 336.8L947.5 341.2L948.1 346.1L948.7 345.7L949.3 328.9L949.9 309.5L950.5 291.6L951.1 273.8L951.6 256.3L952.2 276.9L952.8 292L953.4 309.8L954 326L954.6 373.7L955.2 361.6L955.8 410.1L956.4 406.2L956.9 412.1L957.5 411.3L958.1 376.6L958.7 380.8L959.3 363.3L959.9 347.9L960.5 348.1L961.1 342.7L961.7 334.4L962.3 326.6L962.8 334.1L963.4 342L964 346L964.6 347.8L965.2 382.8L965.8 369.4L966.4 346.7L967 342.7L967.6 350L968.1 321.5L968.7 325.4L969.3 303.2L969.9 288.7L970.5 271.2L971.1 288.6L971.7 305.7L972.3 323L972.9 340.3L973.4 383.5L974 410.3L974.6 412.4L975.2 410.6L975.8 411.1"/>
<text class="ttl" x="513" y="49.1">Queries Running</text>
<text class="ax yl" x="97.1" y="419.9">0</text>
<text class="ax yl" x="97.1" y="352.3">1</text>
<text class="ax yl" x="97.1" y="284.7">2</text>
<text class="ax yl" x="97.1" y="217.1">3</text>
<text class="ax yl" x="97.1" y="149.5">4</text>
<text class="ax yl" x="97.1" y="81.9">5</text>
<text class="ax xl" x="228.7" y="462.1" textLength="46" lengthAdjust="spacingAndGlyphs">9pm</text>
<text class="ax xl" x="334.7" y="462.1" textLength="55" lengthAdjust="spacingAndGlyphs">12am</text>
<text class="ax xl" x="440.7" y="462.1" textLength="45" lengthAdjust="spacingAndGlyphs">3am</text>
<text class="ax xl" x="546.7" y="462.1" textLength="46" lengthAdjust="spacingAndGlyphs">6am</text>
<text class="ax xl" x="652.7" y="462.1" textLength="46" lengthAdjust="spacingAndGlyphs">9am</text>
<text class="ax xl" x="758.7" y="462.1" textLength="57" lengthAdjust="spacingAndGlyphs">12pm</text>
<text class="ax xl" x="864.7" y="462.1" textLength="46" lengthAdjust="spacingAndGlyphs">3pm</text>
<text class="ax xl" x="970.7" y="462.1" textLength="47" lengthAdjust="spacingAndGlyphs">6pm</text>
<text class="ax xl" x="228.7" y="498.6" textLength="84" lengthAdjust="spacingAndGlyphs">11/11/23</text>
<text class="ax xl" x="334.7" y="498.6" textLength="52.5" lengthAdjust="spacingAndGlyphs">11/12</text>
</svg></div>
<div class="panel" style="left:1084px;top:742px"><svg width="1026" height="512" viewBox="0 0 1026 512">
<path class="g" d="M229.5 34.4V432.5M335.5 34.4V432.5M441.5 34.4V432.5M547.5 34.4V432.5M653.5 34.4V432.5M759.5 34.4V432.5M865.5 34.4V432.5M971.5 34.4V432.5M108.5 412.5H976.5M108.5 335.5H976.5M108.5 258.5H976.5M108.5 180.5H976.5M108.5 103.5H976.5"/>
<path class="f" d="M128.2 412.5L128.2 412.1L128.8 400.8L129.4 376.6L130 393.6L130.6 406.9L131.1 386.9L131.7 335.6L132.3 376.7L132.9 391.9L133.5 401.8L134.1 402.8L134.7 402L135.3 388.9L135.9 400.4L136.4 324.9L137 237.9L137.6 332.5L138.2 397.8L138.8 363.3L139.4 302.7L140 306.3L140.6 402.4L141.2 393.6L141.7 391.4L142.3 374.9L142.9 338.2L143.5 270.9L144.1 316.3L144.7 378.6L145.3 348.3L145.9 366L146.5 336.4L147 318L147.6 296.1L148.2 330.8L148.8 353.5L149.4 360.9L150 362.4L150.6 339.3L151.2 346.5L151.8 335.5L152.3 350L152.9 321.8L153.5 294.7L154.1 300.4L154.7 309.4L155.3 327.9L155.9 324.2L156.5 328.1L157.1 296.1L157.6 309L158.2 358L158.8 338.4L159.4 309.1L160 358.7L160.6 390.7L161.2 394.6L161.8 400.6L162.4 411.7L162.9 387.6L163.5 409.9L164.1 407.6L164.7 397L165.3 327.4L165.9 364.4L166.5 391.5L167.1 388.1L167.7 366.3L168.2 396.7L168.8 340.6L169.4 263.9L170 331.9L170.6 399.9L171.2 401.7L171.8 401.3L172.4 359.2L173 383.5L173.5 390.7L174.1 397L174.7 401.7L175.3 401.7L175.9 388L176.5 338.1L177.1 388.2L177.7 383.6L178.3 367.1L178.8 340.5L179.4 340.6L180 329.7L180.6 244.9L181.2 312.1L181.8 380L182.4 373.8L183 393.5L183.6 409.4L184.2 412.1L184.7 394.9L185.3 409.1L185.9 412.5L186.5 404.8L187.1 377.4L187.7 400.4L188.3 390.1L188.9 411.5L189.5 412.5L190 412.3L190.6 411.3L191.2 412.4L191.8 412.5L192.4 411.6L193 392.3L193.6 371.3L194.2 369.6L194.8 396.5L195.3 404.5L195.9 383.7L196.5 382.1L197.1 384.9L197.7 401.4L198.3 407.5L198.9 404.5L199.5 366.4L200.1 362.9L200.6 379.5L201.2 355.4L201.8 315.5L202.4 345.8L203 394.6L203.6 398.7L204.2 400.5L204.8 392.9L205.4 401.4L205.9 399.4L206.5 368.4L207.1 400.1L207.7 399.9L208.3 389.2L208.9 374.8L209.5 383.6L210.1 398.9L210.7 399.2L211.2 376L211.8 363.9L212.4 396.9L213 399.1L213.6 398.9L214.2 398.7L214.8 398.3L215.4 398.2L216 387.6L216.5 374.1L217.1 397.1L217.7 396.1L218.3 395.4L218.9 394.6L219.5 396.5L220.1 396.8L220.7 396.7L221.3 396.1L221.8 386.9L222.4 375.1L223 360.9L223.6 379.5L224.2 405.4L224.8 364.1L225.4 367.7L226 394.7L226.6 394.7L227.1 394.7L227.7 389.9L228.3 392.1L228.9 387.4L229.5 388.8L230.1 380.3L230.7 382.3L231.3 387.1L231.9 385.3L232.4 382.4L233 364.8L233.6 372.8L234.2 375.9L234.8 369.9L235.4 350.5L236 372.1L236.6 371.1L237.2 363.3L237.7 354.1L238.3 333.4L238.9 357L239.5 355.8L240.1 350.8L240.7 352.5L241.3 365.5L241.9 350.3L242.5 313.1L243 341L243.6 357.4L244.2 294.1L244.8 257.3L245.4 345.6L246 412.5L246.6 409.3L247.2 396.8L247.8 407.3L248.3 407.2L248.9 412.5L249.5 410.9L250.1 407.4L250.7 408.5L251.3 410.1L251.9 411L252.5 412.3L253.1 412.5L253.6 412.3L254.2 412.1L254.8 406.5L255.4 386.5L256 388.1L256.6 404.9L257.2 412L257.8 411.9L258.4 409.5L258.9 403.5L259.5 376.2L260.1 410.2L260.7 411.9L261.3 407.9L261.9 399.1L262.5 412.5L263.1 376.8L263.7 393.8L264.2 391.2L264.8 391.7L265.4 380.9L266 384.4L266.6 392.6L267.2 410.2L267.8 395.2L268.4 401.5L269 405.3L269.5 385.1L270.1 370.7L270.7 370.4L271.3 410.9L271.9 412.5L272.5 412L273.1 411.3L273.7 412.5L274.3 410.4L274.8 412.4L275.4 412.5L276 388.8L276.6 369.9L277.2 394.8L277.8 399.5L278.4 386L279 360.7L279.6 348.1L280.1 377.4L280.7 392.3L281.3 383.1L281.9 395.9L282.5 380.9L283.1 390.3L283.7 397.9L284.3 386.3L284.9 396L285.4 393.9L286 396.7L286.6 395.1L287.2 396.3L287.8 397.3L288.4 376.1L289 383.8L289.6 395L290.2 390.6L290.8 396.1L291.3 398.1L291.9 397.7L292.5 397.6L293.1 398.1L293.7 381.5L294.3 395.1L294.9 386.8L295.5 341.4L296.1 342.2L296.6 384L297.2 379.8L297.8 379.9L298.4 371.2L299 343.7L299.6 365L300.2 331.6L300.8 276.7L301.4 328L301.9 362L302.5 355.9L303.1 326.6L303.7 343.3L304.3 361.2L304.9 345.4L305.5 314.7L306.1 335.6L306.7 360.6L307.2 360.7L307.8 358.1L308.4 348.2L309 356.7L309.6 340.4L310.2 304.7L310.8 296.1L311.4 303.6L312 356.1L312.5 355L313.1 358.3L313.7 338.8L314.3 312.6L314.9 319.3L315.5 352.9L316.1 359.6L316.7 384.2L317.3 327.6L317.8 335.7L318.4 377.5L319 328.6L319.6 344.6L320.2 323.9L320.8 290.3L321.4 323.6L322 345.7L322.6 311.5L323.1 355.5L323.7 361.5L324.3 357.8L324.9 335.2L325.5 356.3L326.1 361.6L326.7 362.2L327.3 362.4L327.9 359.5L328.4 334L329 292.2L329.6 257.3L330.2 309.2L330.8 333.1L331.4 324.7L332 380.6L332.6 338.5L333.2 319.4L333.7 331.8L334.3 355.3L334.9 331.8L335.5 337.6L336.1 345.6L336.7 389.5L337.3 324.5L337.9 305.4L338.5 287.7L339 257.3L339.6 274.6L340.2 308.6L340.8 306.2L341.4 282.1L342 285.7L342.6 298.8L343.2 341.2L343.8 319.9L344.3 280.6L344.9 298.8L345.5 285.8L346.1 276.9L346.7 296.2L347.3 286.7L347.9 276.9L348.5 276.2L349.1 327.7L349.6 339.9L350.2 329.7L350.8 322.1L351.4 305.8L352 307.9L352.6 356.7L353.2 317.4L353.8 307.6L354.4 291.2L354.9 307.7L355.5 289.6L356.1 287L356.7 290L357.3 283.8L357.9 275.5L358.5 300.6L359.1 314.3L359.7 313.1L360.2 313.2L360.8 308.9L361.4 287.7L362 301.5L362.6 312.7L363.2 312.5L363.8 311.2L364.4 300.1L365 311L365.5 304.8L366.1 306.1L366.7 310.1L367.3 289.6L367.9 283L368.5 273.4L369.1 260.6L369.7 237.9L370.3 272.9L370.8 304.4L371.4 292.4L372 275.1L372.6 269.9L373.2 278.2L373.8 302.9L374.4 305L375 303.1L375.6 299.9L376.1 305.4L376.7 300.6L377.3 296.4L377.9 307.9L378.5 262.1L379.1 232.3L379.7 250.5L380.3 262.4L380.9 266.8L381.4 249.4L382 282.4L382.6 302.8L383.2 309.3L383.8 300.9L384.4 281.1L385 285.1L385.6 245.1L386.2 293.1L386.7 307.8L387.3 259.9L387.9 232.3L388.5 255.7L389.1 307.9L389.7 308.7L390.3 272.9L390.9 276.9L391.5 294.6L392 299.8L392.6 287.6L393.2 274.6L393.8 259.9L394.4 234.5L395 230.4L395.6 250.3L396.2 242.7L396.8 226.3L397.4 228.7L397.9 226.6L398.5 282.1L399.1 274.4L399.7 228.1L400.3 298.5L400.9 306.2L401.5 284.7L402.1 301L402.7 335.6L403.2 285.6L403.8 252.9L404.4 226.3L405 255.3L405.6 274.4L406.2 262.7L406.8 243.9L407.4 259.9L408 252.9L408.5 259.1L409.1 257.9L409.7 266.5L410.3 283.5L410.9 282.8L411.5 277.7L412.1 261.7L412.7 251.8L413.3 264.2L413.8 242.7L414.4 225L415 241.3L415.6 219.7L416.2 228.2L416.8 250.5L417.4 252.9L418 218.6L418.6 267.7L419.1 299.5L419.7 319L420.3 356L420.9 385.5L421.5 412.5L422.1 401.2L422.7 408.2L423.3 409.1L423.9 412L424.4 405.4L425 412.2L425.6 410.8L426.2 406.9L426.8 412.1L427.4 409.5L428 402.9L428.6 412.3L429.2 411.8L429.7 412.2L430.3 403.4L430.9 406.2L431.5 411.8L432.1 412.4L432.7 412.5L433.3 412.5L433.9 412.5L434.5 408.4L435 412.5L435.6 407.5L436.2 412.5L436.8 410.7L437.4 412.3L438 412.1L438.6 393.8L439.2 409.3L439.8 404.2L440.3 386.6L440.9 367.9L441.5 397.1L442.1 407L442.7 412.1L443.3 412.5L443.9 408.4L444.5 379.1L445.1 392.4L445.6 395.2L446.2 397L446.8 367.9L447.4 396.7L448 385L448.6 399.2L449.2 393.5L449.8 411.7L450.4 411.7L450.9 375.7L451.5 360.6L452.1 389.5L452.7 411.5L453.3 390.6L453.9 409.7L454.5 392.5L455.1 355.2L455.7 412.5L456.2 385.9L456.8 367.9L457.4 396.9L458 401.3L458.6 388.2L459.2 405.1L459.8 390L460.4 411.4L461 412.5L461.5 408.6L462.1 404.3L462.7 384.5L463.3 363.6L463.9 396.4L464.5 398L465.1 380.8L465.7 348.1L466.3 375.6L466.8 397.5L467.4 397.4L468 376.7L468.6 385.4L469.2 385.7L469.8 379.9L470.4 389.9L471 390.4L471.6 394.7L472.1 397.9L472.7 396.4L473.3 396.5L473.9 397.5L474.5 398L475.1 381.8L475.7 384.3L476.3 382.8L476.9 354.3L477.4 382.9L478 383.7L478.6 389.9L479.2 389.7L479.8 396.1L480.4 392.6L481 390.7L481.6 383.3L482.2 385.9L482.7 400.1L483.3 407.1L483.9 406.1L484.5 375L485.1 371.6L485.7 379.7L486.3 360.9L486.9 370.9L487.5 406.3L488 395.4L488.6 392.7L489.2 367.7L489.8 371.1L490.4 349.8L491 349.6L491.6 392.1L492.2 370.7L492.8 385.3L493.3 396.7L493.9 364.6L494.5 392.6L495.1 397.5L495.7 374.6L496.3 348.1L496.9 380.7L497.5 383.8L498.1 373.8L498.6 372L499.2 354.7L499.8 329.3L500.4 315.7L501 302.2L501.6 299.2L502.2 324.7L502.8 329.3L503.4 330.4L504 294.6L504.5 292.3L505.1 283.3L505.7 309.8L506.3 342.6L506.9 353.2L507.5 351.8L508.1 383.9L508.7 354.5L509.3 354.9L509.8 352.4L510.4 323L511 353.1L511.6 348.1L512.2 383.5L512.8 352.5L513.4 351.8L514 351.5L514.6 330.3L515.1 340L515.7 351.3L516.3 331.5L516.9 354.8L517.5 304.2L518.1 226.3L518.7 271.1L519.3 291.9L519.9 340L520.4 345L521 350.2L521.6 337.5L522.2 299.6L522.8 352.8L523.4 360.7L524 313.7L524.6 335L525.2 341.2L525.7 297L526.3 283.3L526.9 312.3L527.5 360.8L528.1 363.6L528.7 363.5L529.3 362.4L529.9 363.1L530.5 360.9L531 336.8L531.6 341.8L532.2 336.7L532.8 318.6L533.4 291.3L534 273.9L534.6 288.3L535.2 304.9L535.8 301.2L536.3 312.4L536.9 293.2L537.5 283.3L538.1 313.7L538.7 342.7L539.3 345.8L539.9 371.2L540.5 274.2L541.1 282.4L541.6 290.3L542.2 324.5L542.8 326L543.4 301.7L544 276.7L544.6 281.2L545.2 267.9L545.8 307.8L546.4 372.8L546.9 403.1L547.5 408.8L548.1 409.2L548.7 404.6L549.3 411.8L549.9 411.3L550.5 383.3L551.1 363.8L551.7 344.3L552.2 397L552.8 389.3L553.4 376.2L554 336.1L554.6 374.5L555.2 375.1L555.8 379.2L556.4 352.7L557 312.7L557.5 369L558.1 348.4L558.7 296.1L559.3 331.6L559.9 330.1L560.5 371.6L561.1 313.5L561.7 283.3L562.3 311.8L562.8 354.3L563.4 367.4L564 361.2L564.6 368.8L565.2 377.5L565.8 360.9L566.4 391L567 397.7L567.6 374.1L568.1 390.5L568.7 395.6L569.3 371.4L569.9 387.1L570.5 392.1L571.1 390.3L571.7 391.1L572.3 357.6L572.9 315.5L573.4 357.8L574 380.9L574.6 386.9L575.2 386.5L575.8 385.7L576.4 384.8L577 381.7L577.6 380.9L578.2 344.6L578.7 325.2L579.3 355.8L579.9 335.6L580.5 321.9L581.1 364.7L581.7 358L582.3 322L582.9 337.3L583.5 307.4L584 276.7L584.6 292.7L585.2 364.8L585.8 392.9L586.4 310.7L587 353.3L587.6 342.3L588.2 395.2L588.8 394.4L589.3 400.1L589.9 407L590.5 388.8L591.1 373.4L591.7 368L592.3 360.2L592.9 308.7L593.5 387.7L594.1 295.6L594.6 326.3L595.2 323L595.8 266.7L596.4 293L597 294.9L597.6 263.7L598.2 266.5L598.8 256.2L599.4 176.1L599.9 136.2L600.5 196.3L601.1 259.1L601.7 344.7L602.3 314.2L602.9 237L603.5 269.9L604.1 261.9L604.7 264.2L605.3 287.6L605.8 269.7L606.4 169.3L607 70.7L607.6 166.9L608.2 218.8L608.8 238.4L609.4 259.5L610 259.1L610.6 284.2L611.1 373.6L611.7 268.9L612.3 319.9L612.9 329.5L613.5 328.1L614.1 333L614.7 334.1L615.3 323.2L615.9 290.3L616.4 278.8L617 333.5L617.6 353.4L618.2 352.6L618.8 321.6L619.4 395.1L620 331.3L620.6 349.1L621.2 346.7L621.7 315.6L622.3 311.5L622.9 352.8L623.5 319.1L624.1 271.7L624.7 263.9L625.3 282.6L625.9 303.1L626.5 346.6L627 347L627.6 307.5L628.2 316.1L628.8 347.8L629.4 344L630 338.7L630.6 322.9L631.2 299.4L631.8 306.2L632.3 299.9L632.9 275.4L633.5 294L634.1 305.7L634.7 325.1L635.3 330.6L635.9 342.3L636.5 352.1L637.1 357.9L637.6 365L638.2 368.8L638.8 345.4L639.4 323.5L640 296.1L640.6 335.4L641.2 399.3L641.8 395.2L642.4 399.3L642.9 412.3L643.5 384.9L644.1 397.9L644.7 411.8L645.3 412.1L645.9 397.4L646.5 373.7L647.1 399.1L647.7 412.3L648.2 405L648.8 388.2L649.4 384.3L650 375.9L650.6 412.5L651.2 404L651.8 404.1L652.4 412.3L653 406.2L653.5 378.9L654.1 365.9L654.7 395.1L655.3 411.5L655.9 399.7L656.5 402L657.1 394.7L657.7 366.6L658.3 367.1L658.8 404.2L659.4 411.3L660 385.4L660.6 364.9L661.2 407.9L661.8 412.5L662.4 412.5L663 376.3L663.6 379.5L664.1 399.8L664.7 376L665.3 409.3L665.9 412.5L666.5 404.4L667.1 365.7L667.7 360.7L668.3 391.6L668.9 389.2L669.4 357.8L670 354.3L670.6 392.3L671.2 411.6L671.8 396L672.4 390.1L673 360.9L673.6 364L674.2 396.7L674.7 398.2L675.3 393.3L675.9 409.7L676.5 384.8L677.1 400.7L677.7 380.2L678.3 372.8L678.9 396L679.5 373.7L680 393L680.6 387L681.2 376.6L681.8 396.2L682.4 409.5L683 412.5L683.6 412.4L684.2 412.5L684.8 412.5L685.3 406.7L685.9 412.1L686.5 410.9L687.1 401.8L687.7 394.7L688.3 399.2L688.9 412.5L689.5 406L690.1 412.5L690.6 410.7L691.2 410.9L691.8 391L692.4 374.6L693 383.3L693.6 383L694.2 408.5L694.8 410.8L695.4 410.1L695.9 411.4L696.5 411.4L697.1 409.5L697.7 402.1L698.3 412.4L698.9 411.7L699.5 412.3L700.1 396.9L700.7 390.6L701.2 402.7L701.8 397.5L702.4 373.7L703 384.8L703.6 373.1L704.2 390.8L704.8 410.8L705.4 407.3L706 412.3L706.5 407.8L707.1 408.1L707.7 403.4L708.3 391.7L708.9 354.3L709.5 391.9L710.1 412.5L710.7 412.5L711.3 398.5L711.9 403.3L712.4 408.2L713 392.5L713.6 372.1L714.2 405.2L714.8 405.4L715.4 385.4L716 379.7L716.6 406.1L717.2 409.8L717.7 394.8L718.3 408.9L718.9 410.6L719.5 402.3L720.1 382.7L720.7 408.1L721.3 406.7L721.9 410.8L722.5 412.5L723 411.5L723.6 401.9L724.2 397L724.8 373.2L725.4 408.6L726 410.7L726.6 407L727.2 411.7L727.8 394.7L728.3 409.4L728.9 412.5L729.5 399.1L730.1 373.7L730.7 388.4L731.3 410.8L731.9 395.8L732.5 386L733.1 411.3L733.6 395.4L734.2 372.1L734.8 406L735.4 395.9L736 410.3L736.6 412.5L737.2 412.5L737.8 385L738.4 404.3L738.9 411.5L739.5 412.3L740.1 401.7L740.7 409.8L741.3 401L741.9 405.1L742.5 408.2L743.1 384.9L743.7 407L744.2 397.3L744.8 373.7L745.4 391.4L746 408.2L746.6 403.7L747.2 409.3L747.8 412.5L748.4 412.5L749 410.9L749.5 401L750.1 387.9L750.7 410.3L751.3 407.5L751.9 404.1L752.5 406.3L753.1 385.6L753.7 394.5L754.3 407.4L754.8 400.6L755.4 411.5L756 368.8L756.6 328.3L757.2 377.9L757.8 411.8L758.4 412.5L759 356.3L759.6 392.3L760.1 411.7L760.7 387.6L761.3 403.3L761.9 412.5L762.5 392.4L763.1 354.3L763.7 383.8L764.3 412.1L764.9 412.5L765.4 402L766 407.4L766.6 412.5L767.2 406.5L767.8 412.5L768.4 400.8L769 403.1L769.6 392.3L770.2 398.3L770.7 377.6L771.3 371.3L771.9 383.7L772.5 402L773.1 403L773.7 408.3L774.3 412.5L774.9 412.5L775.5 370.8L776 379.5L776.6 372.8L777.2 393.9L777.8 372.4L778.4 393.5L779 378.4L779.6 409.8L780.2 412.4L780.8 406.7L781.3 387L781.9 384.5L782.5 360.9L783.1 389.6L783.7 402.8L784.3 383.2L784.9 392.7L785.5 412.4L786.1 397.4L786.6 373.7L787.2 399.1L787.8 412.5L788.4 405.5L789 410.5L789.6 405.9L790.2 411.9L790.8 412.5L791.4 394.7L791.9 368.3L792.5 397.7L793.1 410.1L793.7 407.4L794.3 404.2L794.9 412.2L795.5 412.5L796.1 390.2L796.7 348.1L797.2 379.2L797.8 402.4L798.4 412L799 407.7L799.6 373.2L800.2 408.3L800.8 403.3L801.4 373.7L802 371.7L802.5 412.5L803.1 399.6L803.7 408.7L804.3 412.5L804.9 407.6L805.5 407L806.1 399.4L806.7 374.8L807.3 375.2L807.8 411.5L808.4 401.8L809 381.5L809.6 400.9L810.2 402.5L810.8 410L811.4 409.7L812 408.1L812.6 411.5L813.1 407.3L813.7 407.4L814.3 388L814.9 409.7L815.5 402.8L816.1 392.5L816.7 407L817.3 412.5L817.9 410.2L818.5 390.7L819 406.9L819.6 404.1L820.2 402.4L820.8 412.4L821.4 404.2L822 406.6L822.6 407.7L823.2 391.7L823.8 366.5L824.3 362L824.9 390.7L825.5 378.4L826.1 390.9L826.7 382.9L827.3 373.7L827.9 353.5L828.5 342.7L829.1 345.9L829.6 339.4L830.2 352.8L830.8 356.2L831.4 358.5L832 356.8L832.6 355.4L833.2 312.4L833.8 263.9L834.4 309.6L834.9 334.9L835.5 379.5L836.1 412.5L836.7 412.2L837.3 409.5L837.9 412.3L838.5 404.6L839.1 407.2L839.7 411.5L840.2 412.1L840.8 412.1L841.4 412.3L842 405.4L842.6 411.9L843.2 412.5L843.8 409.5L844.4 409.1L845 401.3L845.5 381.5L846.1 401.8L846.7 412.5L847.3 411.6L847.9 404.6L848.5 407.9L849.1 411.2L849.7 407.6L850.3 411.2L850.8 410.7L851.4 412.1L852 410.5L852.6 407.3L853.2 405.5L853.8 394.2L854.4 388.6L855 383.4L855.6 400.8L856.1 389.4L856.7 406.8L857.3 395.9L857.9 393.9L858.5 346.4L859.1 309.3L859.7 335.6L860.3 386.5L860.9 392.9L861.4 394.3L862 390.7L862.6 378.2L863.2 397.9L863.8 398.8L864.4 387.4L865 370.1L865.6 341.1L866.2 376.1L866.7 401.4L867.3 396.3L867.9 392.5L868.5 397.9L869.1 381.2L869.7 406.9L870.3 410.5L870.9 405.7L871.5 399.2L872 407.2L872.6 409.3L873.2 404.8L873.8 379.7L874.4 375.9L875 374.2L875.6 372.5L876.2 403.1L876.8 405.6L877.3 398.6L877.9 400.2L878.5 401L879.1 397.9L879.7 373.5L880.3 387.1L880.9 407.6L881.5 399.2L882.1 385.5L882.6 363L883.2 365.9L883.8 376.7L884.4 385.5L885 385.1L885.6 380L886.2 364L886.8 370.3L887.4 383.8L887.9 378.5L888.5 353L889.1 362L889.7 349.9L890.3 350.2L890.9 355.8L891.5 320.5L892.1 251.1L892.7 314.9L893.2 324.9L893.8 331.8L894.4 335.8L895 366L895.6 373.1L896.2 361.3L896.8 366.6L897.4 381.4L898 360.5L898.5 370.4L899.1 362.3L899.7 300L900.3 336.5L900.9 270.9L901.5 317.1L902.1 342.8L902.7 289.4L903.3 340.5L903.8 353.3L904.4 314.5L905 331.7L905.6 329.7L906.2 301.7L906.8 346.6L907.4 347.2L908 329.3L908.6 269.7L909.1 277.5L909.7 301.8L910.3 350.7L910.9 345.6L911.5 352.4L912.1 315.7L912.7 270.9L913.3 314.8L913.9 338.8L914.4 353.8L915 360.5L915.6 352.5L916.2 343.6L916.8 334.6L917.4 290.8L918 310.3L918.6 298.4L919.2 312.8L919.7 263.9L920.3 290.4L920.9 283L921.5 263.9L922.1 320L922.7 344.5L923.3 293.8L923.9 336.8L924.5 311.5L925.1 289.4L925.6 304.4L926.2 291.7L926.8 277.5L927.4 293.2L928 311.7L928.6 315.2L929.2 322.1L929.8 329.1L930.4 321.2L930.9 320L931.5 312.6L932.1 328L932.7 292.5L933.3 320.5L933.9 324.2L934.5 294.8L935.1 270.9L935.7 291.8L936.2 314L936.8 324L937.4 331L938 370.8L938.6 389.9L939.2 343.8L939.8 407.8L940.4 407.4L941 399L941.5 407.3L942.1 412.5L942.7 412.2L943.3 401.7L943.9 412.1L944.5 411.1L945.1 402.5L945.7 412.1L946.3 409L946.8 405.5L947.4 400.1L948 391L948.6 377.4L949.2 330.5L949.8 303.1L950.4 337L951 345L951.6 378.5L952.1 372.3L952.7 378L953.3 371.1L953.9 370.5L954.5 391L955.1 398.1L955.7 394.5L956.3 386.8L956.9 386.8L957.4 392.5L958 389.1L958.6 386.8L959.2 391.4L959.8 400.2L960.4 399.6L961 400.5L961.6 388.6L962.2 404.8L962.7 353.5L963.3 321.2L963.9 313.7L964.5 303.1L965.1 339.8L965.7 367.6L966.3 363.9L966.9 364.2L967.5 302.4L968 231.7L968.6 318.3L969.2 336.2L969.8 302.8L970.4 317.9L971 375.6L971.6 394.6L972.2 408.1L972.8 405.3L973.3 370.7L973.9 410.7L974.5 390.2L975.1 348.1L975.7 389.5L975.7 412.5Z"/>
<path class="s" d="M128.2 412.1L128.8 400.8L129.4 376.6L130 393.6L130.6 406.9L131.1 386.9L131.7 335.6L132.3 376.7L132.9 391.9L133.5 401.8L134.1 402.8L134.7 402L135.3 388.9L135.9 400.4L136.4 324.9L137 237.9L137.6 332.5L138.2 397.8L138.8 363.3L139.4 302.7L140 306.3L140.6 402.4L141.2 393.6L141.7 391.4L142.3 374.9L142.9 338.2L143.5 270.9L144.1 316.3L144.7 378.6L145.3 348.3L145.9 366L146.5 336.4L147 318L147.6 296.1L148.2 330.8L148.8 353.5L149.4 360.9L150 362.4L150.6 339.3L151.2 346.5L151.8 335.5L152.3 350L152.9 321.8L153.5 294.7L154.1 300.4L154.7 309.4L155.3 327.9L155.9 324.2L156.5 328.1L157.1 296.1L157.6 309L158.2 358L158.8 338.4L159.4 309.1L160 358.7L160.6 390.7L161.2 394.6L161.8 400.6L162.4 411.7L162.9 387.6L163.5 409.9L164.1 407.6L164.7 397L165.3 327.4L165.9 364.4L166.5 391.5L167.1 388.1L167.7 366.3L168.2 396.7L168.8 340.6L169.4 263.9L170 331.9L170.6 399.9L171.2 401.7L171.8 401.3L172.4 359.2L173 383.5L173.5 390.7L174.1 397L174.7 401.7L175.3 401.7L175.9 388L176.5 338.1L177.1 388.2L177.7 383.6L178.3 367.1L178.8 340.5L179.4 340.6L180 329.7L180.6 244.9L181.2 312.1L181.8 380L182.4 373.8L183 393.5L183.6 409.4L184.2 412.1L184.7 394.9L185.3 409.1L185.9 412.5L186.5 404.8L187.1 377.4L187.7 400.4L188.3 390.1L188.9 411.5L189.5 412.5L190 412.3L190.6 411.3L191.2 412.4L191.8 412.5L192.4 411.6L193 392.3L193.6 371.3L194.2 369.6L194.8 396.5L195.3 404.5L195.9 383.7L196.5 382.1L197.1 384.9L197.7 401.4L198.3 407.5L198.9 404.5L199.5 366.4L200.1 362.9L200.6 379.5L201.2 355.4L201.8 315.5L202.4 345.8L203 394.6L203.6 398.7L204.2 400.5L204.8 392.9L205.4 401.4L205.9 399.4L206.5 368.4L207.1 400.1L207.7 399.9L208.3 389.2L208.9 374.8L209.5 383.6L210.1 398.9L210.7 399.2L211.2 376L211.8 363.9L212.4 396.9L213 399.1L213.6 398.9L214.2 398.7L214.8 398.3L215.4 398.2L216 387.6L216.5 374.1L217.1 397.1L217.7 396.1L218.3 395.4L218.9 394.6L219.5 396.5L220.1 396.8L220.7 396.7L221.3 396.1L221.8 386.9L222.4 375.1L223 360.9L223.6 379.5L224.2 405.4L224.8 364.1L225.4 367.7L226 394.7L226.6 394.7L227.1 394.7L227.7 389.9L228.3 392.1L228.9 387.4L229.5 388.8L230.1 380.3L230.7 382.3L231.3 387.1L231.9 385.3L232.4 382.4L233 364.8L233.6 372.8L234.2 375.9L234.8 369.9L235.4 350.5L236 372.1L236.6 371.1L237.2 363.3L237.7 354.1L238.3 333.4L238.9 357L239.5 355.8L240.1 350.8L240.7 352.5L241.3 365.5L241.9 350.3L242.5 313.1L243 341L243.6 357.4L244.2 294.1L244.8 257.3L245.4 345.6L246 412.5L246.6 409.3L247.2 396.8L247.8 407.3L248.3 407.2L248.9 412.5L249.5 410.9L250.1 407.4L250.7 408.5L251.3 410.1L251.9 411L252.5 412.3L253.1 412.5L253.6 412.3L254.2 412.1L254.8 406.5L255.4 386.5L256 388.1L256.6 404.9L257.2 412L257.8 411.9L258.4 409.5L258.9 403.5L259.5 376.2L260.1 410.2L260.7 411.9L261.3 407.9L261.9 399.1L262.5 412.5L263.1 376.8L263.7 393.8L264.2 391.2L264.8 391.7L265.4 380.9L266 384.4L266.6 392.6L267.2 410.2L267.8 395.2L268.4 401.5L269 405.3L269.5 385.1L270.1 370.7L270.7 370.4L271.3 410.9L271.9 412.5L272.5 412L273.1 411.3L273.7 412.5L274.3 410.4L274.8 412.4L275.4 412.5L276 388.8L276.6 369.9L277.2 394.8L277.8 399.5L278.4 386L279 360.7L279.6 348.1L280.1 377.4L280.7 392.3L281.3 383.1L281.9 395.9L282.5 380.9L283.1 390.3L283.7 397.9L284.3 386.3L284.9 396L285.4 393.9L286 396.7L286.6 395.1L287.2 396.3L287.8 397.3L288.4 376.1L289 383.8L289.6 395L290.2 390.6L290.8 396.1L291.3 398.1L291.9 397.7L292.5 397.6L293.1 398.1L293.7 381.5L294.3 395.1L294.9 386.8L295.5 341.4L296.1 342.2L296.6 384L297.2 379.8L297.8 379.9L298.4 371.2L299 343.7L299.6 365L300.2 331.6L300.8 276.7L301.4 328L301.9 362L302.5 355.9L303.1 326.6L303.7 343.3L304.3 361.2L304.9 345.4L305.5 314.7L306.1 335.6L306.7 360.6L307.2 360.7L307.8 358.1L308.4 348.2L309 356.7L309.6 340.4L310.2 304.7L310.8 296.1L311.4 303.6L312 356.1L312.5 355L313.1 358.3L313.7 338.8L314.3 312.6L314.9 319.3L315.5 352.9L316.1 359.6L316.7 384.2L317.3 327.6L317.8 335.7L318.4 377.5L319 328.6L319.6 344.6L320.2 323.9L320.8 290.3L321.4 323.6L322 345.7L322.6 311.5L323.1 355.5L323.7 361.5L324.3 357.8L324.9 335.2L325.5 356.3L326.1 361.6L326.7 362.2L327.3 362.4L327.9 359.5L328.4 334L329 292.2L329.6 257.3L330.2 309.2L330.8 333.1L331.4 324.7L332 380.6L332.6 338.5L333.2 319.4L333.7 331.8L334.3 355.3L334.9 331.8L335.5 337.6L336.1 345.6L336.7 389.5L337.3 324.5L337.9 305.4L338.5 287.7L339 257.3L339.6 274.6L340.2 308.6L340.8 306.2L341.4 282.1L342 285.7L342.6 298.8L343.2 341.2L343.8 319.9L344.3 280.6L344.9 298.8L345.5 285.8L346.1 276.9L346.7 296.2L347.3 286.7L347.9 276.9L348.5 276.2L349.1 327.7L349.6 339.9L350.2 329.7L350.8 322.1L351.4 305.8L352 307.9L352.6 356.7L353.2 317.4L353.8 307.6L354.4 291.2L354.9 307.7L355.5 289.6L356.1 287L356.7 290L357.3 283.8L357.9 275.5L358.5 300.6L359.1 314.3L359.7 313.1L360.2 313.2L360.8 308.9L361.4 287.7L362 301.5L362.6 312.7L363.2 312.5L363.8 311.2L364.4 300.1L365 311L365.5 304.8L366.1 306.1L366.7 310.1L367.3 289.6L367.9 283L368.5 273.4L369.1 260.6L369.7 237.9L370.3 272.9L370.8 304.4L371.4 292.4L372 275.1L372.6 269.9L373.2 278.2L373.8 302.9L374.4 305L375 303.1L375.6 299.9L376.1 305.4L376.7 300.6L377.3 296.4L377.9 307.9L378.5 262.1L379.1 232.3L379.7 250.5L380.3 262.4L380.9 266.8L381.4 249.4L382 282.4L382.6 302.8L383.2 309.3L383.8 300.9L384.4 281.1L385 285.1L385.6 245.1L386.2 293.1L386.7 307.8L387.3 259.9L387.9 232.3L388.5 255.7L389.1 307.9L389.7 308.7L390.3 272.9L390.9 276.9L391.5 294.6L392 299.8L392.6 287.6L393.2 274.6L393.8 259.9L394.4 234.5L395 230.4L395.6 250.3L396.2 242.7L396.8 226.3L397.4 228.7L397.9 226.6L398.5 282.1L399.1 274.4L399.7 228.1L400.3 298.5L400.9 306.2L401.5 284.7L402.1 301L402.7 335.6L403.2 285.6L403.8 252.9L404.4 226.3L405 255.3L405.6 274.4L406.2 262.7L406.8 243.9L407.4 259.9L408 252.9L408.5 259.1L409.1 257.9L409.7 266.5L410.3 283.5L410.9 282.8L411.5 277.7L412.1 261.7L412.7 251.8L413.3 264.2L413.8 242.7L414.4 225L415 241.3L415.6 219.7L416.2 228.2L416.8 250.5L417.4 252.9L418 218.6L418.6 267.7L419.1 299.5L419.7 319L420.3 356L420.9 385.5L421.5 412.5L422.1 401.2L422.7 408.2L423.3 409.1L423.9 412L424.4 405.4L425 412.2L425.6 410.8L426.2 406.9L426.8 412.1L427.4 409.5L428 402.9L428.6 412.3L429.2 411.8L429.7 412.2L430.3 403.4L430.9 406.2L431.5 411.8L432.1 412.4L432.7 412.5L433.3 412.5L433.9 412.5L434.5 408.4L435 412.5L435.6 407.5L436.2 412.5L436.8 410.7L437.4 412.3L438 412.1L438.6 393.8L439.2 409.3L439.8 404.2L440.3 386.6L440.9 367.9L441.5 397.1L442.1 407L442.7 412.1L443.3 412.5L443.9 408.4L444.5 379.1L445.1 392.4L445.6 395.2L446.2 397L446.8 367.9L447.4 396.7L448 385L448.6 399.2L449.2 393.5L449.8 411.7L450.4 411.7L450.9 375.7L451.5 360.6L452.1 389.5L452.7 411.5L453.3 390.6L453.9 409.7L454.5 392.5L455.1 355.2L455.7 412.5L456.2 385.9L456.8 367.9L457.4 396.9L458 401.3L458.6 388.2L459.2 405.1L459.8 390L460.4 411.4L461 412.5L461.5 408.6L462.1 404.3L462.7 384.5L463.3 363.6L463.9 396.4L464.5 398L465.1 380.8L465.7 348.1L466.3 375.6L466.8 397.5L467.4 397.4L468 376.7L468.6 385.4L469.2 385.7L469.8 379.9L470.4 389.9L471 390.4L471.6 394.7L472.1 397.9L472.7 396.4L473.3 396.5L473.9 397.5L474.5 398L475.1 381.8L475.7 384.3L476.3 382.8L476.9 354.3L477.4 382.9L478 383.7L478.6 389.9L479.2 389.7L479.8 396.1L480.4 392.6L481 390.7L481.6 383.3L482.2 385.9L482.7 400.1L483.3 407.1L483.9 406.1L484.5 375L485.1 371.6L485.7 379.7L486.3 360.9L486.9 370.9L487.5 406.3L488 395.4L488.6 392.7L489.2 367.7L489.8 371.1L490.4 349.8L491 349.6L491.6 392.1L492.2 370.7L492.8 385.3L493.3 396.7L493.9 364.6L494.5 392.6L495.1 397.5L495.7 374.6L496.3 348.1L496.9 380.7L497.5 383.8L498.1 373.8L498.6 372L499.2 354.7L499.8 329.3L500.4 315.7L501 302.2L501.6 299.2L502.2 324.7L502.8 329.3L503.4 330.4L504 294.6L504.5 292.3L505.1 283.3L505.7 309.8L506.3 342.6L506.9 353.2L507.5 351.8L508.1 383.9L508.7 354.5L509.3 354.9L509.8 352.4L510.4 323L511 353.1L511.6 348.1L512.2 383.5L512.8 352.5L513.4 351.8L514 351.5L514.6 330.3L515.1 340L515.7 351.3L516.3 331.5L516.9 354.8L517.5 304.2L518.1 226.3L518.7 271.1L519.3 291.9L519.9 340L520.4 345L521 350.2L521.6 337.5L522.2 299.6L522.8 352.8L523.4 360.7L524 313.7L524.6 335L525.2 341.2L525.7 297L526.3 283.3L526.9 312.3L527.5 360.8L528.1 363.6L528.7 363.5L529.3 362.4L529.9 363.1L530.5 360.9L531 336.8L531.6 341.8L532.2 336.7L532.8 318.6L533.4 291.3L534 273.9L534.6 288.3L535.2 304.9L535.8 301.2L536.3 312.4L536.9 293.2L537.5 283.3L538.1 313.7L538.7 342.7L539.3 345.8L539.9 371.2L540.5 274.2L541.1 282.4L541.6 290.3L542.2 324.5L542.8 326L543.4 301.7L544 276.7L544.6 281.2L545.2 267.9L545.8 307.8L546.4 372.8L546.9 403.1L547.5 408.8L548.1 409.2L548.7 404.6L549.3 411.8L549.9 411.3L550.5 383.3L551.1 363.8L551.7 344.3L552.2 397L552.8 389.3L553.4 376.2L554 336.1L554.6 374.5L555.2 375.1L555.8 379.2L556.4 352.7L557 312.7L557.5 369L558.1 348.4L558.7 296.1L559.3 331.6L559.9 330.1L560.5 371.6L561.1 313.5L561.7 283.3L562.3 311.8L562.8 354.3L563.4 367.4L564 361.2L564.6 368.8L565.2 377.5L565.8 360.9L566.4 391L567 397.7L567.6 374.1L568.1 390.5L568.7 395.6L569.3 371.4L569.9 387.1L570.5 392.1L571.1 390.3L571.7 391.1L572.3 357.6L572.9 315.5L573.4 357.8L574 380.9L574.6 386.9L575.2 386.5L575.8 385.7L576.4 384.8L577 381.7L577.6 380.9L578.2 344.6L578.7 325.2L579.3 355.8L579.9 335.6L580.5 321.9L581.1 364.7L581.7 358L582.3 322L582.9 337.3L583.5 307.4L584 276.7L584.6 292.7L585.2 364.8L585.8 392.9L586.4 310.7L587 353.3L587.6 342.3L588.2 395.2L588.8 394.4L589.3 400.1L589.9 407L590.5 388.8L591.1 373.4L591.7 368L592.3 360.2L592.9 308.7L593.5 387.7L594.1 295.6L594.6 326.3L595.2 323L595.8 266.7L596.4 293L597 294.9L597.6 263.7L598.2 266.5L598.8 256.2L599.4 176.1L599.9 136.2L600.5 196.3L601.1 259.1L601.7 344.7L602.3 314.2L602.9 237L603.5 269.9L604.1 261.9L604.7 264.2L605.3 287.6L605.8 269.7L606.4 169.3L607 70.7L607.6 166.9L608.2 218.8L608.8 238.4L609.4 259.5L610 259.1L610.6 284.2L611.1 373.6L611.7 268.9L612.3 319.9L612.9 329.5L613.5 328.1L614.1 333L614.7 334.1L615.3 323.2L615.9 290.3L616.4 278.8L617 333.5L617.6 353.4L618.2 352.6L618.8 321.6L619.4 395.1L620 331.3L620.6 349.1L621.2 346.7L621.7 315.6L622.3 311.5L622.9 352.8L623.5 319.1L624.1 271.7L624.7 263.9L625.3 282.6L625.9 303.1L626.5 346.6L627 347L627.6 307.5L628.2 316.1L628.8 347.8L629.4 344L630 338.7L630.6 322.9L631.2 299.4L631.8 306.2L632.3 299.9L632.9 275.4L633.5 294L634.1 305.7L634.7 325.1L635.3 330.6L635.9 342.3L636.5 352.1L637.1 357.9L637.6 365L638.2 368.8L638.8 345.4L639.4 323.5L640 296.1L640.6 335.4L641.2 399.3L641.8 395.2L642.4 399.3L642.9 412.3L643.5 384.9L644.1 397.9L644.7 411.8L645.3 412.1L645.9 397.4L646.5 373.7L647.1 399.1L647.7 412.3L648.2 405L648.8 388.2L649.4 384.3L650 375.9L650.6 412.5L651.2 404L651.8 404.1L652.4 412.3L653 406.2L653.5 378.9L654.1 365.9L654.7 395.1L655.3 411.5L655.9 399.7L656.5 402L657.1 394.7L657.7 366.6L658.3 367.1L658.8 404.2L659.4 411.3L660 385.4L660.6 364.9L661.2 407.9L661.8 412.5L662.4 412.5L663 376.3L663.6 379.5L664.1 399.8L664.7 376L665.3 409.3L665.9 412.5L666.5 404.4L667.1 365.7L667.7 360.7L668.3 391.6L668.9 389.2L669.4 357.8L670 354.3L670.6 392.3L671.2 411.6L671.8 396L672.4 390.1L673 360.9L673.6 364L674.2 396.7L674.7 398.2L675.3 393.3L675.9 409.7L676.5 384.8L677.1 400.7L677.7 380.2L678.3 372.8L678.9 396L679.5 373.7L680 393L680.6 387L681.2 376.6L681.8 396.2L682.4 409.5L683 412.5L683.6 412.4L684.2 412.5L684.8 412.5L685.3 406.7L685.9 412.1L686.5 410.9L687.1 401.8L687.7 394.7L688.3 399.2L688.9 412.5L689.5 406L690.1 412.5L690.6 410.7L691.2 410.9L691.8 391L692.4 374.6L693 383.3L693.6 383L694.2 408.5L694.8 410.8L695.4 410.1L695.9 411.4L696.5 411.4L697.1 409.5L697.7 402.1L698.3 412.4L698.9 411.7L699.5 412.3L700.1 396.9L700.7 390.6L701.2 402.7L701.8 397.5L702.4 373.7L703 384.8L703.6 373.1L704.2 390.8L704.8 410.8L705.4 407.3L706 412.3L706.5 407.8L707.1 408.1L707.7 403.4L708.3 391.7L708.9 354.3L709.5 391.9L710.1 412.5L710.7 412.5L711.3 398.5L711.9 403.3L712.4 408.2L713 392.5L713.6 372.1L714.2 405.2L714.8 405.4L715.4 385.4L716 379.7L716.6 406.1L717.2 409.8L717.7 394.8L718.3 408.9L718.9 410.6L719.5 402.3L720.1 382.7L720.7 408.1L721.3 406.7L721.9 410.8L722.5 412.5L723 411.5L723.6 401.9L724.2 397L724.8 373.2L725.4 408.6L726 410.7L726.6 407L727.2 411.7L727.8 394.7L728.3 409.4L728.9 412.5L729.5 399.1L730.1 373.7L730.7 388.4L731.3 410.8L731.9 395.8L732.5 386L733.1 411.3L733.6 395.4L734.2 372.1L734.8 406L735.4 395.9L736 410.3L736.6 412.5L737.2 412.5L737.8 385L738.4 404.3L738.9 411.5L739.5 412.3L740.1 401.7L740.7 409.8L741.3 401L741.9 405.1L742.5 408.2L743.1 384.9L743.7 407L744.2 397.3L744.8 373.7L745.4 391.4L746 408.2L746.6 403.7L747.2 409.3L747.8 412.5L748.4 412.5L749 410.9L749.5 401L750.1 387.9L750.7 410.3L751.3 407.5L751.9 404.1L752.5 406.3L753.1 385.6L753.7 394.5L754.3 407.4L754.8 400.6L755.4 411.5L756 368.8L756.6 328.3L757.2 377.9L757.8 411.8L758.4 412.5L759 356.3L759.6 392.3L760.1 411.7L760.7 387.6L761.3 403.3L761.9 412.5L762.5 392.4L763.1 354.3L763.7 383.8L764.3 412.1L764.9 412.5L765.4 402L766 407.4L766.6 412.5L767.2 406.5L767.8 412.5L768.4 400.8L769 403.1L769.6 392.3L770.2 398.3L770.7 377.6L771.3 371.3L771.9 383.7L772.5 402L773.1 403L773.7 408.3L774.3 412.5L774.9 412.5L775.5 370.8L776 379.5L776.6 372.8L777.2 393.9L777.8 372.4L778.4 393.5L779 378.4L779.6 409.8L780.2 412.4L780.8 406.7L781.3 387L781.9 384.5L782.5 360.9L783.1 389.6L783.7 402.8L784.3 383.2L784.9 392.7L785.5 412.4L786.1 397.4L786.6 373.7L787.2 399.1L787.8 412.5L788.4 405.5L789 410.5L789.6 405.9L790.2 411.9L790.8 412.5L791.4 394.7L791.9 368.3L792.5 397.7L793.1 410.1L793.7 407.4L794.3 404.2L794.9 412.2L795.5 412.5L796.1 390.2L796.7 348.1L797.2 379.2L797.8 402.4L798.4 412L799 407.7L799.6 373.2L800.2 408.3L800.8 403.3L801.4 373.7L802 371.7L802.5 412.5L803.1 399.6L803.7 408.7L804.3 412.5L804.9 407.6L805.5 407L806.1 399.4L806.7 374.8L807.3 375.2L807.8 411.5L808.4 401.8L809 381.5L809.6 400.9L810.2 402.5L810.8 410L811.4 409.7L812 408.1L812.6 411.5L813.1 407.3L813.7 407.4L814.3 388L814.9 409.7L815.5 402.8L816.1 392.5L816.7 407L817.3 412.5L817.9 410.2L818.5 390.7L819 406.9L819.6 404.1L820.2 402.4L820.8 412.4L821.4 404.2L822 406.6L822.6 407.7L823.2 391.7L823.8 366.5L824.3 362L824.9 390.7L825.5 378.4L826.1 390.9L826.7 382.9L827.3 373.7L827.9 353.5L828.5 342.7L829.1 345.9L829.6 339.4L830.2 352.8L830.8 356.2L831.4 358.5L832 356.8L832.6 355.4L833.2 312.4L833.8 263.9L834.4 309.6L834.9 334.9L835.5 379.5L836.1 412.5L836.7 412.2L837.3 409.5L837.9 412.3L838.5 404.6L839.1 407.2L839.7 411.5L840.2 412.1L840.8 412.1L841.4 412.3L842 405.4L842.6 411.9L843.2 412.5L843.8 409.5L844.4 409.1L845 401.3L845.5 381.5L846.1 401.8L846.7 412.5L847.3 411.6L847.9 404.6L848.5 407.9L849.1 411.2L849.7 407.6L850.3 411.2L850.8 410.7L851.4 412.1L852 410.5L852.6 407.3L853.2 405.5L853.8 394.2L854.4 388.6L855 383.4L855.6 400.8L856.1 389.4L856.7 406.8L857.3 395.9L857.9 393.9L858.5 346.4L859.1 309.3L859.7 335.6L860.3 386.5L860.9 392.9L861.4 394.3L862 390.7L862.6 378.2L863.2 397.9L863.8 398.8L864.4 387.4L865 370.1L865.6 341.1L866.2 376.1L866.7 401.4L867.3 396.3L867.9 392.5L868.5 397.9L869.1 381.2L869.7 406.9L870.3 410.5L870.9 405.7L871.5 399.2L872 407.2L872.6 409.3L873.2 404.8L873.8 379.7L874.4 375.9L875 374.2L875.6 372.5L876.2 403.1L876.8 405.6L877.3 398.6L877.9 400.2L878.5 401L879.1 397.9L879.7 373.5L880.3 387.1L880.9 407.6L881.5 399.2L882.1 385.5L882.6 363L883.2 365.9L883.8 376.7L884.4 385.5L885 385.1L885.6 380L886.2 364L886.8 370.3L887.4 383.8L887.9 378.5L888.5 353L889.1 362L889.7 349.9L890.3 350.2L890.9 355.8L891.5 320.5L892.1 251.1L892.7 314.9L893.2 324.9L893.8 331.8L894.4 335.8L895 366L895.6 373.1L896.2 361.3L896.8 366.6L897.4 381.4L898 360.5L898.5 370.4L899.1 362.3L899.7 300L900.3 336.5L900.9 270.9L901.5 317.1L902.1 342.8L902.7 289.4L903.3 340.5L903.8 353.3L904.4 314.5L905 331.7L905.6 329.7L906.2 301.7L906.8 346.6L907.4 347.2L908 329.3L908.6 269.7L909.1 277.5L909.7 301.8L910.3 350.7L910.9 345.6L911.5 352.4L912.1 315.7L912.7 270.9L913.3 314.8L913.9 338.8L914.4 353.8L915 360.5L915.6 352.5L916.2 343.6L916.8 334.6L917.4 290.8L918 310.3L918.6 298.4L919.2 312.8L919.7 263.9L920.3 290.4L920.9 283L921.5 263.9L922.1 320L922.7 344.5L923.3 293.8L923.9 336.8L924.5 311.5L925.1 289.4L925.6 304.4L926.2 291.7L926.8 277.5L927.4 293.2L928 311.7L928.6 315.2L929.2 322.1L929.8 329.1L930.4 321.2L930.9 320L931.5 312.6L932.1 328L932.7 292.5L933.3 320.5L933.9 324.2L934.5 294.8L935.1 270.9L935.7 291.8L936.2 314L936.8 324L937.4 331L938 370.8L938.6 389.9L939.2 343.8L939.8 407.8L940.4 407.4L941 399L941.5 407.3L942.1 412.5L942.7 412.2L943.3 401.7L943.9 412.1L944.5 411.1L945.1 402.5L945.7 412.1L946.3 409L946.8 405.5L947.4 400.1L948 391L948.6 377.4L949.2 330.5L949.8 303.1L950.4 337L951 345L951.6 378.5L952.1 372.3L952.7 378L953.3 371.1L953.9 370.5L954.5 391L955.1 398.1L955.7 394.5L956.3 386.8L956.9 386.8L957.4 392.5L958 389.1L958.6 386.8L959.2 391.4L959.8 400.2L960.4 399.6L961 400.5L961.6 388.6L962.2 404.8L962.7 353.5L963.3 321.2L963.9 313.7L964.5 303.1L965.1 339.8L965.7 367.6L966.3 363.9L966.9 364.2L967.5 302.4L968 231.7L968.6 318.3L969.2 336.2L969.8 302.8L970.4 317.9L971 375.6L971.6 394.6L972.2 408.1L972.8 405.3L973.3 370.7L973.9 410.7L974.5 390.2L975.1 348.1L975.7 389.5"/>
<text class="ttl" x="513" y="49.1">Merges Running</text>
<text class="ax yl" x="97.1" y="419.9">0</text>
<text class="ax yl" x="97.1" y="342.7">0.2</text>
<text class="ax yl" x="97.1" y="265.5">0.4</text>
<text class="ax yl" x="97.1" y="188.3">0.6</text>
<text class="ax yl" x="97.1" y="111.1">0.8</text>
<text class="ax xl" x="228.7" y="462.1" textLength="46" lengthAdjust="spacingAndGlyphs">9pm</text>
<text class="ax xl" x="334.7" y="462.1" textLength="55" lengthAdjust="spacingAndGlyphs">12am</text>
<text class="ax xl" x="440.7" y="462.1" textLength="45" lengthAdjust="spacingAndGlyphs">3am</text>
<text class="ax xl" x="546.7" y="462.1" textLength="46" lengthAdjust="spacingAndGlyphs">6am</text>
<text class="ax xl" x="652.7" y="462.1" textLength="46" lengthAdjust="spacingAndGlyphs">9am</text>
<text class="ax xl" x="758.7" y="462.1" textLength="57" lengthAdjust="spacingAndGlyphs">12pm</text>
<text class="ax xl" x="864.7" y="462.1" textLength="46" lengthAdjust="spacingAndGlyphs">3pm</text>
<text class="ax xl" x="970.7" y="462.1" textLength="47" lengthAdjust="spacingAndGlyphs">6pm</text>
<text class="ax xl" x="228.7" y="498.6" textLength="84" lengthAdjust="spacingAndGlyphs">11/11/23</text>
<text class="ax xl" x="334.7" y="498.6" textLength="52.5" lengthAdjust="spacingAndGlyphs">11/12</text>
</svg></div>
</body></html>
